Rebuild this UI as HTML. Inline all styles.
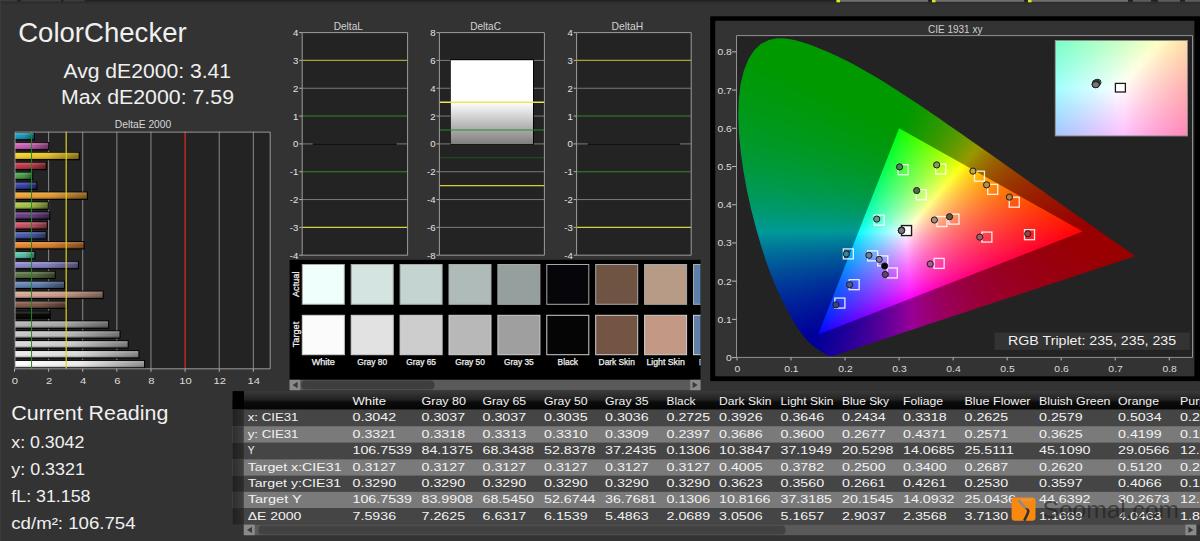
<!DOCTYPE html>
<html lang="en"><head><meta charset="utf-8"><title>ColorChecker</title>
<style>
html,body{margin:0;padding:0;background:#333}
body{width:1200px;height:541px;overflow:hidden;position:relative;font-family:"Liberation Sans",sans-serif}
svg{position:absolute;left:0;top:0;font-family:"Liberation Sans",sans-serif}
.cie{position:absolute;left:0;top:0;width:1200px;height:541px}
.cie i{position:absolute;display:block;height:2px}
.ins{position:absolute;overflow:hidden}
.ins i{position:absolute;display:block;left:0;width:100%;height:3px}
</style></head><body>
<svg width="1200" height="541" viewBox="0 0 1200 541">
<defs>
<linearGradient id="b0" x1="0" x2="1" y1="0" y2="0"><stop offset="0" stop-color="#1c9fc0"/><stop offset=".5" stop-color="#1a92b1"/><stop offset="1" stop-color="#10596c"/></linearGradient>
<linearGradient id="b1" x1="0" x2="1" y1="0" y2="0"><stop offset="0" stop-color="#cf62b8"/><stop offset=".5" stop-color="#be5aa9"/><stop offset="1" stop-color="#743767"/></linearGradient>
<linearGradient id="b2" x1="0" x2="1" y1="0" y2="0"><stop offset="0" stop-color="#f5cf2a"/><stop offset=".5" stop-color="#e1be27"/><stop offset="1" stop-color="#897418"/></linearGradient>
<linearGradient id="b3" x1="0" x2="1" y1="0" y2="0"><stop offset="0" stop-color="#c83c4c"/><stop offset=".5" stop-color="#b83746"/><stop offset="1" stop-color="#70222b"/></linearGradient>
<linearGradient id="b4" x1="0" x2="1" y1="0" y2="0"><stop offset="0" stop-color="#4fa552"/><stop offset=".5" stop-color="#49984b"/><stop offset="1" stop-color="#2c5c2e"/></linearGradient>
<linearGradient id="b5" x1="0" x2="1" y1="0" y2="0"><stop offset="0" stop-color="#3a46ad"/><stop offset=".5" stop-color="#35409f"/><stop offset="1" stop-color="#202761"/></linearGradient>
<linearGradient id="b6" x1="0" x2="1" y1="0" y2="0"><stop offset="0" stop-color="#efa636"/><stop offset=".5" stop-color="#dc9932"/><stop offset="1" stop-color="#865d1e"/></linearGradient>
<linearGradient id="b7" x1="0" x2="1" y1="0" y2="0"><stop offset="0" stop-color="#aac84c"/><stop offset=".5" stop-color="#9cb846"/><stop offset="1" stop-color="#5f702b"/></linearGradient>
<linearGradient id="b8" x1="0" x2="1" y1="0" y2="0"><stop offset="0" stop-color="#6d4187"/><stop offset=".5" stop-color="#643c7c"/><stop offset="1" stop-color="#3d244c"/></linearGradient>
<linearGradient id="b9" x1="0" x2="1" y1="0" y2="0"><stop offset="0" stop-color="#cf546c"/><stop offset=".5" stop-color="#be4d63"/><stop offset="1" stop-color="#742f3c"/></linearGradient>
<linearGradient id="b10" x1="0" x2="1" y1="0" y2="0"><stop offset="0" stop-color="#4b5db0"/><stop offset=".5" stop-color="#4556a2"/><stop offset="1" stop-color="#2a3463"/></linearGradient>
<linearGradient id="b11" x1="0" x2="1" y1="0" y2="0"><stop offset="0" stop-color="#e98a34"/><stop offset=".5" stop-color="#d67f30"/><stop offset="1" stop-color="#824d1d"/></linearGradient>
<linearGradient id="b12" x1="0" x2="1" y1="0" y2="0"><stop offset="0" stop-color="#5fc8ae"/><stop offset=".5" stop-color="#57b8a0"/><stop offset="1" stop-color="#357061"/></linearGradient>
<linearGradient id="b13" x1="0" x2="1" y1="0" y2="0"><stop offset="0" stop-color="#8f8bcf"/><stop offset=".5" stop-color="#8480be"/><stop offset="1" stop-color="#504e74"/></linearGradient>
<linearGradient id="b14" x1="0" x2="1" y1="0" y2="0"><stop offset="0" stop-color="#5f7648"/><stop offset=".5" stop-color="#576d42"/><stop offset="1" stop-color="#354228"/></linearGradient>
<linearGradient id="b15" x1="0" x2="1" y1="0" y2="0"><stop offset="0" stop-color="#6688b8"/><stop offset=".5" stop-color="#5e7da9"/><stop offset="1" stop-color="#394c67"/></linearGradient>
<linearGradient id="b16" x1="0" x2="1" y1="0" y2="0"><stop offset="0" stop-color="#d9a995"/><stop offset=".5" stop-color="#c89b89"/><stop offset="1" stop-color="#7a5f53"/></linearGradient>
<linearGradient id="b17" x1="0" x2="1" y1="0" y2="0"><stop offset="0" stop-color="#85604f"/><stop offset=".5" stop-color="#7a5849"/><stop offset="1" stop-color="#4a362c"/></linearGradient>
<linearGradient id="b18" x1="0" x2="1" y1="0" y2="0"><stop offset="0" stop-color="#0c0c0c"/><stop offset=".5" stop-color="#0b0b0b"/><stop offset="1" stop-color="#070707"/></linearGradient>
<linearGradient id="b19" x1="0" x2="1" y1="0" y2="0"><stop offset="0" stop-color="#b4b4b4"/><stop offset=".5" stop-color="#a6a6a6"/><stop offset="1" stop-color="#656565"/></linearGradient>
<linearGradient id="b20" x1="0" x2="1" y1="0" y2="0"><stop offset="0" stop-color="#c8c8c8"/><stop offset=".5" stop-color="#b8b8b8"/><stop offset="1" stop-color="#707070"/></linearGradient>
<linearGradient id="b21" x1="0" x2="1" y1="0" y2="0"><stop offset="0" stop-color="#dadada"/><stop offset=".5" stop-color="#c9c9c9"/><stop offset="1" stop-color="#7a7a7a"/></linearGradient>
<linearGradient id="b22" x1="0" x2="1" y1="0" y2="0"><stop offset="0" stop-color="#ececec"/><stop offset=".5" stop-color="#d9d9d9"/><stop offset="1" stop-color="#848484"/></linearGradient>
<linearGradient id="b23" x1="0" x2="1" y1="0" y2="0"><stop offset="0" stop-color="#ffffff"/><stop offset=".5" stop-color="#ebebeb"/><stop offset="1" stop-color="#8f8f8f"/></linearGradient>
<linearGradient id="dc" x1="0" x2="0" y1="0" y2="1"><stop offset="0" stop-color="#fff"/><stop offset=".5" stop-color="#fff"/><stop offset="1" stop-color="#7e7e7e"/></linearGradient>
<linearGradient id="th" x1="0" x2="0" y1="0" y2="1"><stop offset="0" stop-color="#3a3a3a"/><stop offset=".45" stop-color="#222"/><stop offset=".6" stop-color="#0c0c0c"/><stop offset="1" stop-color="#050505"/></linearGradient>
<linearGradient id="tc" x1="0" x2="1" y1="0" y2="0"><stop offset="0" stop-color="#000" stop-opacity=".3"/><stop offset="1" stop-color="#000" stop-opacity="0"/></linearGradient>
<linearGradient id="lg" gradientUnits="userSpaceOnUse" x1="0" x2="0" y1="497" y2="521"><stop offset=".45" stop-color="#8a8a92"/><stop offset=".5" stop-color="#2c3030"/></linearGradient>
</defs>
<rect x="0" y="0" width="1200" height="1.7" fill="#222"/>
<rect x="0" y="1.7" width="1200" height="2.3" fill="#2e2e2e"/>
<rect x="0" y="0" width="17" height="1.4" fill="#3d3d3d"/>
<rect x="21" y="0" width="40" height="1.4" fill="#3d3d3d"/>
<rect x="63.5" y="0" width="21" height="1.4" fill="#3d3d3d"/>
<rect x="836.5" y="0" width="91.5" height="1.8" fill="#707070"/>
<rect x="836.5" y="0" width="3.5" height="2.3" fill="#e0e818"/>
<rect x="932" y="0" width="92" height="1.8" fill="#707070"/>
<rect x="932" y="0" width="3.5" height="2.3" fill="#e0e818"/>
<rect x="1028" y="0" width="100" height="1.8" fill="#707070"/>
<rect x="1028" y="0" width="3.5" height="2.3" fill="#e0e818"/>
<rect x="1133" y="0" width="18" height="1.8" fill="#5c5c5c"/>
<rect x="1158" y="0" width="22" height="1.8" fill="#5c5c5c"/>
<rect x="1185" y="0" width="15" height="1.8" fill="#5c5c5c"/>
<rect x="0" y="1.7" width="1.2" height="540" fill="#3b3b3b"/>
<text x="18.2" y="41.5" font-size="28" fill="#f0f0f0" textLength="168.5" lengthAdjust="spacingAndGlyphs">ColorChecker</text>
<text x="63.5" y="77.7" font-size="19.5" fill="#f0f0f0" textLength="167.5" lengthAdjust="spacingAndGlyphs">Avg dE2000: 3.41</text>
<text x="61" y="104.3" font-size="19.5" fill="#f0f0f0" textLength="173" lengthAdjust="spacingAndGlyphs">Max dE2000: 7.59</text>
<rect x="15" y="131.6" width="255.2" height="237.2" fill="#232323"/>
<text x="114.8" y="128" font-size="10" fill="#d8d8d8" textLength="56.4" lengthAdjust="spacingAndGlyphs">DeltaE 2000</text>
<line x1="48.62" y1="131.6" x2="48.62" y2="368.8" stroke="#8a8a8a" stroke-width="1"/>
<line x1="82.74" y1="131.6" x2="82.74" y2="368.8" stroke="#8a8a8a" stroke-width="1"/>
<line x1="116.86" y1="131.6" x2="116.86" y2="368.8" stroke="#8a8a8a" stroke-width="1"/>
<line x1="150.98" y1="131.6" x2="150.98" y2="368.8" stroke="#8a8a8a" stroke-width="1"/>
<line x1="219.22" y1="131.6" x2="219.22" y2="368.8" stroke="#8a8a8a" stroke-width="1"/>
<line x1="253.34" y1="131.6" x2="253.34" y2="368.8" stroke="#8a8a8a" stroke-width="1"/>
<rect x="14.5" y="132.11" width="20.28" height="8.3" fill="#000"/>
<rect x="15" y="132.91" width="18.78" height="6.3" fill="url(#b0)"/>
<rect x="15" y="132.91" width="18.78" height="2.2" fill="#fff" opacity=".14"/>
<rect x="15" y="137.71" width="18.78" height="1.5" fill="#000" opacity=".16"/>
<rect x="14.5" y="142.02" width="34.78" height="8.3" fill="#000"/>
<rect x="15" y="142.82" width="33.28" height="6.3" fill="url(#b1)"/>
<rect x="15" y="142.82" width="33.28" height="2.2" fill="#fff" opacity=".14"/>
<rect x="15" y="147.62" width="33.28" height="1.5" fill="#000" opacity=".16"/>
<rect x="14.5" y="151.94" width="65.15" height="8.3" fill="#000"/>
<rect x="15" y="152.74" width="63.65" height="6.3" fill="url(#b2)"/>
<rect x="15" y="152.74" width="63.65" height="2.2" fill="#fff" opacity=".14"/>
<rect x="15" y="157.54" width="63.65" height="1.5" fill="#000" opacity=".16"/>
<rect x="14.5" y="161.85" width="32.22" height="8.3" fill="#000"/>
<rect x="15" y="162.65" width="30.72" height="6.3" fill="url(#b3)"/>
<rect x="15" y="162.65" width="30.72" height="2.2" fill="#fff" opacity=".14"/>
<rect x="15" y="167.45" width="30.72" height="1.5" fill="#000" opacity=".16"/>
<rect x="14.5" y="171.77" width="18.74" height="8.3" fill="#000"/>
<rect x="15" y="172.57" width="17.24" height="6.3" fill="url(#b4)"/>
<rect x="15" y="172.57" width="17.24" height="2.2" fill="#fff" opacity=".14"/>
<rect x="15" y="177.37" width="17.24" height="1.5" fill="#000" opacity=".16"/>
<rect x="14.5" y="181.68" width="22.84" height="8.3" fill="#000"/>
<rect x="15" y="182.48" width="21.34" height="6.3" fill="url(#b5)"/>
<rect x="15" y="182.48" width="21.34" height="2.2" fill="#fff" opacity=".14"/>
<rect x="15" y="187.28" width="21.34" height="1.5" fill="#000" opacity=".16"/>
<rect x="14.5" y="191.59" width="73.33" height="8.3" fill="#000"/>
<rect x="15" y="192.39" width="71.83" height="6.3" fill="url(#b6)"/>
<rect x="15" y="192.39" width="71.83" height="2.2" fill="#fff" opacity=".14"/>
<rect x="15" y="197.19" width="71.83" height="1.5" fill="#000" opacity=".16"/>
<rect x="14.5" y="201.51" width="34.27" height="8.3" fill="#000"/>
<rect x="15" y="202.31" width="32.77" height="6.3" fill="url(#b7)"/>
<rect x="15" y="202.31" width="32.77" height="2.2" fill="#fff" opacity=".14"/>
<rect x="15" y="207.11" width="32.77" height="1.5" fill="#000" opacity=".16"/>
<rect x="14.5" y="211.42" width="35.8" height="8.3" fill="#000"/>
<rect x="15" y="212.22" width="34.3" height="6.3" fill="url(#b8)"/>
<rect x="15" y="212.22" width="34.3" height="2.2" fill="#fff" opacity=".14"/>
<rect x="15" y="217.02" width="34.3" height="1.5" fill="#000" opacity=".16"/>
<rect x="14.5" y="221.34" width="33.24" height="8.3" fill="#000"/>
<rect x="15" y="222.14" width="31.74" height="6.3" fill="url(#b9)"/>
<rect x="15" y="222.14" width="31.74" height="2.2" fill="#fff" opacity=".14"/>
<rect x="15" y="226.94" width="31.74" height="1.5" fill="#000" opacity=".16"/>
<rect x="14.5" y="231.25" width="32.22" height="8.3" fill="#000"/>
<rect x="15" y="232.05" width="30.72" height="6.3" fill="url(#b10)"/>
<rect x="15" y="232.05" width="30.72" height="2.2" fill="#fff" opacity=".14"/>
<rect x="15" y="236.85" width="30.72" height="1.5" fill="#000" opacity=".16"/>
<rect x="14.5" y="241.17" width="70.03" height="8.3" fill="#000"/>
<rect x="15" y="241.97" width="68.53" height="6.3" fill="url(#b11)"/>
<rect x="15" y="241.97" width="68.53" height="2.2" fill="#fff" opacity=".14"/>
<rect x="15" y="246.77" width="68.53" height="1.5" fill="#000" opacity=".16"/>
<rect x="14.5" y="251.08" width="20.91" height="8.3" fill="#000"/>
<rect x="15" y="251.88" width="19.41" height="6.3" fill="url(#b12)"/>
<rect x="15" y="251.88" width="19.41" height="2.2" fill="#fff" opacity=".14"/>
<rect x="15" y="256.68" width="19.41" height="1.5" fill="#000" opacity=".16"/>
<rect x="14.5" y="261" width="64.34" height="8.3" fill="#000"/>
<rect x="15" y="261.8" width="62.84" height="6.3" fill="url(#b13)"/>
<rect x="15" y="261.8" width="62.84" height="2.2" fill="#fff" opacity=".14"/>
<rect x="15" y="266.6" width="62.84" height="1.5" fill="#000" opacity=".16"/>
<rect x="14.5" y="270.91" width="41.21" height="8.3" fill="#000"/>
<rect x="15" y="271.71" width="39.71" height="6.3" fill="url(#b14)"/>
<rect x="15" y="271.71" width="39.71" height="2.2" fill="#fff" opacity=".14"/>
<rect x="15" y="276.51" width="39.71" height="1.5" fill="#000" opacity=".16"/>
<rect x="14.5" y="280.83" width="50.54" height="8.3" fill="#000"/>
<rect x="15" y="281.63" width="49.04" height="6.3" fill="url(#b15)"/>
<rect x="15" y="281.63" width="49.04" height="2.2" fill="#fff" opacity=".14"/>
<rect x="15" y="286.43" width="49.04" height="1.5" fill="#000" opacity=".16"/>
<rect x="14.5" y="290.74" width="89.13" height="8.3" fill="#000"/>
<rect x="15" y="291.54" width="87.63" height="6.3" fill="url(#b16)"/>
<rect x="15" y="291.54" width="87.63" height="2.2" fill="#fff" opacity=".14"/>
<rect x="15" y="296.34" width="87.63" height="1.5" fill="#000" opacity=".16"/>
<rect x="14.5" y="300.66" width="53.04" height="8.3" fill="#000"/>
<rect x="15" y="301.46" width="51.54" height="6.3" fill="url(#b17)"/>
<rect x="15" y="301.46" width="51.54" height="2.2" fill="#fff" opacity=".14"/>
<rect x="15" y="306.26" width="51.54" height="1.5" fill="#000" opacity=".16"/>
<rect x="14.5" y="310.57" width="36.3" height="8.3" fill="#000"/>
<rect x="15" y="311.37" width="34.8" height="6.3" fill="url(#b18)"/>
<rect x="15" y="311.37" width="34.8" height="2.2" fill="#fff" opacity=".14"/>
<rect x="15" y="316.17" width="34.8" height="1.5" fill="#000" opacity=".16"/>
<rect x="14.5" y="320.48" width="94.6" height="8.3" fill="#000"/>
<rect x="15" y="321.28" width="93.1" height="6.3" fill="url(#b19)"/>
<rect x="15" y="321.28" width="93.1" height="2.2" fill="#fff" opacity=".14"/>
<rect x="15" y="326.08" width="93.1" height="1.5" fill="#000" opacity=".16"/>
<rect x="14.5" y="330.4" width="105.99" height="8.3" fill="#000"/>
<rect x="15" y="331.2" width="104.49" height="6.3" fill="url(#b20)"/>
<rect x="15" y="331.2" width="104.49" height="2.2" fill="#fff" opacity=".14"/>
<rect x="15" y="336" width="104.49" height="1.5" fill="#000" opacity=".16"/>
<rect x="14.5" y="340.31" width="114.14" height="8.3" fill="#000"/>
<rect x="15" y="341.11" width="112.64" height="6.3" fill="url(#b21)"/>
<rect x="15" y="341.11" width="112.64" height="2.2" fill="#fff" opacity=".14"/>
<rect x="15" y="345.91" width="112.64" height="1.5" fill="#000" opacity=".16"/>
<rect x="14.5" y="350.23" width="124.9" height="8.3" fill="#000"/>
<rect x="15" y="351.03" width="123.4" height="6.3" fill="url(#b22)"/>
<rect x="15" y="351.03" width="123.4" height="2.2" fill="#fff" opacity=".14"/>
<rect x="15" y="355.83" width="123.4" height="1.5" fill="#000" opacity=".16"/>
<rect x="14.5" y="360.14" width="130.55" height="8.3" fill="#000"/>
<rect x="15" y="360.94" width="129.05" height="6.3" fill="url(#b23)"/>
<rect x="15" y="360.94" width="129.05" height="2.2" fill="#fff" opacity=".14"/>
<rect x="15" y="365.74" width="129.05" height="1.5" fill="#000" opacity=".16"/>
<line x1="31.56" y1="131.6" x2="31.56" y2="368.8" stroke="#1f8a1f" stroke-width="1"/>
<line x1="66.18" y1="131.6" x2="66.18" y2="368.8" stroke="#dcd424" stroke-width="1.2"/>
<line x1="185.1" y1="131.6" x2="185.1" y2="368.8" stroke="#c82828" stroke-width="1.4"/>
<path d="M15 132.1V368.8H270.2V132.1" fill="none" stroke="#9a9a9a" stroke-width="1"/>
<line x1="15" y1="132.1" x2="270.2" y2="132.1" stroke="#9a9a9a" stroke-width="1"/>
<line x1="14.5" y1="368.8" x2="14.5" y2="371.8" stroke="#b0b0b0" stroke-width="1"/>
<text x="11.87" y="383.6" font-size="9.8" fill="#dcdcdc" textLength="6.27" lengthAdjust="spacingAndGlyphs">0</text>
<line x1="48.62" y1="368.8" x2="48.62" y2="371.8" stroke="#b0b0b0" stroke-width="1"/>
<text x="45.99" y="383.6" font-size="9.8" fill="#dcdcdc" textLength="6.27" lengthAdjust="spacingAndGlyphs">2</text>
<line x1="82.74" y1="368.8" x2="82.74" y2="371.8" stroke="#b0b0b0" stroke-width="1"/>
<text x="80.11" y="383.6" font-size="9.8" fill="#dcdcdc" textLength="6.27" lengthAdjust="spacingAndGlyphs">4</text>
<line x1="116.86" y1="368.8" x2="116.86" y2="371.8" stroke="#b0b0b0" stroke-width="1"/>
<text x="114.23" y="383.6" font-size="9.8" fill="#dcdcdc" textLength="6.27" lengthAdjust="spacingAndGlyphs">6</text>
<line x1="150.98" y1="368.8" x2="150.98" y2="371.8" stroke="#b0b0b0" stroke-width="1"/>
<text x="148.35" y="383.6" font-size="9.8" fill="#dcdcdc" textLength="6.27" lengthAdjust="spacingAndGlyphs">8</text>
<line x1="185.1" y1="368.8" x2="185.1" y2="371.8" stroke="#b0b0b0" stroke-width="1"/>
<text x="179.33" y="383.6" font-size="9.8" fill="#dcdcdc" textLength="12.54" lengthAdjust="spacingAndGlyphs">10</text>
<line x1="219.22" y1="368.8" x2="219.22" y2="371.8" stroke="#b0b0b0" stroke-width="1"/>
<text x="213.45" y="383.6" font-size="9.8" fill="#dcdcdc" textLength="12.54" lengthAdjust="spacingAndGlyphs">12</text>
<line x1="253.34" y1="368.8" x2="253.34" y2="371.8" stroke="#b0b0b0" stroke-width="1"/>
<text x="247.57" y="383.6" font-size="9.8" fill="#dcdcdc" textLength="12.54" lengthAdjust="spacingAndGlyphs">14</text>
<rect x="302.2" y="32.6" width="105.4" height="222.6" fill="#232323"/>
<text x="333.7" y="30" font-size="10.1" fill="#d0d0d0" textLength="29.2" lengthAdjust="spacingAndGlyphs">DeltaL</text>
<line x1="299.2" y1="255.2" x2="302.2" y2="255.2" stroke="#b0b0b0" stroke-width="1"/>
<text x="289.86" y="258.7" font-size="9.9" fill="#e4e4e4" textLength="8.54" lengthAdjust="spacingAndGlyphs">-4</text>
<line x1="299.2" y1="227.38" x2="302.2" y2="227.38" stroke="#b0b0b0" stroke-width="1"/>
<text x="289.86" y="230.88" font-size="9.9" fill="#e4e4e4" textLength="8.54" lengthAdjust="spacingAndGlyphs">-3</text>
<line x1="302.2" y1="227.38" x2="407.6" y2="227.38" stroke="#d8d040" stroke-width="1.2"/>
<line x1="299.2" y1="199.55" x2="302.2" y2="199.55" stroke="#b0b0b0" stroke-width="1"/>
<text x="289.86" y="203.05" font-size="9.9" fill="#e4e4e4" textLength="8.54" lengthAdjust="spacingAndGlyphs">-2</text>
<line x1="302.2" y1="199.55" x2="407.6" y2="199.55" stroke="#7a7a7a" stroke-width="1"/>
<line x1="299.2" y1="171.72" x2="302.2" y2="171.72" stroke="#b0b0b0" stroke-width="1"/>
<text x="289.86" y="175.22" font-size="9.9" fill="#e4e4e4" textLength="8.54" lengthAdjust="spacingAndGlyphs">-1</text>
<line x1="302.2" y1="171.72" x2="407.6" y2="171.72" stroke="#2f8a2f" stroke-width="1.1"/>
<line x1="299.2" y1="143.9" x2="302.2" y2="143.9" stroke="#b0b0b0" stroke-width="1"/>
<text x="293.06" y="147.4" font-size="9.9" fill="#e4e4e4" textLength="5.34" lengthAdjust="spacingAndGlyphs">0</text>
<line x1="302.2" y1="143.9" x2="407.6" y2="143.9" stroke="#7a7a7a" stroke-width="1"/>
<line x1="299.2" y1="116.07" x2="302.2" y2="116.07" stroke="#b0b0b0" stroke-width="1"/>
<text x="293.06" y="119.57" font-size="9.9" fill="#e4e4e4" textLength="5.34" lengthAdjust="spacingAndGlyphs">1</text>
<line x1="302.2" y1="116.07" x2="407.6" y2="116.07" stroke="#2f8a2f" stroke-width="1.1"/>
<line x1="299.2" y1="88.25" x2="302.2" y2="88.25" stroke="#b0b0b0" stroke-width="1"/>
<text x="293.06" y="91.75" font-size="9.9" fill="#e4e4e4" textLength="5.34" lengthAdjust="spacingAndGlyphs">2</text>
<line x1="302.2" y1="88.25" x2="407.6" y2="88.25" stroke="#7a7a7a" stroke-width="1"/>
<line x1="299.2" y1="60.42" x2="302.2" y2="60.42" stroke="#b0b0b0" stroke-width="1"/>
<text x="293.06" y="63.92" font-size="9.9" fill="#e4e4e4" textLength="5.34" lengthAdjust="spacingAndGlyphs">3</text>
<line x1="302.2" y1="60.42" x2="407.6" y2="60.42" stroke="#aaa238" stroke-width="1.1"/>
<line x1="299.2" y1="32.6" x2="302.2" y2="32.6" stroke="#b0b0b0" stroke-width="1"/>
<text x="293.06" y="36.1" font-size="9.9" fill="#e4e4e4" textLength="5.34" lengthAdjust="spacingAndGlyphs">4</text>
<rect x="439.4" y="32.6" width="105" height="222.6" fill="#232323"/>
<text x="470.2" y="30" font-size="10.1" fill="#d0d0d0" textLength="30.8" lengthAdjust="spacingAndGlyphs">DeltaC</text>
<line x1="436.4" y1="255.2" x2="439.4" y2="255.2" stroke="#b0b0b0" stroke-width="1"/>
<text x="427.06" y="258.7" font-size="9.9" fill="#e4e4e4" textLength="8.54" lengthAdjust="spacingAndGlyphs">-8</text>
<line x1="436.4" y1="227.38" x2="439.4" y2="227.38" stroke="#b0b0b0" stroke-width="1"/>
<text x="427.06" y="230.88" font-size="9.9" fill="#e4e4e4" textLength="8.54" lengthAdjust="spacingAndGlyphs">-6</text>
<line x1="439.4" y1="227.38" x2="544.4" y2="227.38" stroke="#7a7a7a" stroke-width="1"/>
<line x1="436.4" y1="199.55" x2="439.4" y2="199.55" stroke="#b0b0b0" stroke-width="1"/>
<text x="427.06" y="203.05" font-size="9.9" fill="#e4e4e4" textLength="8.54" lengthAdjust="spacingAndGlyphs">-4</text>
<line x1="439.4" y1="199.55" x2="544.4" y2="199.55" stroke="#7a7a7a" stroke-width="1"/>
<line x1="436.4" y1="171.72" x2="439.4" y2="171.72" stroke="#b0b0b0" stroke-width="1"/>
<text x="427.06" y="175.22" font-size="9.9" fill="#e4e4e4" textLength="8.54" lengthAdjust="spacingAndGlyphs">-2</text>
<line x1="439.4" y1="171.72" x2="544.4" y2="171.72" stroke="#7a7a7a" stroke-width="1"/>
<line x1="436.4" y1="143.9" x2="439.4" y2="143.9" stroke="#b0b0b0" stroke-width="1"/>
<text x="430.26" y="147.4" font-size="9.9" fill="#e4e4e4" textLength="5.34" lengthAdjust="spacingAndGlyphs">0</text>
<line x1="439.4" y1="143.9" x2="544.4" y2="143.9" stroke="#7a7a7a" stroke-width="1"/>
<line x1="436.4" y1="116.07" x2="439.4" y2="116.07" stroke="#b0b0b0" stroke-width="1"/>
<text x="430.26" y="119.57" font-size="9.9" fill="#e4e4e4" textLength="5.34" lengthAdjust="spacingAndGlyphs">2</text>
<line x1="439.4" y1="116.07" x2="544.4" y2="116.07" stroke="#7a7a7a" stroke-width="1"/>
<line x1="436.4" y1="88.25" x2="439.4" y2="88.25" stroke="#b0b0b0" stroke-width="1"/>
<text x="430.26" y="91.75" font-size="9.9" fill="#e4e4e4" textLength="5.34" lengthAdjust="spacingAndGlyphs">4</text>
<line x1="439.4" y1="88.25" x2="544.4" y2="88.25" stroke="#7a7a7a" stroke-width="1"/>
<line x1="436.4" y1="60.42" x2="439.4" y2="60.42" stroke="#b0b0b0" stroke-width="1"/>
<text x="430.26" y="63.92" font-size="9.9" fill="#e4e4e4" textLength="5.34" lengthAdjust="spacingAndGlyphs">6</text>
<line x1="439.4" y1="60.42" x2="544.4" y2="60.42" stroke="#7a7a7a" stroke-width="1"/>
<line x1="436.4" y1="32.6" x2="439.4" y2="32.6" stroke="#b0b0b0" stroke-width="1"/>
<text x="430.26" y="36.1" font-size="9.9" fill="#e4e4e4" textLength="5.34" lengthAdjust="spacingAndGlyphs">8</text>
<rect x="576.6" y="32.6" width="114.6" height="222.6" fill="#232323"/>
<text x="611.6" y="30" font-size="10.1" fill="#d0d0d0" textLength="31.6" lengthAdjust="spacingAndGlyphs">DeltaH</text>
<line x1="573.6" y1="255.2" x2="576.6" y2="255.2" stroke="#b0b0b0" stroke-width="1"/>
<text x="564.26" y="258.7" font-size="9.9" fill="#e4e4e4" textLength="8.54" lengthAdjust="spacingAndGlyphs">-4</text>
<line x1="573.6" y1="227.38" x2="576.6" y2="227.38" stroke="#b0b0b0" stroke-width="1"/>
<text x="564.26" y="230.88" font-size="9.9" fill="#e4e4e4" textLength="8.54" lengthAdjust="spacingAndGlyphs">-3</text>
<line x1="576.6" y1="227.38" x2="691.2" y2="227.38" stroke="#d8d040" stroke-width="1.2"/>
<line x1="573.6" y1="199.55" x2="576.6" y2="199.55" stroke="#b0b0b0" stroke-width="1"/>
<text x="564.26" y="203.05" font-size="9.9" fill="#e4e4e4" textLength="8.54" lengthAdjust="spacingAndGlyphs">-2</text>
<line x1="576.6" y1="199.55" x2="691.2" y2="199.55" stroke="#7a7a7a" stroke-width="1"/>
<line x1="573.6" y1="171.72" x2="576.6" y2="171.72" stroke="#b0b0b0" stroke-width="1"/>
<text x="564.26" y="175.22" font-size="9.9" fill="#e4e4e4" textLength="8.54" lengthAdjust="spacingAndGlyphs">-1</text>
<line x1="576.6" y1="171.72" x2="691.2" y2="171.72" stroke="#2f8a2f" stroke-width="1.1"/>
<line x1="573.6" y1="143.9" x2="576.6" y2="143.9" stroke="#b0b0b0" stroke-width="1"/>
<text x="567.46" y="147.4" font-size="9.9" fill="#e4e4e4" textLength="5.34" lengthAdjust="spacingAndGlyphs">0</text>
<line x1="576.6" y1="143.9" x2="691.2" y2="143.9" stroke="#7a7a7a" stroke-width="1"/>
<line x1="573.6" y1="116.07" x2="576.6" y2="116.07" stroke="#b0b0b0" stroke-width="1"/>
<text x="567.46" y="119.57" font-size="9.9" fill="#e4e4e4" textLength="5.34" lengthAdjust="spacingAndGlyphs">1</text>
<line x1="576.6" y1="116.07" x2="691.2" y2="116.07" stroke="#2f8a2f" stroke-width="1.1"/>
<line x1="573.6" y1="88.25" x2="576.6" y2="88.25" stroke="#b0b0b0" stroke-width="1"/>
<text x="567.46" y="91.75" font-size="9.9" fill="#e4e4e4" textLength="5.34" lengthAdjust="spacingAndGlyphs">2</text>
<line x1="576.6" y1="88.25" x2="691.2" y2="88.25" stroke="#7a7a7a" stroke-width="1"/>
<line x1="573.6" y1="60.42" x2="576.6" y2="60.42" stroke="#b0b0b0" stroke-width="1"/>
<text x="567.46" y="63.92" font-size="9.9" fill="#e4e4e4" textLength="5.34" lengthAdjust="spacingAndGlyphs">3</text>
<line x1="576.6" y1="60.42" x2="691.2" y2="60.42" stroke="#aaa238" stroke-width="1.1"/>
<line x1="573.6" y1="32.6" x2="576.6" y2="32.6" stroke="#b0b0b0" stroke-width="1"/>
<text x="567.46" y="36.1" font-size="9.9" fill="#e4e4e4" textLength="5.34" lengthAdjust="spacingAndGlyphs">4</text>
<rect x="312.7" y="143.3" width="84" height="1.6" fill="#0a0a0a"/>
<rect x="587.7" y="143.3" width="92.3" height="1.6" fill="#0a0a0a"/>
<rect x="450.3" y="59.2" width="83.6" height="85.6" fill="#000"/>
<rect x="450.8" y="60.2" width="82.2" height="83.9" fill="url(#dc)"/>
<line x1="439.4" y1="129.99" x2="544.4" y2="129.99" stroke="#2c8a2c" stroke-width="1.2" opacity="1"/>
<line x1="439.4" y1="157.81" x2="544.4" y2="157.81" stroke="#236c23" stroke-width="0.9" opacity="0.8"/>
<line x1="439.4" y1="102.16" x2="544.4" y2="102.16" stroke="#f0e850" stroke-width="1.5" opacity="1"/>
<line x1="439.4" y1="185.64" x2="544.4" y2="185.64" stroke="#d8d030" stroke-width="1.4" opacity="1"/>
<path d="M302.2 255.2V32.6H407.6V255.2Z" fill="none" stroke="#9c9c9c" stroke-width="1"/>
<path d="M439.4 255.2V32.6H544.4V255.2Z" fill="none" stroke="#9c9c9c" stroke-width="1"/>
<path d="M576.6 255.2V32.6H691.2V255.2Z" fill="none" stroke="#9c9c9c" stroke-width="1"/>
<rect x="289.6" y="259.8" width="410.9" height="120" fill="#000"/>
<clipPath id="swc"><rect x="289.6" y="259.8" width="410.9" height="120"/></clipPath>
<g clip-path="url(#swc)">
<rect x="302.3" y="264.5" width="42" height="39.8" fill="#eefffc" stroke="#a8a8a8" stroke-width="1"/>
<rect x="302.3" y="315.3" width="42" height="39.4" fill="#fbfbfb" stroke="#d0d0d0" stroke-width="1"/>
<text x="311.65" y="365.2" font-size="8.5" fill="#f4f4f4" textLength="23.3" lengthAdjust="spacingAndGlyphs" stroke="#f4f4f4" stroke-width=".25">White</text>
<rect x="351.2" y="264.5" width="42" height="39.8" fill="#d4e5e1" stroke="#a8a8a8" stroke-width="1"/>
<rect x="351.2" y="315.3" width="42" height="39.4" fill="#e2e2e2" stroke="#d0d0d0" stroke-width="1"/>
<text x="357.35" y="365.2" font-size="8.5" fill="#f4f4f4" textLength="29.7" lengthAdjust="spacingAndGlyphs" stroke="#f4f4f4" stroke-width=".25">Gray 80</text>
<rect x="400.1" y="264.5" width="42" height="39.8" fill="#c4d4d1" stroke="#a8a8a8" stroke-width="1"/>
<rect x="400.1" y="315.3" width="42" height="39.4" fill="#cdcdcd" stroke="#d0d0d0" stroke-width="1"/>
<text x="406.25" y="365.2" font-size="8.5" fill="#f4f4f4" textLength="29.7" lengthAdjust="spacingAndGlyphs" stroke="#f4f4f4" stroke-width=".25">Gray 65</text>
<rect x="449" y="264.5" width="42" height="39.8" fill="#aebbb9" stroke="#a8a8a8" stroke-width="1"/>
<rect x="449" y="315.3" width="42" height="39.4" fill="#b8b8b8" stroke="#d0d0d0" stroke-width="1"/>
<text x="455.15" y="365.2" font-size="8.5" fill="#f4f4f4" textLength="29.7" lengthAdjust="spacingAndGlyphs" stroke="#f4f4f4" stroke-width=".25">Gray 50</text>
<rect x="497.9" y="264.5" width="42" height="39.8" fill="#959f9e" stroke="#a8a8a8" stroke-width="1"/>
<rect x="497.9" y="315.3" width="42" height="39.4" fill="#9f9f9f" stroke="#d0d0d0" stroke-width="1"/>
<text x="504.05" y="365.2" font-size="8.5" fill="#f4f4f4" textLength="29.7" lengthAdjust="spacingAndGlyphs" stroke="#f4f4f4" stroke-width=".25">Gray 35</text>
<rect x="546.8" y="264.5" width="42" height="39.8" fill="#060509" stroke="#a8a8a8" stroke-width="1"/>
<rect x="546.8" y="315.3" width="42" height="39.4" fill="#050505" stroke="#d0d0d0" stroke-width="1"/>
<text x="557.6" y="365.2" font-size="8.5" fill="#f4f4f4" textLength="20.4" lengthAdjust="spacingAndGlyphs" stroke="#f4f4f4" stroke-width=".25">Black</text>
<rect x="595.7" y="264.5" width="42" height="39.8" fill="#6f5343" stroke="#a8a8a8" stroke-width="1"/>
<rect x="595.7" y="315.3" width="42" height="39.4" fill="#745444" stroke="#d0d0d0" stroke-width="1"/>
<text x="598.6" y="365.2" font-size="8.5" fill="#f4f4f4" textLength="36.2" lengthAdjust="spacingAndGlyphs" stroke="#f4f4f4" stroke-width=".25">Dark Skin</text>
<rect x="644.6" y="264.5" width="42" height="39.8" fill="#b89b86" stroke="#a8a8a8" stroke-width="1"/>
<rect x="644.6" y="315.3" width="42" height="39.4" fill="#c39885" stroke="#d0d0d0" stroke-width="1"/>
<text x="646.4" y="365.2" font-size="8.5" fill="#f4f4f4" textLength="38.4" lengthAdjust="spacingAndGlyphs" stroke="#f4f4f4" stroke-width=".25">Light Skin</text>
<rect x="693.5" y="264.5" width="42" height="39.8" fill="#5b80a9" stroke="#a8a8a8" stroke-width="1"/>
<rect x="693.5" y="315.3" width="42" height="39.4" fill="#6080a8" stroke="#d0d0d0" stroke-width="1"/>
<text x="699" y="365.2" font-size="8.5" fill="#f4f4f4" textLength="31" lengthAdjust="spacingAndGlyphs" stroke="#f4f4f4" stroke-width=".25">Blue Sky</text>
<text transform="translate(299.3 284.3) rotate(-90)" text-anchor="middle" font-size="9.2" fill="#f0f0f0" stroke="#f0f0f0" stroke-width=".25">Actual</text>
<text transform="translate(299.3 334.5) rotate(-90)" text-anchor="middle" font-size="9.2" fill="#f0f0f0" stroke="#f0f0f0" stroke-width=".25">Target</text>
</g>
<rect x="289.6" y="379.8" width="410.9" height="10.4" fill="#5a5a5a"/>
<rect x="289.6" y="379.8" width="10.6" height="10.4" fill="#8a8a8a"/>
<path d="M297.6 381.8v6.4l-5-3.2z" fill="#3a3a3a"/>
<rect x="301.3" y="380.6" width="133.2" height="8.8" fill="#3e3e3e" rx="4"/>
<rect x="690.2" y="379.8" width="10.3" height="10.4" fill="#8a8a8a"/>
<path d="M692.6 381.8v6.4l5-3.2z" fill="#3a3a3a"/>
<rect x="710.2" y="16.3" width="490" height="364.8" fill="#000"/>
<rect x="715.2" y="20.8" width="479.2" height="355.5" fill="#333333"/>
<rect x="736.5" y="35.6" width="456" height="321.8" fill="#232323"/>
<text x="928" y="32.5" font-size="10.4" fill="#cfcfcf" textLength="54.4" lengthAdjust="spacingAndGlyphs">CIE 1931 xy</text>
<path d="M736.5 357.4V35.6H1192.5V357.4Z" fill="none" stroke="#919191" stroke-width="1"/>
<line x1="737" y1="357.4" x2="737" y2="360.4" stroke="#b8b8b8" stroke-width="1"/>
<text x="734.51" y="371.6" font-size="9.8" fill="#dcdcdc" textLength="5.78" lengthAdjust="spacingAndGlyphs">0</text>
<line x1="732" y1="357.6" x2="736.5" y2="357.6" stroke="#b8b8b8" stroke-width="1"/>
<text x="726.12" y="361.1" font-size="9.8" fill="#dcdcdc" textLength="5.78" lengthAdjust="spacingAndGlyphs">0</text>
<line x1="791.03" y1="357.4" x2="791.03" y2="360.4" stroke="#b8b8b8" stroke-width="1"/>
<text x="784.21" y="371.6" font-size="9.8" fill="#dcdcdc" textLength="14.44" lengthAdjust="spacingAndGlyphs">0.1</text>
<line x1="732" y1="319.38" x2="736.5" y2="319.38" stroke="#b8b8b8" stroke-width="1"/>
<text x="717.46" y="322.88" font-size="9.8" fill="#dcdcdc" textLength="14.44" lengthAdjust="spacingAndGlyphs">0.1</text>
<line x1="845.06" y1="357.4" x2="845.06" y2="360.4" stroke="#b8b8b8" stroke-width="1"/>
<text x="838.24" y="371.6" font-size="9.8" fill="#dcdcdc" textLength="14.44" lengthAdjust="spacingAndGlyphs">0.2</text>
<line x1="732" y1="281.16" x2="736.5" y2="281.16" stroke="#b8b8b8" stroke-width="1"/>
<text x="717.46" y="284.66" font-size="9.8" fill="#dcdcdc" textLength="14.44" lengthAdjust="spacingAndGlyphs">0.2</text>
<line x1="899.09" y1="357.4" x2="899.09" y2="360.4" stroke="#b8b8b8" stroke-width="1"/>
<text x="892.27" y="371.6" font-size="9.8" fill="#dcdcdc" textLength="14.44" lengthAdjust="spacingAndGlyphs">0.3</text>
<line x1="732" y1="242.94" x2="736.5" y2="242.94" stroke="#b8b8b8" stroke-width="1"/>
<text x="717.46" y="246.44" font-size="9.8" fill="#dcdcdc" textLength="14.44" lengthAdjust="spacingAndGlyphs">0.3</text>
<line x1="953.12" y1="357.4" x2="953.12" y2="360.4" stroke="#b8b8b8" stroke-width="1"/>
<text x="946.3" y="371.6" font-size="9.8" fill="#dcdcdc" textLength="14.44" lengthAdjust="spacingAndGlyphs">0.4</text>
<line x1="732" y1="204.72" x2="736.5" y2="204.72" stroke="#b8b8b8" stroke-width="1"/>
<text x="717.46" y="208.22" font-size="9.8" fill="#dcdcdc" textLength="14.44" lengthAdjust="spacingAndGlyphs">0.4</text>
<line x1="1007.15" y1="357.4" x2="1007.15" y2="360.4" stroke="#b8b8b8" stroke-width="1"/>
<text x="1000.33" y="371.6" font-size="9.8" fill="#dcdcdc" textLength="14.44" lengthAdjust="spacingAndGlyphs">0.5</text>
<line x1="732" y1="166.5" x2="736.5" y2="166.5" stroke="#b8b8b8" stroke-width="1"/>
<text x="717.46" y="170" font-size="9.8" fill="#dcdcdc" textLength="14.44" lengthAdjust="spacingAndGlyphs">0.5</text>
<line x1="1061.18" y1="357.4" x2="1061.18" y2="360.4" stroke="#b8b8b8" stroke-width="1"/>
<text x="1054.36" y="371.6" font-size="9.8" fill="#dcdcdc" textLength="14.44" lengthAdjust="spacingAndGlyphs">0.6</text>
<line x1="732" y1="128.28" x2="736.5" y2="128.28" stroke="#b8b8b8" stroke-width="1"/>
<text x="717.46" y="131.78" font-size="9.8" fill="#dcdcdc" textLength="14.44" lengthAdjust="spacingAndGlyphs">0.6</text>
<line x1="1115.21" y1="357.4" x2="1115.21" y2="360.4" stroke="#b8b8b8" stroke-width="1"/>
<text x="1108.39" y="371.6" font-size="9.8" fill="#dcdcdc" textLength="14.44" lengthAdjust="spacingAndGlyphs">0.7</text>
<line x1="732" y1="90.06" x2="736.5" y2="90.06" stroke="#b8b8b8" stroke-width="1"/>
<text x="717.46" y="93.56" font-size="9.8" fill="#dcdcdc" textLength="14.44" lengthAdjust="spacingAndGlyphs">0.7</text>
<line x1="1169.24" y1="357.4" x2="1169.24" y2="360.4" stroke="#b8b8b8" stroke-width="1"/>
<text x="1162.42" y="371.6" font-size="9.8" fill="#dcdcdc" textLength="14.44" lengthAdjust="spacingAndGlyphs">0.8</text>
<line x1="732" y1="51.84" x2="736.5" y2="51.84" stroke="#b8b8b8" stroke-width="1"/>
<text x="717.46" y="55.34" font-size="9.8" fill="#dcdcdc" textLength="14.44" lengthAdjust="spacingAndGlyphs">0.8</text>
<rect x="232.6" y="391.1" width="967.4" height="18.5" fill="url(#th)"/>
<rect x="232.6" y="391.1" width="11.4" height="18.5" fill="#000"/>
<rect x="232.6" y="409.6" width="967.4" height="16.6" fill="#454545"/>
<rect x="232.6" y="426.2" width="967.4" height="16.6" fill="#7a7a7a"/>
<rect x="232.6" y="442.8" width="967.4" height="16.5" fill="#454545"/>
<rect x="232.6" y="459.3" width="967.4" height="16.5" fill="#7a7a7a"/>
<rect x="232.6" y="475.8" width="967.4" height="16" fill="#454545"/>
<rect x="232.6" y="491.8" width="967.4" height="16.4" fill="#7a7a7a"/>
<rect x="232.6" y="508.2" width="967.4" height="16.4" fill="#454545"/>
<rect x="232.6" y="409.6" width="11.2" height="16.6" fill="#2d2d2d"/>
<rect x="232.6" y="426.2" width="11.2" height="16.6" fill="#404040"/>
<rect x="232.6" y="442.8" width="11.2" height="16.5" fill="#2d2d2d"/>
<rect x="232.6" y="459.3" width="11.2" height="16.5" fill="#404040"/>
<rect x="232.6" y="475.8" width="11.2" height="16" fill="#2d2d2d"/>
<rect x="232.6" y="491.8" width="11.2" height="16.4" fill="#404040"/>
<rect x="232.6" y="508.2" width="11.2" height="16.4" fill="#2d2d2d"/>
<rect x="232.6" y="409.6" width="11.2" height="115" fill="url(#tc)"/>
<text x="352.5" y="404.6" font-size="11.5" fill="#f2f2f2" textLength="33.5" lengthAdjust="spacingAndGlyphs">White</text>
<text x="421.5" y="404.6" font-size="11.5" fill="#f2f2f2" textLength="44.5" lengthAdjust="spacingAndGlyphs">Gray 80</text>
<text x="482.5" y="404.6" font-size="11.5" fill="#f2f2f2" textLength="43.5" lengthAdjust="spacingAndGlyphs">Gray 65</text>
<text x="544" y="404.6" font-size="11.5" fill="#f2f2f2" textLength="43.5" lengthAdjust="spacingAndGlyphs">Gray 50</text>
<text x="605" y="404.6" font-size="11.5" fill="#f2f2f2" textLength="43.5" lengthAdjust="spacingAndGlyphs">Gray 35</text>
<text x="666.5" y="404.6" font-size="11.5" fill="#f2f2f2" textLength="29" lengthAdjust="spacingAndGlyphs">Black</text>
<text x="719" y="404.6" font-size="11.5" fill="#f2f2f2" textLength="52.5" lengthAdjust="spacingAndGlyphs">Dark Skin</text>
<text x="780.5" y="404.6" font-size="11.5" fill="#f2f2f2" textLength="53" lengthAdjust="spacingAndGlyphs">Light Skin</text>
<text x="842" y="404.6" font-size="11.5" fill="#f2f2f2" textLength="47" lengthAdjust="spacingAndGlyphs">Blue Sky</text>
<text x="903" y="404.6" font-size="11.5" fill="#f2f2f2" textLength="40" lengthAdjust="spacingAndGlyphs">Foliage</text>
<text x="964.5" y="404.6" font-size="11.5" fill="#f2f2f2" textLength="66" lengthAdjust="spacingAndGlyphs">Blue Flower</text>
<text x="1039" y="404.6" font-size="11.5" fill="#f2f2f2" textLength="71.5" lengthAdjust="spacingAndGlyphs">Bluish Green</text>
<text x="1118" y="404.6" font-size="11.5" fill="#f2f2f2" textLength="41" lengthAdjust="spacingAndGlyphs">Orange</text>
<text x="1180" y="404.6" font-size="11.5" fill="#f2f2f2" textLength="73" lengthAdjust="spacingAndGlyphs">Purplish Blue</text>
<text x="247.7" y="421.1" font-size="11.5" fill="#f2f2f2" textLength="50.8" lengthAdjust="spacingAndGlyphs">x: CIE31</text>
<text x="352.5" y="421.1" font-size="11.5" fill="#f2f2f2" textLength="43.62" lengthAdjust="spacingAndGlyphs">0.3042</text>
<text x="421.5" y="421.1" font-size="11.5" fill="#f2f2f2" textLength="43.62" lengthAdjust="spacingAndGlyphs">0.3037</text>
<text x="482.5" y="421.1" font-size="11.5" fill="#f2f2f2" textLength="43.62" lengthAdjust="spacingAndGlyphs">0.3037</text>
<text x="544" y="421.1" font-size="11.5" fill="#f2f2f2" textLength="43.62" lengthAdjust="spacingAndGlyphs">0.3035</text>
<text x="605" y="421.1" font-size="11.5" fill="#f2f2f2" textLength="43.62" lengthAdjust="spacingAndGlyphs">0.3036</text>
<text x="666.5" y="421.1" font-size="11.5" fill="#f2f2f2" textLength="43.62" lengthAdjust="spacingAndGlyphs">0.2725</text>
<text x="719" y="421.1" font-size="11.5" fill="#f2f2f2" textLength="43.62" lengthAdjust="spacingAndGlyphs">0.3926</text>
<text x="780.5" y="421.1" font-size="11.5" fill="#f2f2f2" textLength="43.62" lengthAdjust="spacingAndGlyphs">0.3646</text>
<text x="842" y="421.1" font-size="11.5" fill="#f2f2f2" textLength="43.62" lengthAdjust="spacingAndGlyphs">0.2434</text>
<text x="903" y="421.1" font-size="11.5" fill="#f2f2f2" textLength="43.62" lengthAdjust="spacingAndGlyphs">0.3318</text>
<text x="964.5" y="421.1" font-size="11.5" fill="#f2f2f2" textLength="43.62" lengthAdjust="spacingAndGlyphs">0.2625</text>
<text x="1039" y="421.1" font-size="11.5" fill="#f2f2f2" textLength="43.62" lengthAdjust="spacingAndGlyphs">0.2579</text>
<text x="1118" y="421.1" font-size="11.5" fill="#f2f2f2" textLength="43.62" lengthAdjust="spacingAndGlyphs">0.5034</text>
<text x="1180" y="421.1" font-size="11.5" fill="#f2f2f2" textLength="43.62" lengthAdjust="spacingAndGlyphs">0.2077</text>
<text x="247.7" y="437.7" font-size="11.5" fill="#f2f2f2" textLength="50.8" lengthAdjust="spacingAndGlyphs">y: CIE31</text>
<text x="352.5" y="437.7" font-size="11.5" fill="#f2f2f2" textLength="43.62" lengthAdjust="spacingAndGlyphs">0.3321</text>
<text x="421.5" y="437.7" font-size="11.5" fill="#f2f2f2" textLength="43.62" lengthAdjust="spacingAndGlyphs">0.3318</text>
<text x="482.5" y="437.7" font-size="11.5" fill="#f2f2f2" textLength="43.62" lengthAdjust="spacingAndGlyphs">0.3313</text>
<text x="544" y="437.7" font-size="11.5" fill="#f2f2f2" textLength="43.62" lengthAdjust="spacingAndGlyphs">0.3310</text>
<text x="605" y="437.7" font-size="11.5" fill="#f2f2f2" textLength="43.62" lengthAdjust="spacingAndGlyphs">0.3309</text>
<text x="666.5" y="437.7" font-size="11.5" fill="#f2f2f2" textLength="43.62" lengthAdjust="spacingAndGlyphs">0.2397</text>
<text x="719" y="437.7" font-size="11.5" fill="#f2f2f2" textLength="43.62" lengthAdjust="spacingAndGlyphs">0.3686</text>
<text x="780.5" y="437.7" font-size="11.5" fill="#f2f2f2" textLength="43.62" lengthAdjust="spacingAndGlyphs">0.3600</text>
<text x="842" y="437.7" font-size="11.5" fill="#f2f2f2" textLength="43.62" lengthAdjust="spacingAndGlyphs">0.2677</text>
<text x="903" y="437.7" font-size="11.5" fill="#f2f2f2" textLength="43.62" lengthAdjust="spacingAndGlyphs">0.4371</text>
<text x="964.5" y="437.7" font-size="11.5" fill="#f2f2f2" textLength="43.62" lengthAdjust="spacingAndGlyphs">0.2571</text>
<text x="1039" y="437.7" font-size="11.5" fill="#f2f2f2" textLength="43.62" lengthAdjust="spacingAndGlyphs">0.3625</text>
<text x="1118" y="437.7" font-size="11.5" fill="#f2f2f2" textLength="43.62" lengthAdjust="spacingAndGlyphs">0.4199</text>
<text x="1180" y="437.7" font-size="11.5" fill="#f2f2f2" textLength="43.62" lengthAdjust="spacingAndGlyphs">0.1908</text>
<text x="247.7" y="454.3" font-size="11.5" fill="#f2f2f2" textLength="6.8" lengthAdjust="spacingAndGlyphs">Y</text>
<text x="352.5" y="454.3" font-size="11.5" fill="#f2f2f2" textLength="59.48" lengthAdjust="spacingAndGlyphs">106.7539</text>
<text x="421.5" y="454.3" font-size="11.5" fill="#f2f2f2" textLength="51.55" lengthAdjust="spacingAndGlyphs">84.1375</text>
<text x="482.5" y="454.3" font-size="11.5" fill="#f2f2f2" textLength="51.55" lengthAdjust="spacingAndGlyphs">68.3438</text>
<text x="544" y="454.3" font-size="11.5" fill="#f2f2f2" textLength="51.55" lengthAdjust="spacingAndGlyphs">52.8378</text>
<text x="605" y="454.3" font-size="11.5" fill="#f2f2f2" textLength="51.55" lengthAdjust="spacingAndGlyphs">37.2435</text>
<text x="666.5" y="454.3" font-size="11.5" fill="#f2f2f2" textLength="43.62" lengthAdjust="spacingAndGlyphs">0.1306</text>
<text x="719" y="454.3" font-size="11.5" fill="#f2f2f2" textLength="51.55" lengthAdjust="spacingAndGlyphs">10.3847</text>
<text x="780.5" y="454.3" font-size="11.5" fill="#f2f2f2" textLength="51.55" lengthAdjust="spacingAndGlyphs">37.1949</text>
<text x="842" y="454.3" font-size="11.5" fill="#f2f2f2" textLength="51.55" lengthAdjust="spacingAndGlyphs">20.5298</text>
<text x="903" y="454.3" font-size="11.5" fill="#f2f2f2" textLength="51.55" lengthAdjust="spacingAndGlyphs">14.0685</text>
<text x="964.5" y="454.3" font-size="11.5" fill="#f2f2f2" textLength="49.43" lengthAdjust="spacingAndGlyphs">25.5111</text>
<text x="1039" y="454.3" font-size="11.5" fill="#f2f2f2" textLength="51.55" lengthAdjust="spacingAndGlyphs">45.1090</text>
<text x="1118" y="454.3" font-size="11.5" fill="#f2f2f2" textLength="51.55" lengthAdjust="spacingAndGlyphs">29.0566</text>
<text x="1180" y="454.3" font-size="11.5" fill="#f2f2f2" textLength="51.55" lengthAdjust="spacingAndGlyphs">12.4561</text>
<text x="247.7" y="470.8" font-size="11.5" fill="#f2f2f2" textLength="93.9" lengthAdjust="spacingAndGlyphs">Target x:CIE31</text>
<text x="352.5" y="470.8" font-size="11.5" fill="#f2f2f2" textLength="43.62" lengthAdjust="spacingAndGlyphs">0.3127</text>
<text x="421.5" y="470.8" font-size="11.5" fill="#f2f2f2" textLength="43.62" lengthAdjust="spacingAndGlyphs">0.3127</text>
<text x="482.5" y="470.8" font-size="11.5" fill="#f2f2f2" textLength="43.62" lengthAdjust="spacingAndGlyphs">0.3127</text>
<text x="544" y="470.8" font-size="11.5" fill="#f2f2f2" textLength="43.62" lengthAdjust="spacingAndGlyphs">0.3127</text>
<text x="605" y="470.8" font-size="11.5" fill="#f2f2f2" textLength="43.62" lengthAdjust="spacingAndGlyphs">0.3127</text>
<text x="666.5" y="470.8" font-size="11.5" fill="#f2f2f2" textLength="43.62" lengthAdjust="spacingAndGlyphs">0.3127</text>
<text x="719" y="470.8" font-size="11.5" fill="#f2f2f2" textLength="43.62" lengthAdjust="spacingAndGlyphs">0.4005</text>
<text x="780.5" y="470.8" font-size="11.5" fill="#f2f2f2" textLength="43.62" lengthAdjust="spacingAndGlyphs">0.3782</text>
<text x="842" y="470.8" font-size="11.5" fill="#f2f2f2" textLength="43.62" lengthAdjust="spacingAndGlyphs">0.2500</text>
<text x="903" y="470.8" font-size="11.5" fill="#f2f2f2" textLength="43.62" lengthAdjust="spacingAndGlyphs">0.3400</text>
<text x="964.5" y="470.8" font-size="11.5" fill="#f2f2f2" textLength="43.62" lengthAdjust="spacingAndGlyphs">0.2687</text>
<text x="1039" y="470.8" font-size="11.5" fill="#f2f2f2" textLength="43.62" lengthAdjust="spacingAndGlyphs">0.2620</text>
<text x="1118" y="470.8" font-size="11.5" fill="#f2f2f2" textLength="43.62" lengthAdjust="spacingAndGlyphs">0.5120</text>
<text x="1180" y="470.8" font-size="11.5" fill="#f2f2f2" textLength="43.62" lengthAdjust="spacingAndGlyphs">0.2157</text>
<text x="247.7" y="487.3" font-size="11.5" fill="#f2f2f2" textLength="93.5" lengthAdjust="spacingAndGlyphs">Target y:CIE31</text>
<text x="352.5" y="487.3" font-size="11.5" fill="#f2f2f2" textLength="43.62" lengthAdjust="spacingAndGlyphs">0.3290</text>
<text x="421.5" y="487.3" font-size="11.5" fill="#f2f2f2" textLength="43.62" lengthAdjust="spacingAndGlyphs">0.3290</text>
<text x="482.5" y="487.3" font-size="11.5" fill="#f2f2f2" textLength="43.62" lengthAdjust="spacingAndGlyphs">0.3290</text>
<text x="544" y="487.3" font-size="11.5" fill="#f2f2f2" textLength="43.62" lengthAdjust="spacingAndGlyphs">0.3290</text>
<text x="605" y="487.3" font-size="11.5" fill="#f2f2f2" textLength="43.62" lengthAdjust="spacingAndGlyphs">0.3290</text>
<text x="666.5" y="487.3" font-size="11.5" fill="#f2f2f2" textLength="43.62" lengthAdjust="spacingAndGlyphs">0.3290</text>
<text x="719" y="487.3" font-size="11.5" fill="#f2f2f2" textLength="43.62" lengthAdjust="spacingAndGlyphs">0.3623</text>
<text x="780.5" y="487.3" font-size="11.5" fill="#f2f2f2" textLength="43.62" lengthAdjust="spacingAndGlyphs">0.3560</text>
<text x="842" y="487.3" font-size="11.5" fill="#f2f2f2" textLength="43.62" lengthAdjust="spacingAndGlyphs">0.2661</text>
<text x="903" y="487.3" font-size="11.5" fill="#f2f2f2" textLength="43.62" lengthAdjust="spacingAndGlyphs">0.4261</text>
<text x="964.5" y="487.3" font-size="11.5" fill="#f2f2f2" textLength="43.62" lengthAdjust="spacingAndGlyphs">0.2530</text>
<text x="1039" y="487.3" font-size="11.5" fill="#f2f2f2" textLength="43.62" lengthAdjust="spacingAndGlyphs">0.3597</text>
<text x="1118" y="487.3" font-size="11.5" fill="#f2f2f2" textLength="43.62" lengthAdjust="spacingAndGlyphs">0.4066</text>
<text x="1180" y="487.3" font-size="11.5" fill="#f2f2f2" textLength="43.62" lengthAdjust="spacingAndGlyphs">0.1908</text>
<text x="247.7" y="503.3" font-size="11.5" fill="#f2f2f2" textLength="54.1" lengthAdjust="spacingAndGlyphs">Target Y</text>
<text x="352.5" y="503.3" font-size="11.5" fill="#f2f2f2" textLength="59.48" lengthAdjust="spacingAndGlyphs">106.7539</text>
<text x="421.5" y="503.3" font-size="11.5" fill="#f2f2f2" textLength="51.55" lengthAdjust="spacingAndGlyphs">83.9908</text>
<text x="482.5" y="503.3" font-size="11.5" fill="#f2f2f2" textLength="51.55" lengthAdjust="spacingAndGlyphs">68.5450</text>
<text x="544" y="503.3" font-size="11.5" fill="#f2f2f2" textLength="51.55" lengthAdjust="spacingAndGlyphs">52.6744</text>
<text x="605" y="503.3" font-size="11.5" fill="#f2f2f2" textLength="51.55" lengthAdjust="spacingAndGlyphs">36.7681</text>
<text x="666.5" y="503.3" font-size="11.5" fill="#f2f2f2" textLength="43.62" lengthAdjust="spacingAndGlyphs">0.1306</text>
<text x="719" y="503.3" font-size="11.5" fill="#f2f2f2" textLength="51.55" lengthAdjust="spacingAndGlyphs">10.8166</text>
<text x="780.5" y="503.3" font-size="11.5" fill="#f2f2f2" textLength="51.55" lengthAdjust="spacingAndGlyphs">37.3185</text>
<text x="842" y="503.3" font-size="11.5" fill="#f2f2f2" textLength="51.55" lengthAdjust="spacingAndGlyphs">20.1545</text>
<text x="903" y="503.3" font-size="11.5" fill="#f2f2f2" textLength="51.55" lengthAdjust="spacingAndGlyphs">14.0932</text>
<text x="964.5" y="503.3" font-size="11.5" fill="#f2f2f2" textLength="51.55" lengthAdjust="spacingAndGlyphs">25.0436</text>
<text x="1039" y="503.3" font-size="11.5" fill="#f2f2f2" textLength="51.55" lengthAdjust="spacingAndGlyphs">44.6392</text>
<text x="1118" y="503.3" font-size="11.5" fill="#f2f2f2" textLength="51.55" lengthAdjust="spacingAndGlyphs">30.2673</text>
<text x="1180" y="503.3" font-size="11.5" fill="#f2f2f2" textLength="50.49" lengthAdjust="spacingAndGlyphs">12.1120</text>
<text x="247.7" y="519.7" font-size="11.5" fill="#f2f2f2" textLength="53.7" lengthAdjust="spacingAndGlyphs">ΔE 2000</text>
<text x="352.5" y="519.7" font-size="11.5" fill="#f2f2f2" textLength="43.62" lengthAdjust="spacingAndGlyphs">7.5936</text>
<text x="421.5" y="519.7" font-size="11.5" fill="#f2f2f2" textLength="43.62" lengthAdjust="spacingAndGlyphs">7.2625</text>
<text x="482.5" y="519.7" font-size="11.5" fill="#f2f2f2" textLength="43.62" lengthAdjust="spacingAndGlyphs">6.6317</text>
<text x="544" y="519.7" font-size="11.5" fill="#f2f2f2" textLength="43.62" lengthAdjust="spacingAndGlyphs">6.1539</text>
<text x="605" y="519.7" font-size="11.5" fill="#f2f2f2" textLength="43.62" lengthAdjust="spacingAndGlyphs">5.4863</text>
<text x="666.5" y="519.7" font-size="11.5" fill="#f2f2f2" textLength="43.62" lengthAdjust="spacingAndGlyphs">2.0689</text>
<text x="719" y="519.7" font-size="11.5" fill="#f2f2f2" textLength="43.62" lengthAdjust="spacingAndGlyphs">3.0506</text>
<text x="780.5" y="519.7" font-size="11.5" fill="#f2f2f2" textLength="43.62" lengthAdjust="spacingAndGlyphs">5.1657</text>
<text x="842" y="519.7" font-size="11.5" fill="#f2f2f2" textLength="43.62" lengthAdjust="spacingAndGlyphs">2.9037</text>
<text x="903" y="519.7" font-size="11.5" fill="#f2f2f2" textLength="43.62" lengthAdjust="spacingAndGlyphs">2.3568</text>
<text x="964.5" y="519.7" font-size="11.5" fill="#f2f2f2" textLength="43.62" lengthAdjust="spacingAndGlyphs">3.7130</text>
<text x="1039" y="519.7" font-size="11.5" fill="#f2f2f2" textLength="43.62" lengthAdjust="spacingAndGlyphs">1.1669</text>
<text x="1118" y="519.7" font-size="11.5" fill="#f2f2f2" textLength="43.62" lengthAdjust="spacingAndGlyphs">4.0463</text>
<text x="1180" y="519.7" font-size="11.5" fill="#f2f2f2" textLength="43.62" lengthAdjust="spacingAndGlyphs">1.8312</text>
<rect x="243.8" y="524.6" width="956.2" height="10.6" fill="#5a5a5a"/>
<rect x="243.8" y="524.6" width="11" height="10.6" fill="#8a8a8a"/>
<path d="M252 526.7v6.4l-5-3.2z" fill="#3a3a3a"/>
<rect x="258.5" y="525.4" width="527" height="9" fill="#424242" rx="4"/>
<rect x="1185.4" y="524.6" width="11" height="10.6" fill="#8a8a8a"/>
<path d="M1188.4 526.7v6.4l5-3.2z" fill="#3a3a3a"/>
<rect x="1196.6" y="524.6" width="3.4" height="10.6" fill="#333333"/>
<text x="11.3" y="419.6" font-size="19.4" fill="#f0f0f0" textLength="157" lengthAdjust="spacingAndGlyphs">Current Reading</text>
<text x="11.3" y="447.9" font-size="16" fill="#f0f0f0" textLength="73" lengthAdjust="spacingAndGlyphs">x: 0.3042</text>
<text x="11.3" y="475.3" font-size="16" fill="#f0f0f0" textLength="73.6" lengthAdjust="spacingAndGlyphs">y: 0.3321</text>
<text x="11.3" y="502.4" font-size="16" fill="#f0f0f0" textLength="79.2" lengthAdjust="spacingAndGlyphs">fL: 31.158</text>
<text x="11.3" y="528.9" font-size="16" fill="#f0f0f0" textLength="124.2" lengthAdjust="spacingAndGlyphs">cd/m²: 106.754</text>
</svg>
<div class="cie" style="clip-path:polygon(831.13px 356.4px,830.91px 356.38px,831.02px 356.39px,831.19px 356.38px,831.09px 356.4px,830.88px 356.42px,830.79px 356.41px,830.91px 356.4px,831.01px 356.38px,830.96px 356.4px,830.81px 356.45px,830.65px 356.47px,830.52px 356.48px,830.4px 356.47px,830.31px 356.47px,830.25px 356.47px,830.13px 356.47px,829.97px 356.46px,829.79px 356.43px,829.59px 356.38px,829.37px 356.31px,829.12px 356.21px,828.84px 356.08px,828.55px 355.94px,828.24px 355.77px,827.9px 355.57px,827.5px 355.34px,827.04px 355.07px,826.55px 354.76px,826.03px 354.41px,825.45px 354.04px,824.81px 353.63px,824.08px 353.17px,823.25px 352.66px,822.31px 352.07px,821.26px 351.43px,820.12px 350.72px,818.87px 349.93px,817.49px 349.03px,815.98px 347.99px,814.36px 346.81px,812.63px 345.45px,810.74px 343.82px,808.63px 341.77px,806.22px 339.16px,803.51px 335.95px,800.57px 332.09px,797.35px 327.45px,793.81px 321.85px,789.95px 315.13px,785.7px 307.2px,781.04px 297.95px,776.04px 287.16px,770.92px 274.74px,765.87px 260.71px,760.86px 245.06px,755.88px 227.87px,751.17px 209.5px,746.96px 190.43px,743.43px 171.12px,740.72px 151.9px,738.94px 133.25px,738.26px 115.66px,738.81px 99.22px,740.63px 84.07px,743.83px 70.67px,748.4px 59.3px,754.2px 50.27px,761.09px 43.85px,768.82px 39.93px,777.08px 38.22px,785.67px 38.42px,794.44px 40.01px,803.31px 42.47px,812.18px 45.54px,820.86px 48.95px,829.26px 52.53px,837.47px 56.28px,845.54px 60.24px,853.51px 64.37px,861.4px 68.68px,869.26px 73.17px,877.07px 77.8px,884.85px 82.56px,892.6px 87.44px,900.34px 92.41px,908.07px 97.48px,915.8px 102.62px,923.53px 107.81px,931.26px 113.07px,938.98px 118.36px,946.7px 123.68px,954.4px 129.01px,962.08px 134.35px,969.72px 139.69px,977.33px 145.02px,984.88px 150.32px,992.37px 155.59px,999.78px 160.81px,1007.09px 165.97px,1014.3px 171.05px,1021.39px 176.05px,1028.33px 180.94px,1035.12px 185.72px,1041.74px 190.37px,1048.16px 194.89px,1054.37px 199.27px,1060.32px 203.47px,1065.92px 207.43px,1071.19px 211.14px,1076.19px 214.66px,1080.98px 218.03px,1085.5px 221.22px,1089.69px 224.16px,1093.55px 226.87px,1097.11px 229.37px,1100.41px 231.69px,1103.43px 233.82px,1106.2px 235.78px,1108.73px 237.56px,1111.02px 239.18px,1113.12px 240.66px,1115.04px 242px,1116.8px 243.24px,1118.4px 244.37px,1119.89px 245.42px,1121.29px 246.4px,1122.58px 247.31px,1123.78px 248.16px,1124.88px 248.94px,1125.9px 249.65px,1126.83px 250.31px,1127.67px 250.91px,1128.42px 251.43px,1129.07px 251.89px,1129.66px 252.3px,1130.19px 252.68px,1130.67px 253.02px,1131.1px 253.32px,1131.48px 253.59px,1131.81px 253.82px,1132.08px 254.02px,1132.31px 254.18px,1132.51px 254.32px,1132.71px 254.47px,1132.9px 254.6px,1133.07px 254.71px,1133.22px 254.82px,1133.37px 254.93px,1133.52px 255.04px,1133.67px 255.14px,1133.81px 255.24px,1133.95px 255.34px,1134.06px 255.42px,1134.14px 255.47px,1134.2px 255.51px,1134.24px 255.55px,1134.29px 255.58px,1134.32px 255.6px,1134.35px 255.62px,1134.65px 256.3px)">
<i style="top:38px;left:769px;width:24px;background:linear-gradient(90deg,#090,#090,#090,#090,#090)"></i>
<i style="top:40px;left:764px;width:37px;background:linear-gradient(90deg,#090,#090,#090,#090,#090,#090,#090,#090)"></i>
<i style="top:42px;left:760px;width:48px;background:linear-gradient(90deg,#090,#090,#090,#090,#090,#090,#090,#090,#090)"></i>
<i style="top:44px;left:757px;width:57px;background:linear-gradient(90deg,#090,#090,#090,#090,#090,#090,#090,#090,#090,#090,#090)"></i>
<i style="top:46px;left:755px;width:64px;background:linear-gradient(90deg,#090,#090,#090,#090,#090,#090,#090,#090,#090,#090,#090,#090)"></i>
<i style="top:48px;left:753px;width:71px;background:linear-gradient(90deg,#009901,#090,#090,#090,#090,#090,#090,#090,#090,#090,#090,#090,#090)"></i>
<i style="top:50px;left:751px;width:78px;background:linear-gradient(90deg,#009901,#090,#090,#090,#090,#090,#090,#090,#090,#090,#090,#090,#090,#090)"></i>
<i style="top:52px;left:750px;width:83px;background:linear-gradient(90deg,#009902,#009901,#090,#090,#090,#090,#090,#090,#090,#090,#090,#090,#090,#090,#090)"></i>
<i style="top:54px;left:749px;width:89px;background:linear-gradient(90deg,#009903,#009902,#009901,#090,#090,#090,#090,#090,#090,#090,#090,#090,#090,#090,#090,#090)"></i>
<i style="top:56px;left:748px;width:94px;background:linear-gradient(90deg,#009903,#009902,#009902,#009901,#090,#090,#090,#090,#090,#090,#090,#090,#090,#090,#090,#090,#090)"></i>
<i style="top:58px;left:746px;width:100px;background:linear-gradient(90deg,#009904,#009903,#009902,#009902,#009901,#090,#090,#090,#090,#090,#090,#090,#090,#090,#090,#090,#090,#090)"></i>
<i style="top:60px;left:746px;width:104px;background:linear-gradient(90deg,#009905,#009904,#009903,#009902,#009901,#009901,#090,#090,#090,#090,#090,#090,#090,#090,#090,#090,#090,#090,#090)"></i>
<i style="top:62px;left:745px;width:109px;background:linear-gradient(90deg,#009905,#009904,#009904,#009903,#009902,#009901,#090,#090,#090,#090,#090,#090,#090,#090,#090,#090,#090,#090,#090,#090)"></i>
<i style="top:64px;left:744px;width:114px;background:linear-gradient(90deg,#009906,#009905,#009904,#009903,#009902,#009902,#009901,#090,#090,#090,#090,#090,#090,#090,#090,#090,#090,#090,#090,#090)"></i>
<i style="top:66px;left:743px;width:118px;background:linear-gradient(90deg,#009907,#009906,#009905,#009904,#009903,#009902,#009902,#009901,#090,#090,#090,#090,#090,#090,#090,#090,#090,#090,#090,#090,#090)"></i>
<i style="top:68px;left:742px;width:123px;background:linear-gradient(90deg,#009908,#009907,#009906,#009905,#009904,#009903,#009902,#009901,#009901,#090,#090,#090,#090,#090,#090,#090,#090,#090,#090,#090,#090,#090)"></i>
<i style="top:70px;left:742px;width:126px;background:linear-gradient(90deg,#009908,#009907,#009906,#009905,#009905,#009904,#009903,#009902,#009901,#090,#090,#090,#090,#090,#090,#090,#090,#090,#090,#090,#090,#090)"></i>
<i style="top:72px;left:741px;width:131px;background:linear-gradient(90deg,#009909,#009908,#009907,#009906,#009905,#009904,#009903,#009903,#009902,#009901,#090,#090,#090,#090,#090,#090,#090,#090,#090,#090,#090,#090,#090)"></i>
<i style="top:74px;left:741px;width:134px;background:linear-gradient(90deg,#00990a,#009909,#009908,#009907,#009906,#009905,#009904,#009903,#009902,#009901,#009901,#090,#090,#090,#090,#090,#090,#090,#090,#090,#090,#090,#090,#090)"></i>
<i style="top:76px;left:740px;width:139px;background:linear-gradient(90deg,#00990b,#00990a,#009909,#009908,#009907,#009906,#009905,#009904,#009903,#009902,#009901,#009901,#090,#090,#090,#090,#090,#090,#090,#090,#090,#090,#090,#090,#090)"></i>
<i style="top:78px;left:740px;width:142px;background:linear-gradient(90deg,#00990b,#00990a,#009909,#009908,#009908,#009907,#009906,#009905,#009904,#009903,#009902,#009901,#090,#090,#090,#090,#090,#090,#090,#090,#090,#090,#090,#090,#090)"></i>
<i style="top:80px;left:739px;width:146px;background:linear-gradient(90deg,#00990c,#00990b,#00990a,#009909,#009908,#009907,#009907,#009906,#009905,#009904,#009903,#009902,#009901,#090,#090,#090,#090,#090,#090,#090,#090,#090,#090,#090,#090,#090)"></i>
<i style="top:82px;left:739px;width:149px;background:linear-gradient(90deg,#00990d,#00990c,#00990b,#00990a,#009909,#009908,#009907,#009906,#009905,#009904,#009903,#009902,#009901,#090,#090,#090,#090,#090,#090,#090,#090,#090,#090,#090,#090,#090)"></i>
<i style="top:84px;left:739px;width:152px;background:linear-gradient(90deg,#00990e,#00990d,#00990c,#00990b,#00990a,#009909,#009908,#009907,#009906,#009905,#009904,#009903,#009902,#009901,#090,#090,#090,#090,#090,#090,#090,#090,#090,#090,#090,#090,#090)"></i>
<i style="top:86px;left:738px;width:157px;background:linear-gradient(90deg,#00990f,#00990e,#00990d,#00990c,#00990b,#00990a,#009909,#009908,#009907,#009906,#009905,#009904,#009903,#009902,#009901,#090,#090,#090,#090,#090,#090,#090,#090,#090,#090,#090,#090,#090)"></i>
<i style="top:88px;left:738px;width:160px;background:linear-gradient(90deg,#00990f,#00990e,#00990e,#00990d,#00990b,#00990a,#009909,#009908,#009907,#009906,#009905,#009904,#009903,#009902,#009901,#090,#090,#090,#090,#090,#090,#090,#090,#090,#090,#090,#090,#090)"></i>
<i style="top:90px;left:738px;width:163px;background:linear-gradient(90deg,#009910,#00990f,#00990e,#00990d,#00990c,#00990b,#00990a,#009909,#009908,#009907,#009906,#009905,#009904,#009903,#009902,#009901,#090,#090,#090,#090,#090,#090,#090,#090,#090,#090,#090,#090,#090)"></i>
<i style="top:92px;left:738px;width:166px;background:linear-gradient(90deg,#091,#009910,#00990f,#00990e,#00990d,#00990c,#00990b,#00990a,#009909,#009908,#009907,#009906,#009905,#009904,#009902,#009901,#090,#090,#090,#090,#090,#090,#090,#090,#090,#090,#090,#090,#090)"></i>
<i style="top:94px;left:737px;width:170px;background:linear-gradient(90deg,#009912,#091,#009910,#00990f,#00990e,#00990d,#00990c,#00990b,#00990a,#009909,#009908,#009907,#009906,#009905,#009904,#009902,#009901,#090,#090,#090,#090,#090,#090,#090,#090,#090,#090,#090,#090,#090)"></i>
<i style="top:96px;left:737px;width:173px;background:linear-gradient(90deg,#009913,#009912,#091,#009910,#00990f,#00990e,#00990d,#00990c,#00990b,#00990a,#009908,#009907,#009906,#009905,#009904,#009903,#009902,#009901,#090,#090,#090,#090,#090,#090,#090,#090,#090,#090,#090,#090)"></i>
<i style="top:98px;left:737px;width:176px;background:linear-gradient(90deg,#009914,#009913,#009912,#091,#009910,#00990f,#00990e,#00990d,#00990c,#00990a,#009909,#009908,#009907,#009906,#009905,#009904,#009903,#009902,#009901,#090,#090,#090,#090,#090,#090,#090,#090,#090,#090,#090,#029900)"></i>
<i style="top:100px;left:737px;width:179px;background:linear-gradient(90deg,#009915,#009914,#009913,#009912,#091,#009910,#00990e,#00990d,#00990c,#00990b,#00990a,#009909,#009908,#009907,#009905,#009904,#009903,#009902,#009901,#090,#090,#090,#090,#090,#090,#090,#090,#090,#090,#090,#059900)"></i>
<i style="top:102px;left:737px;width:182px;background:linear-gradient(90deg,#009916,#009915,#009914,#009913,#009912,#009910,#00990f,#00990e,#00990d,#00990c,#00990b,#00990a,#009909,#009908,#009907,#009905,#009904,#009903,#009902,#009901,#090,#090,#090,#090,#090,#090,#090,#090,#090,#090,#039900,#099900)"></i>
<i style="top:104px;left:737px;width:185px;background:linear-gradient(90deg,#009917,#009916,#009914,#009913,#009912,#091,#009910,#00990f,#00990e,#00990d,#00990c,#00990b,#009909,#009908,#009907,#009906,#009905,#009904,#009902,#009901,#090,#090,#090,#090,#090,#090,#090,#090,#090,#019900,#079900,#0c9900)"></i>
<i style="top:106px;left:737px;width:188px;background:linear-gradient(90deg,#009917,#009916,#009915,#009914,#009913,#009912,#091,#009910,#00990f,#00990e,#00990d,#00990c,#00990a,#009909,#009908,#009907,#009906,#009905,#009903,#009902,#009901,#090,#090,#090,#090,#090,#090,#090,#090,#090,#059900,#0a9900,#190)"></i>
<i style="top:108px;left:737px;width:191px;background:linear-gradient(90deg,#009918,#009917,#009916,#009915,#009914,#009913,#009912,#091,#009910,#00990f,#00990d,#00990c,#00990b,#00990a,#009909,#009908,#009906,#009905,#009904,#009903,#009901,#090,#090,#090,#090,#090,#090,#090,#090,#039900,#089900,#0e9900,#159900)"></i>
<i style="top:110px;left:737px;width:194px;background:linear-gradient(90deg,#009919,#009918,#009917,#009916,#009915,#009914,#009913,#009912,#091,#009910,#00990f,#00990d,#00990c,#00990b,#00990a,#009909,#009907,#009906,#009905,#009904,#009903,#009901,#090,#090,#090,#090,#090,#090,#090,#019900,#069900,#0c9900,#139900,#1a9900)"></i>
<i style="top:112px;left:737px;width:197px;background:linear-gradient(90deg,#00991a,#009919,#009918,#009917,#009916,#009915,#009914,#009913,#009912,#091,#00990f,#00990e,#00990d,#00990c,#00990b,#009909,#009908,#009907,#009905,#009904,#009903,#009902,#009901,#090,#090,#090,#090,#090,#090,#049900,#0a9900,#190,#179900,#1f9900)"></i>
<i style="top:114px;left:736px;width:201px;background:linear-gradient(90deg,#00991c,#00991b,#00991a,#009918,#009917,#009916,#009915,#009914,#009913,#009912,#091,#00990f,#00990e,#00990d,#00990c,#00990b,#009909,#009908,#009907,#009906,#009904,#009903,#009902,#009901,#090,#090,#090,#090,#090,#029900,#089900,#0e9900,#159900,#1c9900,#249900)"></i>
<i style="top:116px;left:736px;width:204px;background:linear-gradient(90deg,#00991d,#00991c,#00991b,#009919,#009918,#009917,#009916,#009915,#009914,#009913,#091,#009910,#00990f,#00990e,#00990d,#00990b,#00990a,#009909,#009907,#009906,#009905,#009903,#009902,#009901,#090,#090,#090,#090,#090,#069900,#0c9900,#139900,#1a9900,#219900,#2a9900)"></i>
<i style="top:118px;left:737px;width:206px;background:linear-gradient(90deg,#00991e,#00991c,#00991b,#00991a,#009919,#009918,#009917,#009916,#009915,#009914,#009912,#091,#009910,#00990f,#00990e,#00990c,#00990b,#00990a,#009909,#009907,#009906,#009905,#009903,#009902,#009901,#090,#090,#090,#090,#049900,#0a9900,#190,#189900,#1f9900,#279900,#2f9900)"></i>
<i style="top:120px;left:737px;width:209px;background:linear-gradient(90deg,#00991f,#00991e,#00991c,#00991b,#00991a,#009919,#009918,#009917,#009916,#009915,#009913,#009912,#091,#009910,#00990e,#00990d,#00990c,#00990a,#009909,#009908,#009906,#009905,#009904,#009902,#009901,#090,#090,#090,#029900,#089900,#0e9900,#159900,#1d9900,#249900,#2d9900,#359900)"></i>
<i style="top:122px;left:737px;width:211px;background:linear-gradient(90deg,#009920,#00991f,#00991e,#00991d,#00991b,#00991a,#009919,#009918,#009917,#009916,#009915,#009913,#009912,#091,#009910,#00990e,#00990d,#00990c,#00990b,#009909,#009908,#009907,#009905,#009904,#009902,#009901,#090,#090,#090,#059900,#0b9900,#129900,#199900,#219900,#299900,#319900,#3a9900)"></i>
<i style="top:124px;left:737px;width:214px;background:linear-gradient(90deg,#009921,#009920,#00991f,#00991e,#00991d,#00991b,#00991a,#009919,#009918,#009917,#009916,#009914,#009913,#009912,#091,#00990f,#00990e,#00990d,#00990b,#00990a,#009908,#009907,#009906,#009904,#009903,#009902,#090,#090,#039900,#099900,#0f9900,#169900,#1e9900,#269900,#2f9900,#389900,#419900)"></i>
<i style="top:126px;left:737px;width:217px;background:linear-gradient(90deg,#092,#009921,#009920,#00991f,#00991e,#00991d,#00991c,#00991a,#009919,#009918,#009917,#009916,#009914,#009913,#009912,#091,#00990f,#00990e,#00990d,#00990b,#00990a,#009908,#009907,#009906,#009904,#009903,#009902,#090,#019900,#079900,#0e9900,#159900,#1c9900,#249900,#2c9900,#359900,#3e9900,#489900)"></i>
<i style="top:128px;left:737px;width:220px;background:linear-gradient(90deg,#009923,#092,#009921,#009920,#00991f,#00991e,#00991d,#00991b,#00991a,#009919,#009918,#009917,#009915,#009914,#009913,#091,#009910,#00990f,#00990d,#00990c,#00990b,#009909,#009908,#009906,#009905,#009903,#009902,#009901,#049900,#0b9900,#129900,#199900,#219900,#299900,#329900,#3c9900,#459900,#4f9900)"></i>
<i style="top:130px;left:737px;width:223px;background:linear-gradient(90deg,#009924,#009923,#092,#009921,#009920,#00991f,#00991e,#00991d,#00991c,#00991a,#009919,#009918,#009917,#009915,#009914,#009913,#091,#009910,#00990f,#00990d,#00990c,#00990b,#009909,#009908,#009906,#009905,#009903,#009902,#039901,#099900,#109900,#179900,#1f9900,#279900,#309900,#399900,#439900,#4d9900,#579900)"></i>
<i style="top:132px;left:737px;width:226px;background:linear-gradient(90deg,#009926,#009924,#009923,#092,#009921,#009920,#00991f,#00991e,#00991d,#00991b,#00991a,#009919,#009918,#009916,#009915,#009914,#009912,#091,#009910,#00990e,#00990d,#00990b,#00990a,#009908,#009907,#009905,#009904,#009902,#069901,#0d9900,#149900,#1c9900,#249900,#2d9900,#369900,#409900,#4a9900,#549900,#5f9900)"></i>
<i style="top:134px;left:737px;width:229px;background:linear-gradient(90deg,#009927,#009926,#009925,#009924,#009923,#009921,#009920,#00991f,#00991e,#00991d,#00991c,#00991a,#009919,#009918,#009916,#009915,#009914,#009912,#091,#009910,#00990e,#00990d,#00990b,#00990a,#009908,#009907,#009905,#009904,#059902,#0b9901,#129900,#1a9900,#290,#2b9900,#349900,#3d9900,#479900,#529900,#5d9900,#689900)"></i>
<i style="top:136px;left:737px;width:232px;background:linear-gradient(90deg,#009928,#009927,#009926,#009925,#009924,#009923,#009921,#009920,#00991f,#00991e,#00991d,#00991b,#00991a,#009919,#009917,#009916,#009915,#009913,#009912,#009910,#00990f,#00990e,#00990c,#00990a,#009909,#009907,#009906,#029904,#089903,#0f9901,#179900,#1f9900,#279900,#309900,#3a9900,#490,#4f9900,#5a9900,#659900,#719900)"></i>
<i style="top:138px;left:738px;width:233px;background:linear-gradient(90deg,#009929,#009928,#009927,#009926,#009925,#009924,#009923,#009921,#009920,#00991f,#00991e,#00991c,#00991b,#00991a,#009918,#009917,#009916,#009914,#009913,#091,#009910,#00990e,#00990d,#00990b,#00990a,#009908,#009906,#049905,#0b9903,#129902,#1a9900,#239900,#2c9900,#359900,#3f9900,#4a9900,#590,#609900,#6c9900,#799900)"></i>
<i style="top:140px;left:738px;width:236px;background:linear-gradient(90deg,#00992a,#009929,#009928,#009927,#009926,#009925,#009924,#009923,#092,#009920,#00991f,#00991e,#00991d,#00991b,#00991a,#009919,#009917,#009916,#009914,#009913,#091,#009910,#00990e,#00990d,#00990b,#00990a,#009908,#039906,#099905,#119903,#199902,#219900,#2a9900,#390,#3d9900,#479900,#529900,#5d9900,#699900,#769900,#839900)"></i>
<i style="top:142px;left:738px;width:239px;background:linear-gradient(90deg,#00992c,#00992b,#00992a,#009929,#009927,#009926,#009925,#009924,#009923,#092,#009920,#00991f,#00991e,#00991c,#00991b,#00991a,#009918,#009917,#009915,#009914,#009912,#091,#00990f,#00990e,#00990c,#00990a,#009909,#069907,#0d9905,#159904,#1d9902,#269900,#2f9900,#399900,#490,#4f9900,#5a9900,#690,#729900,#7f9900,#8d9900)"></i>
<i style="top:144px;left:738px;width:242px;background:linear-gradient(90deg,#00992d,#00992c,#00992b,#00992a,#009929,#009928,#009927,#009925,#009924,#009923,#092,#009921,#00991f,#00991e,#00991d,#00991b,#00991a,#009919,#009917,#009916,#009914,#009913,#091,#00990f,#00990e,#00990c,#00990a,#059909,#0c9907,#139905,#1c9904,#249902,#2e9900,#379900,#429900,#4c9900,#589900,#639900,#709900,#7d9900,#8a9900,#989900)"></i>
<i style="top:146px;left:738px;width:245px;background:linear-gradient(90deg,#00992f,#00992e,#00992c,#00992b,#00992a,#009929,#009928,#009927,#009926,#009924,#009923,#092,#009921,#00991f,#00991e,#00991c,#00991b,#00991a,#009918,#009917,#009915,#009914,#009912,#009910,#00990f,#00990d,#01990b,#089909,#109908,#189906,#209904,#2a9902,#339901,#3e9900,#489900,#549900,#609900,#6c9900,#799900,#879900,#959900,#998e00)"></i>
<i style="top:148px;left:739px;width:247px;background:linear-gradient(90deg,#009930,#00992f,#00992e,#00992d,#00992c,#00992a,#009929,#009928,#009927,#009926,#009925,#009923,#092,#009921,#00991f,#00991e,#00991d,#00991b,#00991a,#009918,#009917,#009915,#009914,#009912,#009910,#00990f,#01990d,#07990b,#0f9909,#179908,#1f9906,#289904,#329902,#3c9901,#479900,#529900,#5e9900,#6a9900,#790,#849900,#939900,#999100,#998400)"></i>
<i style="top:150px;left:739px;width:250px;background:linear-gradient(90deg,#009931,#009930,#00992f,#00992e,#00992d,#00992c,#00992b,#00992a,#009928,#009927,#009926,#009925,#009923,#092,#009921,#00991f,#00991e,#00991c,#00991b,#009919,#009918,#009916,#009915,#009913,#091,#009910,#04990e,#0b990c,#13990a,#1b9908,#249907,#2e9905,#389903,#439901,#4e9900,#5a9900,#690,#739900,#819900,#8f9900,#999400,#998700,#997b00)"></i>
<i style="top:152px;left:739px;width:252px;background:linear-gradient(90deg,#093,#009932,#009931,#009930,#00992f,#00992d,#00992c,#00992b,#00992a,#009929,#009927,#009926,#009925,#009923,#092,#009921,#00991f,#00991e,#00991c,#00991b,#009919,#009917,#009916,#009914,#009912,#091,#06990f,#0d990d,#16990b,#1f9909,#289907,#329905,#3d9904,#489902,#549900,#609900,#6d9900,#7b9900,#899900,#989900,#998c00,#997f00,#997400)"></i>
<i style="top:154px;left:739px;width:255px;background:linear-gradient(90deg,#009934,#093,#009932,#009931,#009930,#00992f,#00992e,#00992d,#00992b,#00992a,#009929,#009928,#009926,#009925,#009924,#092,#009921,#00991f,#00991e,#00991c,#00991b,#009919,#009918,#009916,#009914,#009913,#059911,#0c990f,#14990d,#1d990b,#279909,#319907,#3b9906,#469904,#529902,#5e9900,#6b9900,#789900,#879900,#959900,#998e00,#998100,#997600,#996c00)"></i>
<i style="top:156px;left:740px;width:257px;background:linear-gradient(90deg,#009936,#009935,#009934,#093,#009931,#009930,#00992f,#00992e,#00992d,#00992c,#00992a,#009929,#009928,#009926,#009925,#009924,#092,#009921,#00991f,#00991e,#00991c,#00991a,#009919,#009917,#009915,#019914,#089912,#109910,#19990e,#23990c,#2c990a,#379908,#429906,#4e9904,#5a9902,#679900,#749900,#839900,#929900,#999100,#998400,#997800,#996e00,#996500)"></i>
<i style="top:158px;left:740px;width:260px;background:linear-gradient(90deg,#009937,#009936,#009935,#009934,#093,#009932,#009931,#009930,#00992f,#00992d,#00992c,#00992b,#00992a,#009928,#009927,#009925,#009924,#009923,#009921,#009920,#00991e,#00991c,#00991b,#009919,#009917,#019916,#079914,#0f9912,#189910,#21990e,#2b990c,#35990a,#409908,#4c9906,#589904,#659902,#729900,#809900,#8f9900,#999300,#998600,#997a00,#996f00,#960,#995e00)"></i>
<i style="top:160px;left:740px;width:263px;background:linear-gradient(90deg,#009939,#009938,#009937,#009936,#009935,#009934,#009932,#009931,#009930,#00992f,#00992e,#00992c,#00992b,#00992a,#009928,#009927,#009925,#009924,#092,#009921,#00991f,#00991e,#00991c,#00991a,#009919,#039917,#0b9915,#139913,#1c9911,#26990f,#30990d,#3b990b,#479909,#539907,#609905,#6e9903,#7c9901,#8b9900,#999700,#998900,#997c00,#997100,#996700,#995f00,#995700)"></i>
<i style="top:162px;left:740px;width:266px;background:linear-gradient(90deg,#00993b,#00993a,#009939,#009938,#009937,#009935,#009934,#093,#009932,#009931,#009930,#00992e,#00992d,#00992c,#00992a,#009929,#009927,#009926,#009925,#009923,#009921,#009920,#00991e,#00991c,#00991b,#029919,#0a9917,#129915,#1b9913,#259911,#2f990f,#3a990d,#45990b,#529909,#5e9907,#6c9905,#7a9903,#899901,#989900,#998b00,#997e00,#997200,#996900,#996000,#995800,#995100)"></i>
<i style="top:164px;left:741px;width:267px;background:linear-gradient(90deg,#00993c,#00993b,#00993a,#009939,#009938,#009937,#009936,#009935,#093,#009932,#009931,#009930,#00992e,#00992d,#00992c,#00992a,#009929,#009927,#009926,#009924,#009923,#009921,#009920,#00991e,#00991c,#05991a,#0d9918,#169916,#1f9915,#299913,#349910,#40990e,#4c990c,#58990a,#669908,#749906,#829903,#929901,#999000,#998200,#997600,#996c00,#996300,#995b00,#995300,#994d00)"></i>
<i style="top:166px;left:741px;width:270px;background:linear-gradient(90deg,#00993e,#00993d,#00993c,#00993b,#00993a,#009939,#009938,#009936,#009935,#009934,#093,#009931,#009930,#00992f,#00992d,#00992c,#00992a,#009929,#009927,#009926,#009924,#009923,#009921,#00991f,#01991d,#08991c,#11991a,#1a9918,#249916,#2f9914,#3a9912,#46990f,#53990d,#60990b,#6e9909,#7d9906,#8d9904,#999502,#998600,#997900,#996e00,#996400,#995c00,#995400,#994e00,#994800)"></i>
<i style="top:168px;left:741px;width:273px;background:linear-gradient(90deg,#009940,#00993f,#00993e,#00993d,#00993c,#00993b,#009939,#009938,#009937,#009936,#009935,#093,#009932,#009931,#00992f,#00992e,#00992d,#00992b,#00992a,#009928,#009927,#009925,#009923,#092,#009920,#07991e,#10991c,#19991a,#239918,#2e9916,#399914,#459912,#519910,#5f990d,#6d990b,#7b9909,#8b9906,#999704,#998702,#997b00,#996f00,#996500,#995d00,#950,#994e00,#994800,#994300)"></i>
<i style="top:170px;left:741px;width:276px;background:linear-gradient(90deg,#009942,#009941,#009940,#00993f,#00993d,#00993c,#00993b,#00993a,#009939,#009938,#009936,#009935,#009934,#093,#009931,#009930,#00992e,#00992d,#00992b,#00992a,#009928,#009926,#009925,#009923,#039921,#0b991f,#14991d,#1e991c,#289919,#339917,#3f9915,#4c9913,#599911,#67990e,#76990c,#86990a,#969907,#998c04,#997e02,#997200,#996800,#995e00,#995600,#994f00,#994900,#994300,#993e00)"></i>
<i style="top:172px;left:742px;width:278px;background:linear-gradient(90deg,#009943,#009942,#009941,#009940,#00993f,#00993e,#00993d,#00993c,#00993b,#00993a,#009938,#009937,#009936,#009935,#093,#009932,#009930,#00992f,#00992e,#00992c,#00992a,#009929,#009927,#009925,#039924,#0b9922,#139920,#1d991e,#28991c,#33991a,#3f9918,#4b9916,#589913,#691,#75990f,#85990c,#95990a,#998d07,#997f04,#997302,#996800,#995f00,#995700,#995000,#994900,#940,#993e00,#993a00)"></i>
<i style="top:174px;left:742px;width:281px;background:linear-gradient(90deg,#009945,#094,#009943,#009942,#009941,#009940,#00993f,#00993e,#00993d,#00993c,#00993a,#009939,#009938,#009936,#009935,#009934,#009932,#009931,#00992f,#00992e,#00992c,#00992a,#009929,#009927,#069925,#0e9923,#189921,#22991f,#2d991d,#39991b,#459919,#539917,#619915,#6f9912,#7f9910,#8f990d,#99920a,#998307,#997604,#996b02,#996100,#995900,#995100,#994a00,#940,#993f00,#993a00,#993600)"></i>
<i style="top:176px;left:743px;width:282px;background:linear-gradient(90deg,#009947,#009946,#009945,#094,#009943,#009942,#009941,#009940,#00993f,#00993d,#00993c,#00993b,#00993a,#009938,#009937,#009936,#009934,#093,#009931,#009930,#00992e,#00992c,#00992b,#019929,#099927,#129925,#1c9923,#279921,#32991f,#3f991d,#4c991b,#5a9918,#689916,#789914,#891,#99990f,#99880b,#997b07,#996f05,#996402,#995b01,#995300,#994c00,#994600,#994000,#993b00,#993700,#993200)"></i>
<i style="top:178px;left:743px;width:285px;background:linear-gradient(90deg,#009949,#009948,#009947,#009946,#009945,#094,#009943,#009942,#009941,#009940,#00993e,#00993d,#00993c,#00993b,#009939,#009938,#009937,#009935,#009934,#009932,#009930,#00992f,#00992d,#00992b,#08992a,#119928,#1b9926,#269924,#319922,#3e9920,#4b991e,#58991b,#679919,#769917,#879914,#989912,#998a0e,#997b0a,#996f07,#996504,#995c02,#995401,#994d00,#994600,#994100,#993c00,#993700,#930,#992f00)"></i>
<i style="top:180px;left:743px;width:288px;background:linear-gradient(90deg,#00994b,#00994a,#009949,#009948,#009947,#009946,#009945,#094,#009943,#009942,#009941,#00993f,#00993e,#00993d,#00993b,#00993a,#009939,#009937,#009936,#009934,#009932,#009931,#00992f,#03992d,#0c992c,#15992a,#209928,#2b9926,#379924,#449921,#52991f,#61991d,#70991b,#809918,#929916,#998f12,#99800e,#99730a,#996807,#995e05,#995603,#994e01,#994700,#994100,#993c00,#993700,#930,#992f00,#992b00)"></i>
<i style="top:182px;left:744px;width:290px;background:linear-gradient(90deg,#00994d,#00994c,#00994b,#00994a,#009949,#009948,#009947,#009946,#009945,#094,#009943,#009942,#009940,#00993f,#00993e,#00993c,#00993b,#00993a,#009938,#009937,#009935,#093,#009932,#039930,#0b992e,#15992c,#20992b,#2b9929,#379927,#449924,#529922,#609920,#70991e,#80991b,#919919,#998f15,#998010,#99730d,#996809,#995e07,#995604,#994e02,#994801,#994200,#993c00,#993700,#930,#992f00,#992b00,#992800)"></i>
<i style="top:184px;left:744px;width:293px;background:linear-gradient(90deg,#00994f,#00994e,#00994e,#00994d,#00994c,#00994b,#009949,#009948,#009947,#009946,#009945,#094,#009943,#009941,#009940,#00993f,#00993d,#00993c,#00993a,#009939,#009937,#009936,#009934,#069932,#0f9930,#1a992e,#25992d,#31992b,#3e9928,#4b9926,#5a9924,#699922,#79991f,#8b991d,#99951a,#998515,#997710,#996b0d,#996109,#995807,#995005,#994903,#994301,#993d00,#993800,#930,#992f00,#992c00,#992800,#992500)"></i>
<i style="top:186px;left:744px;width:296px;background:linear-gradient(90deg,#009952,#009951,#009950,#00994f,#00994e,#00994d,#00994c,#00994b,#00994a,#009949,#009948,#009946,#009945,#094,#009943,#009941,#009940,#00993f,#00993d,#00993c,#00993a,#009939,#009937,#059935,#0e9933,#199932,#249930,#30992e,#3d992c,#4a992a,#599927,#689925,#789923,#8a9920,#99961d,#998518,#997713,#996b0f,#99610c,#995809,#995007,#994904,#994303,#993d01,#993800,#930,#992f00,#992c00,#992800,#992500,#920)"></i>
<i style="top:188px;left:745px;width:297px;background:linear-gradient(90deg,#009954,#009953,#009952,#009951,#009950,#00994f,#00994e,#00994d,#00994c,#00994b,#00994a,#009949,#009947,#009946,#009945,#094,#009942,#009941,#00993f,#00993e,#00993c,#00993b,#009939,#099937,#139936,#1d9934,#299932,#369930,#43992e,#51992c,#61992a,#719927,#829925,#949922,#998c1d,#997d18,#997013,#99650f,#995b0c,#995209,#994b07,#994405,#993f03,#993901,#993500,#993000,#992c00,#992900,#992600,#992300,#992000)"></i>
<i style="top:190px;left:745px;width:300px;background:linear-gradient(90deg,#009956,#095,#009954,#009953,#009952,#009952,#009951,#00994f,#00994e,#00994d,#00994c,#00994b,#00994a,#009949,#009947,#009946,#009945,#009943,#009942,#009940,#00993f,#00993d,#03993c,#0c993a,#179938,#229936,#2f9934,#3c9932,#4a9930,#59992e,#69992c,#7a992a,#8d9927,#999223,#99821d,#997418,#996813,#995d0f,#99550c,#994d09,#994607,#994005,#993a03,#993502,#993100,#992d00,#992900,#992600,#992300,#992000,#991d00)"></i>
<i style="top:192px;left:746px;width:302px;background:linear-gradient(90deg,#009958,#009958,#009957,#009956,#095,#009954,#009953,#009952,#009951,#009950,#00994f,#00994e,#00994d,#00994b,#00994a,#009949,#009948,#009946,#009945,#009943,#009942,#009940,#03993f,#0d993d,#17993b,#23993a,#2f9938,#3c9936,#4a9934,#5a9932,#6a992f,#7b992d,#8d992b,#999226,#998120,#99731a,#996716,#995d12,#99540e,#994c0b,#994609,#993f07,#993a05,#993503,#993102,#992d00,#992900,#992500,#920,#992000,#991d00,#991b00)"></i>
<i style="top:194px;left:746px;width:305px;background:linear-gradient(90deg,#00995b,#00995a,#009959,#009958,#009957,#009957,#009956,#095,#009954,#009953,#009951,#009950,#00994f,#00994e,#00994d,#00994c,#00994a,#009949,#009947,#009946,#009945,#009943,#069941,#109940,#1c993e,#28993c,#35993a,#439938,#529936,#629934,#739932,#859930,#99992d,#998726,#99781f,#996b1a,#996016,#995712,#994e0e,#99470b,#994109,#993b07,#993605,#993103,#992d02,#992900,#992600,#992300,#992000,#991d00,#991a00,#991800)"></i>
<i style="top:196px;left:746px;width:308px;background:linear-gradient(90deg,#00995d,#00995d,#00995c,#00995b,#00995a,#009959,#009958,#009957,#009956,#095,#009954,#009953,#009952,#009951,#009950,#00994f,#00994d,#00994c,#00994b,#009949,#009948,#009946,#069945,#109943,#1b9942,#279940,#34993e,#42993c,#51993a,#619938,#739936,#859934,#989931,#998729,#997823,#996b1d,#996018,#995714,#994e11,#99470e,#99400b,#993b09,#993606,#993105,#992d03,#992902,#992600,#920,#991f00,#991d00,#991a00,#991800,#991600)"></i>
<i style="top:198px;left:747px;width:310px;background:linear-gradient(90deg,#009960,#00995f,#00995e,#00995e,#00995d,#00995c,#00995b,#00995a,#009959,#009958,#009957,#009956,#095,#009954,#009953,#009951,#009950,#00994f,#00994e,#00994c,#00994b,#019949,#0a9948,#159946,#219944,#2e9943,#3c9941,#4b993f,#5b993d,#6c993b,#7e9939,#919936,#998d30,#997c28,#996f22,#99631c,#995918,#995014,#994811,#99420e,#993c0b,#993609,#993107,#992d05,#992903,#992602,#992201,#991f00,#991d00,#991a00,#991800,#991600,#991400)"></i>
<i style="top:200px;left:747px;width:313px;background:linear-gradient(90deg,#009963,#009962,#009961,#009960,#009960,#00995f,#00995e,#00995d,#00995c,#00995b,#00995a,#009959,#009958,#009957,#009956,#095,#009954,#009952,#009951,#009950,#00994e,#01994d,#0a994b,#14994a,#209948,#2d9947,#3b9945,#4a9943,#5a9941,#6b993f,#7e993d,#91993b,#998d34,#997c2c,#996e25,#99631f,#99591b,#995016,#994813,#994110,#993b0d,#99360a,#993108,#992d06,#992905,#992503,#992202,#991f01,#991d00,#991a00,#991800,#991600,#991400,#991200)"></i>
<i style="top:202px;left:748px;width:314px;background:linear-gradient(90deg,#009965,#009965,#009964,#009963,#009962,#009962,#009961,#009960,#00995f,#00995e,#00995d,#00995c,#00995b,#00995a,#009959,#009958,#009957,#095,#009954,#009953,#009951,#049950,#0e994f,#19994d,#26994b,#34994a,#429948,#529946,#639944,#759942,#889940,#99953d,#998333,#99742b,#996725,#995c1f,#99531b,#994b17,#994313,#993d10,#99370d,#99320b,#992e09,#992a07,#992605,#992303,#992002,#991d01,#991a00,#991800,#991600,#991400,#991200,#991000)"></i>
<i style="top:204px;left:748px;width:317px;background:linear-gradient(90deg,#009968,#009968,#009967,#096,#009965,#009965,#009964,#009963,#009962,#009961,#009960,#00995f,#00995e,#00995d,#00995c,#00995b,#00995a,#009959,#009957,#009956,#095,#079953,#129952,#1e9950,#2b994f,#3a994d,#49994c,#5a994a,#6c9948,#7f9946,#949944,#998a3b,#997932,#996b2b,#995f24,#99551f,#994d1a,#994516,#993e13,#993810,#99330d,#992f0b,#992a09,#992607,#992305,#992004,#991d02,#991a01,#991800,#991600,#991400,#991200,#991000,#990e00)"></i>
<i style="top:206px;left:749px;width:319px;background:linear-gradient(90deg,#00996b,#00996a,#00996a,#009969,#009968,#009968,#009967,#096,#009965,#009964,#009963,#009963,#009962,#009961,#009960,#00995f,#00995e,#00995c,#00995b,#00995a,#009959,#079957,#139956,#1f9955,#2c9953,#3b9952,#4b9950,#5b994e,#6d994c,#81994a,#959948,#99883f,#997835,#996a2e,#995e27,#995422,#994c1d,#994419,#993e15,#993812,#99330f,#992e0c,#992a0a,#992608,#992306,#991f05,#991d03,#991a02,#991801,#991500,#991300,#910,#991000,#990e00,#990d00)"></i>
<i style="top:208px;left:749px;width:322px;background:linear-gradient(90deg,#00996e,#00996d,#00996d,#00996c,#00996b,#00996b,#00996a,#009969,#009968,#009968,#009967,#096,#009965,#009964,#009963,#009962,#009961,#009960,#00995f,#00995e,#01995c,#0b995b,#17995a,#249958,#329957,#429955,#529954,#649952,#779950,#8c994e,#999148,#997e3d,#996f34,#99622d,#995827,#994e21,#99461c,#993f18,#993915,#993412,#992f0f,#992a0c,#99260a,#992308,#992007,#991d05,#991a04,#991802,#991501,#991300,#910,#990f00,#990e00,#990c00,#990b00)"></i>
<i style="top:210px;left:750px;width:324px;background:linear-gradient(90deg,#009971,#009971,#009970,#00996f,#00996f,#00996e,#00996d,#00996d,#00996c,#00996b,#00996a,#009969,#009968,#009968,#009967,#096,#009965,#009964,#009963,#009961,#059960,#10995f,#1d995e,#2b995c,#3a995b,#4b9959,#5c9958,#6f9956,#849954,#999852,#998446,#99743b,#963,#995a2c,#995026,#994820,#99411c,#993a18,#993415,#992f12,#992b0f,#99270c,#99230a,#992008,#991d07,#991a05,#991804,#991502,#991301,#910,#990f00,#990e00,#990c00,#990b00,#990900)"></i>
<i style="top:212px;left:750px;width:327px;background:linear-gradient(90deg,#009974,#009974,#009973,#009973,#009972,#009971,#009971,#009970,#00996f,#00996f,#00996e,#00996d,#00996c,#00996c,#00996b,#00996a,#009969,#009968,#009967,#096,#059965,#109964,#1d9962,#2b9961,#3a9960,#4b995e,#5c995d,#70995b,#84995a,#999857,#99834a,#99733f,#996536,#995a2f,#995029,#994723,#99401e,#993a1a,#993417,#992f14,#992a11,#99260e,#99230c,#991f0a,#991c08,#991a06,#991705,#991504,#991302,#991101,#990f00,#990d00,#990c00,#990a00,#990900,#990800)"></i>
<i style="top:214px;left:751px;width:328px;background:linear-gradient(90deg,#009978,#097,#097,#009976,#009975,#009975,#009974,#009974,#009973,#009972,#009972,#009971,#009970,#00996f,#00996f,#00996e,#00996d,#00996c,#00996b,#00996a,#099969,#159968,#229967,#319966,#419964,#539963,#669962,#7a9960,#90995f,#998c55,#997a48,#996b3e,#995e36,#99532e,#994a28,#994223,#993c1e,#99361a,#993017,#992c14,#992711,#99230e,#99200c,#991d0a,#991a08,#991707,#991505,#991304,#991103,#990f01,#990d01,#990c00,#990a00,#990900,#990800,#990600)"></i>
<i style="top:216px;left:751px;width:331px;background:linear-gradient(90deg,#00997b,#00997b,#00997a,#00997a,#009979,#009979,#009978,#097,#097,#009976,#009976,#009975,#009974,#009974,#009973,#009972,#009971,#009971,#009970,#00996f,#08996e,#15996d,#22996c,#31996b,#41996a,#539968,#669967,#7b9966,#919964,#998b5a,#99794d,#996a42,#995d39,#995332,#994a2b,#994226,#993b21,#99351d,#993019,#992b16,#992713,#992310,#99200e,#991c0c,#991a0a,#991708,#991506,#991305,#991104,#990f03,#990d01,#990b01,#990a00,#990900,#990700,#990600,#990500)"></i>
<i style="top:218px;left:752px;width:333px;background:linear-gradient(90deg,#00997f,#00997e,#00997e,#00997d,#00997d,#00997c,#00997c,#00997b,#00997b,#00997a,#00997a,#009979,#009978,#009978,#097,#009976,#009976,#009975,#009974,#029973,#0e9973,#1b9972,#299971,#399970,#4b996f,#5e996d,#72996c,#88996b,#999366,#997f56,#996e4a,#996140,#995538,#994c30,#99432a,#993c25,#993620,#99301c,#992c19,#992715,#992313,#992010,#991d0e,#991a0c,#99170a,#991508,#991206,#991005,#990f04,#990d03,#990b02,#990a01,#990800,#990700,#990600,#990500,#990400)"></i>
<i style="top:220px;left:752px;width:336px;background:linear-gradient(90deg,#009982,#009982,#009981,#009981,#009981,#009980,#009980,#00997f,#00997f,#00997e,#00997e,#00997d,#00997d,#00997c,#00997c,#00997b,#00997a,#00997a,#009979,#069978,#129978,#209977,#309976,#419975,#539974,#679973,#7d9972,#949971,#998763,#997554,#996649,#99593f,#994f37,#994630,#993e2a,#993825,#993220,#992d1c,#992818,#992415,#992013,#991d10,#991a0e,#99170c,#99150a,#991208,#991007,#990e05,#990d04,#990b03,#990a02,#990801,#990700,#990600,#990500,#990400,#990300)"></i>
<i style="top:222px;left:753px;width:338px;background:linear-gradient(90deg,#009986,#009986,#009985,#009985,#009985,#009984,#009984,#009984,#009983,#009983,#009982,#009982,#009982,#009981,#009981,#009980,#009980,#00997f,#00997e,#07997e,#13997d,#21997c,#31997c,#43997b,#55997a,#6a9979,#7f9978,#979977,#998466,#997258,#99644c,#995842,#994d39,#994532,#993d2c,#993627,#993122,#992c1e,#99271a,#992317,#991f14,#991c12,#99190f,#99170d,#99140b,#991209,#991008,#990e06,#990c05,#990b04,#990903,#990802,#990701,#990500,#990400,#990300,#990200,#990200)"></i>
<i style="top:224px;left:753px;width:341px;background:linear-gradient(90deg,#00998a,#00998a,#009989,#009989,#009989,#009989,#098,#098,#098,#009987,#009987,#009987,#009986,#009986,#009986,#009985,#009985,#009984,#009984,#0a9983,#189983,#279982,#389982,#4a9981,#5e9980,#749980,#8b997f,#998e75,#997a64,#996956,#995c4a,#995141,#994738,#993f32,#99382c,#993226,#992d22,#99281e,#99241a,#992017,#991d14,#991912,#99170f,#99140d,#99120b,#991009,#990e08,#990c06,#990a05,#990904,#990803,#990602,#990501,#990400,#990300,#990200,#990100,#990100)"></i>
<i style="top:226px;left:754px;width:342px;background:linear-gradient(90deg,#00998e,#00998e,#00998e,#00998d,#00998d,#00998d,#00998d,#00998d,#00998c,#00998c,#00998c,#00998c,#00998b,#00998b,#00998b,#00998a,#00998a,#00998a,#039989,#0f9989,#1e9989,#2e9988,#409988,#539987,#699987,#809986,#999986,#998271,#997061,#996154,#995549,#994b40,#994238,#993a31,#99342b,#992e26,#992922,#99251e,#99211a,#991d17,#991a14,#991712,#99140f,#99120d,#99100b,#990e0a,#990c08,#990a07,#990905,#990804,#990603,#990502,#990401,#990300,#990200,#990100,#900,#900)"></i>
<i style="top:228px;left:754px;width:345px;background:linear-gradient(90deg,#009992,#009992,#009992,#009992,#009992,#009992,#009991,#009991,#009991,#009991,#009991,#009991,#009991,#009990,#009990,#009990,#009990,#009990,#039990,#0f998f,#1e998f,#2e998f,#40998f,#54998e,#69998e,#81998e,#99988c,#998177,#996f66,#996058,#99544d,#994943,#99413b,#993934,#99332e,#992d29,#992824,#992420,#99201c,#991d19,#991916,#991713,#991411,#99120f,#990f0d,#990e0b,#990c09,#990a08,#990906,#990705,#990604,#990503,#990402,#990301,#990200,#990100,#900,#900,#900)"></i>
<i style="top:230px;left:755px;width:347px;background:linear-gradient(90deg,#009996,#009996,#009996,#009996,#009996,#009996,#009996,#009996,#009996,#009996,#009996,#009996,#009996,#009996,#009996,#009996,#009996,#009996,#079996,#159996,#259996,#379996,#4a9996,#5f9996,#779996,#909996,#998986,#997572,#996462,#995755,#994c4a,#994341,#993b39,#993433,#992e2d,#992928,#992423,#99201f,#991d1c,#991a19,#991716,#991413,#991211,#990f0f,#990d0d,#990c0b,#990a09,#990808,#990706,#990605,#990404,#990303,#990202,#990101,#990100,#900,#900,#900,#900)"></i>
<i style="top:232px;left:755px;width:350px;background:linear-gradient(90deg,#009799,#009799,#009799,#009799,#009799,#009799,#009799,#009799,#009799,#009699,#009699,#009699,#009699,#009699,#009699,#009699,#009699,#009699,#079599,#159599,#259599,#369599,#499599,#5e9599,#749599,#8d9499,#99878c,#997377,#996367,#995659,#994b4e,#994245,#993a3c,#993336,#992d30,#99282a,#992426,#992022,#991c1e,#99191b,#991618,#991315,#991112,#990f10,#990d0e,#990b0c,#99090b,#990809,#990608,#990506,#990405,#990304,#990203,#990102,#990001,#900,#900,#900,#900,#900)"></i>
<i style="top:234px;left:756px;width:352px;background:linear-gradient(90deg,#009399,#009399,#009299,#009299,#009299,#009299,#009299,#009299,#009199,#009199,#009199,#009199,#009199,#009099,#009099,#009099,#009099,#008f99,#0c8f99,#1b8f99,#2b8e99,#3c8e99,#508e99,#658d99,#7c8d99,#958c99,#997a85,#996872,#995a63,#994e56,#99444c,#993c43,#99353b,#992e34,#99292f,#99242a,#992025,#991c21,#99191d,#99161a,#991317,#991115,#990f12,#990d10,#990b0e,#99090c,#99080b,#990609,#990508,#990406,#990305,#990204,#990103,#990002,#990001,#990001,#900,#900,#900,#900)"></i>
<i style="top:236px;left:756px;width:355px;background:linear-gradient(90deg,#008e99,#008e99,#008e99,#008e99,#008d99,#008d99,#008d99,#008d99,#008c99,#008c99,#008c99,#008b99,#008b99,#008b99,#008a99,#008a99,#008a99,#008999,#0c8999,#1a8899,#298899,#3a8799,#4d8799,#618699,#778699,#8f8599,#99788b,#967,#995867,#994c5a,#99434f,#993a46,#99333e,#992d37,#992831,#99232c,#991f27,#991c23,#99181f,#99151c,#991319,#991016,#990e14,#990c12,#990a10,#99090e,#99070c,#99060a,#990509,#990307,#990206,#990105,#990104,#990003,#990002,#990001,#990001,#900,#900,#900,#900)"></i>
<i style="top:238px;left:757px;width:356px;background:linear-gradient(90deg,#008a99,#008a99,#008a99,#008999,#008999,#008999,#089,#089,#008799,#008799,#008799,#008699,#008699,#008599,#008599,#008499,#008499,#048399,#108399,#1e8299,#2e8199,#3f8199,#528099,#667f99,#7c7e99,#947d99,#996d86,#995e74,#995165,#994658,#993d4e,#993545,#992f3d,#992937,#992431,#99202c,#991c27,#991923,#99161f,#99131c,#991119,#990e16,#990c14,#990a12,#990910,#99070e,#99060c,#99040a,#990309,#990208,#990106,#990005,#990004,#990003,#990002,#990001,#990001,#900,#900,#900,#900)"></i>
<i style="top:240px;left:758px;width:358px;background:linear-gradient(90deg,#008699,#008699,#008599,#008599,#008499,#008499,#008499,#008399,#008399,#008299,#008299,#008199,#008099,#008099,#007f99,#007f99,#007e99,#087d99,#157d99,#247c99,#347b99,#457a99,#587999,#6d7899,#837799,#997497,#996381,#995470,#994961,#993f56,#99374c,#993043,#992a3c,#992535,#992130,#991d2b,#991926,#991622,#99131f,#99101c,#990e19,#990c16,#990a14,#990812,#990710,#99060e,#99040c,#99030a,#990209,#990108,#990006,#990005,#990004,#990003,#990002,#990002,#990001,#900,#900,#900,#900)"></i>
<i style="top:242px;left:758px;width:361px;background:linear-gradient(90deg,#008299,#008199,#008199,#008199,#008099,#008099,#007f99,#007f99,#007e99,#007d99,#007d99,#007c99,#007c99,#007b99,#007a99,#007999,#007999,#087899,#157799,#237699,#327599,#437499,#567399,#697299,#7f7199,#967099,#996186,#995374,#994765,#993e59,#99364f,#992f46,#99293f,#992438,#992032,#991c2d,#991829,#991524,#991221,#99101e,#990d1b,#990b18,#990a15,#990813,#990611,#99050f,#99040d,#99030c,#99020a,#990109,#990007,#990006,#990005,#990004,#990003,#990002,#990002,#990001,#900,#900,#900,#900)"></i>
<i style="top:244px;left:759px;width:363px;background:linear-gradient(90deg,#007e99,#007d99,#007d99,#007c99,#007c99,#007b99,#007b99,#007a99,#007999,#007999,#007899,#079,#079,#007699,#007599,#007499,#017399,#0c7299,#1a7199,#287099,#386f99,#496e99,#5c6d99,#706c99,#856a99,#996695,#995781,#994a70,#994062,#993857,#99304d,#992a44,#99253d,#992037,#991c31,#99182c,#991528,#991224,#991020,#990d1d,#990b1a,#990918,#990815,#990613,#990511,#99030f,#99020d,#99010c,#99000a,#990009,#990008,#990006,#990005,#990004,#990003,#990002,#990002,#990001,#900,#900,#900,#900)"></i>
<i style="top:246px;left:759px;width:366px;background:linear-gradient(90deg,#007a99,#007999,#007999,#007899,#007899,#079,#007699,#007699,#007599,#007499,#007399,#007399,#007299,#007199,#007099,#006f99,#046e99,#106d99,#1d6c99,#2c6b99,#3c6999,#4d6899,#606799,#746599,#8a6499,#995d91,#994f7e,#99446e,#993a60,#935,#992c4c,#992644,#99213c,#991d36,#991931,#99162c,#991328,#991024,#990d20,#990b1d,#99091a,#990817,#990615,#990513,#990311,#99020f,#99010d,#99000c,#99000a,#990009,#990008,#990006,#990005,#990004,#990003,#990002,#990002,#990001,#900,#900,#900,#900)"></i>
<i style="top:248px;left:760px;width:368px;background:linear-gradient(90deg,#007699,#007599,#007599,#007499,#007499,#007399,#007299,#007199,#007199,#007099,#006f99,#006e99,#006d99,#006c99,#006b99,#006a99,#056999,#116899,#1e6799,#2c6599,#3c6499,#4d6399,#5f6199,#726099,#875e99,#995994,#994c80,#994170,#993863,#993058,#992a4e,#992446,#99203f,#991b38,#991833,#99142e,#991229,#990f25,#990d22,#990a1f,#99091c,#990719,#990516,#990414,#990312,#990210,#99010e,#99000d,#99000b,#99000a,#990009,#990007,#990006,#990005,#990004,#990003,#990002,#990002,#990001,#900,#900,#900,#900)"></i>
<i style="top:250px;left:761px;width:369px;background:linear-gradient(90deg,#007299,#007299,#007199,#007099,#006f99,#006f99,#006e99,#006d99,#006c99,#006b99,#006a99,#006999,#006899,#006799,#069,#006599,#096499,#156399,#226199,#306099,#405f99,#515d99,#645c99,#775a99,#8c5899,#995190,#99457d,#993b6e,#993361,#992c56,#99264d,#992145,#991c3e,#991838,#991532,#99122d,#990f29,#990d25,#990b22,#99091f,#99071c,#990519,#990417,#990314,#990112,#990110,#99000f,#99000d,#99000b,#99000a,#990009,#990008,#990006,#990005,#990004,#990003,#990003,#990002,#990001,#900,#900,#900,#900)"></i>
<i style="top:252px;left:761px;width:372px;background:linear-gradient(90deg,#006f99,#006e99,#006d99,#006c99,#006c99,#006b99,#006a99,#006999,#006899,#006799,#069,#006599,#006499,#006399,#006299,#016099,#0b5f99,#185e99,#255c99,#345b99,#445999,#555899,#675699,#7b5499,#905299,#994a8c,#993f7a,#99356c,#992e5f,#992755,#99224c,#991d44,#99193d,#991537,#991232,#990f2d,#990d29,#990b25,#990921,#99071e,#99051b,#990419,#990216,#990114,#990012,#990010,#99000f,#99000d,#99000b,#99000a,#990009,#990008,#990006,#990005,#990004,#990004,#990003,#990002,#990001,#990001,#900,#900,#900)"></i>
<i style="top:254px;left:762px;width:374px;background:linear-gradient(90deg,#006b99,#006a99,#006999,#006999,#006899,#006799,#069,#006599,#006499,#006399,#006299,#006199,#006099,#005e99,#005d99,#025c99,#0d5b99,#195999,#265899,#345699,#459,#545399,#665199,#794f99,#8e4d99,#99468f,#993c7d,#99336e,#992c62,#992557,#99204e,#991c46,#99183f,#991439,#991134,#990e2f,#990c2a,#990a27,#990823,#990620,#99041d,#99031a,#990218,#990116,#990013,#990012,#990010,#99000e,#99000d,#99000b,#99000a,#990009,#990007,#990006,#990005,#990004,#990003,#990003,#990002,#990001,#990001,#900,#900,#900)"></i>
<i style="top:256px;left:763px;width:373px;background:linear-gradient(90deg,#006799,#006799,#069,#006599,#006499,#006399,#006299,#006199,#006099,#005f99,#005e99,#005d99,#005b99,#005a99,#005999,#055799,#0f5699,#1b5599,#295399,#375199,#465099,#574e99,#694c99,#7c4a99,#904899,#99418d,#99377c,#992f6e,#992861,#992257,#991d4e,#991946,#99153f,#991239,#990f34,#990c2f,#990a2b,#990827,#990624,#990520,#99031e,#99021b,#990118,#990016,#990014,#990012,#990010,#99000f,#99000d,#99000c,#99000a,#990009,#990008,#990007,#990006,#990005,#990004,#990003,#990002,#990002,#990001,#900,#900,#900)"></i>
<i style="top:258px;left:763px;width:368px;background:linear-gradient(90deg,#006499,#006399,#006299,#006199,#006099,#005f99,#005e99,#005d99,#005c99,#005b99,#005a99,#005999,#005799,#005699,#059,#065399,#115299,#1d5099,#2a4e99,#394d99,#484b99,#584999,#6a4799,#7d4599,#914399,#993c8d,#99327c,#992b6d,#992561,#991f57,#991a4e,#991647,#991340,#99103a,#990d35,#990b30,#99092b,#990728,#990524,#990321,#99021e,#99011b,#990019,#990017,#990014,#990013,#901,#99000f,#99000d,#99000c,#99000b,#990009,#990008,#990007,#990006,#990005,#990004,#990003,#990003,#990002,#990001,#990001,#900)"></i>
<i style="top:260px;left:764px;width:361px;background:linear-gradient(90deg,#006199,#006099,#005f99,#005e99,#005d99,#005c99,#005b99,#005999,#005899,#005799,#005699,#059,#005399,#005299,#005099,#094f99,#144d99,#204c99,#2d4a99,#3b4899,#4a4699,#5b4499,#6c4299,#7f4099,#923e99,#99378c,#992e7b,#99276d,#992161,#991c57,#99184f,#991447,#991140,#990e3a,#990b35,#990930,#99072c,#990528,#990425,#990221,#99011f,#99001c,#990019,#990017,#990015,#990013,#901,#990010,#99000e,#99000d,#99000b,#99000a,#990009,#990008,#990007,#990006,#990005,#990004,#990003,#990002,#990002,#990001)"></i>
<i style="top:262px;left:765px;width:354px;background:linear-gradient(90deg,#005d99,#005c99,#005b99,#005a99,#005999,#005899,#005799,#005699,#005499,#005399,#005299,#005099,#004f99,#004d99,#044c99,#0e4a99,#194999,#264799,#344599,#424399,#524199,#633f99,#753d99,#883b99,#993796,#992e83,#992774,#992167,#991c5c,#991753,#99134b,#991044,#990d3d,#990b38,#990833,#99062e,#99052a,#990327,#990223,#990020,#99001d,#99001b,#990018,#990016,#990014,#990012,#990010,#99000f,#99000d,#99000c,#99000b,#990009,#990008,#990007,#990006,#990005,#990004,#990003,#990003,#990002)"></i>
<i style="top:264px;left:765px;width:348px;background:linear-gradient(90deg,#005a99,#005999,#005899,#005799,#005699,#005499,#005399,#005299,#005199,#004f99,#004e99,#004d99,#004b99,#004a99,#054899,#0f4699,#1b4599,#274399,#354199,#433f99,#533d99,#633b99,#753999,#883799,#993396,#992b84,#992475,#991e68,#99195d,#991554,#99114c,#990e45,#990b3e,#990939,#990734,#99052f,#99032b,#990227,#990124,#990021,#99001e,#99001b,#990019,#990017,#990015,#990013,#901,#99000f,#99000e,#99000c,#99000b,#99000a,#990009,#990008,#990007,#990006,#990005,#990004,#990003)"></i>
<i style="top:266px;left:766px;width:341px;background:linear-gradient(90deg,#005799,#005699,#005499,#005399,#005299,#005199,#005099,#004e99,#004d99,#004c99,#004a99,#004999,#004799,#004699,#074499,#124399,#1d4199,#2a3f99,#373d99,#453b99,#553999,#653799,#773599,#893299,#992e95,#992783,#992074,#991b68,#99165d,#991254,#990f4c,#990c45,#99093f,#990739,#990534,#990430,#99022c,#990128,#990024,#990021,#99001f,#99001c,#99001a,#990017,#990015,#990013,#990012,#990010,#99000e,#99000d,#99000c,#99000a,#990009,#990008,#990007,#990006,#990005,#990004)"></i>
<i style="top:268px;left:767px;width:334px;background:linear-gradient(90deg,#005399,#005299,#005199,#005099,#004f99,#004e99,#004c99,#004b99,#004a99,#004899,#004799,#004599,#049,#014299,#0a4099,#143f99,#203d99,#2c3b99,#393999,#483799,#573599,#673399,#793099,#8b2e99,#992a93,#992382,#991d74,#991868,#99145d,#991054,#990d4c,#990a45,#99083f,#99063a,#990435,#990230,#99012c,#990028,#990025,#902,#99001f,#99001d,#99001a,#990018,#990016,#990014,#990012,#990010,#99000f,#99000d,#99000c,#99000b,#99000a,#990009,#990007,#990006,#990006)"></i>
<i style="top:270px;left:767px;width:327px;background:linear-gradient(90deg,#005099,#004f99,#004e99,#004d99,#004c99,#004a99,#004999,#004899,#004699,#004599,#004399,#004299,#004099,#013f99,#0a3d99,#153b99,#203999,#2c3799,#393599,#483399,#573199,#662f99,#772d99,#8a2a99,#992795,#992084,#991a76,#991669,#99125f,#990e56,#990b4e,#990947,#990640,#99043b,#990336,#990131,#99002d,#99002a,#990026,#990023,#990020,#99001e,#99001b,#990019,#990017,#990015,#990013,#901,#990010,#99000e,#99000d,#99000c,#99000a,#990009,#990008,#990007)"></i>
<i style="top:272px;left:768px;width:320px;background:linear-gradient(90deg,#004d99,#004c99,#004b99,#004a99,#004899,#004799,#004699,#049,#004399,#004299,#004099,#003e99,#003d99,#033b99,#0d3999,#173899,#223699,#2f3499,#3c3299,#4a3099,#592d99,#682b99,#792999,#8b2699,#992394,#991c83,#991775,#991369,#990f5f,#990c56,#99094e,#990747,#990541,#99033b,#990136,#990032,#99002e,#99002a,#990027,#990024,#990021,#99001e,#99001c,#990019,#990017,#990015,#990014,#990012,#990010,#99000f,#99000d,#99000c,#99000b,#99000a,#990009)"></i>
<i style="top:274px;left:769px;width:313px;background:linear-gradient(90deg,#004a99,#004999,#004899,#004799,#004599,#049,#004399,#004199,#004099,#003e99,#003d99,#003b99,#003999,#063899,#0f3699,#193499,#253299,#313099,#3e2e99,#4c2c99,#5b2a99,#6a2799,#7b2599,#8c2399,#991f93,#991983,#991475,#991069,#990d5f,#990a56,#99074e,#990548,#990341,#99023c,#990037,#990032,#99002e,#99002b,#990027,#990024,#990021,#99001f,#99001c,#99001a,#990018,#990016,#990014,#990012,#901,#99000f,#99000e,#99000d,#99000b,#99000a)"></i>
<i style="top:276px;left:770px;width:306px;background:linear-gradient(90deg,#004799,#004699,#004599,#004399,#004299,#004199,#003f99,#003e99,#003c99,#003b99,#003999,#003799,#013699,#0a3499,#143299,#1f3099,#2b2e99,#372c99,#452a99,#532899,#622599,#732399,#842099,#961e99,#99188a,#99147b,#990f6f,#990c64,#99095a,#990652,#99044b,#990244,#99013e,#990039,#990034,#990030,#99002c,#990029,#990026,#990023,#990020,#99001d,#99001b,#990019,#990017,#990015,#990013,#901,#990010,#99000e,#99000d,#99000c)"></i>
<i style="top:278px;left:771px;width:299px;background:linear-gradient(90deg,#049,#004399,#004299,#004099,#003f99,#003e99,#003c99,#003b99,#003999,#003799,#003699,#003499,#033299,#0c3099,#162f99,#212d99,#2d2b99,#3a2899,#472699,#552499,#642299,#741f99,#851d99,#971a99,#991589,#99117b,#990d6e,#990a64,#99075a,#990552,#99034b,#990145,#99003f,#99003a,#990035,#990031,#99002d,#990029,#990026,#990023,#990020,#99001e,#99001c,#990019,#990017,#990015,#990014,#990012,#990010,#99000f,#99000e)"></i>
<i style="top:280px;left:771px;width:293px;background:linear-gradient(90deg,#004299,#004099,#003f99,#003e99,#003c99,#003b99,#003999,#003899,#003699,#003499,#039,#003199,#042f99,#0d2d99,#172b99,#222a99,#2e2799,#3a2599,#482399,#562199,#651f99,#741c99,#851a99,#971799,#99128a,#990e7b,#990b6f,#990864,#99055b,#990353,#99014c,#990045,#990040,#99003a,#990036,#990031,#99002e,#99002a,#990027,#990024,#990021,#99001e,#99001c,#99001a,#990018,#990016,#990014,#990013,#901,#990010)"></i>
<i style="top:282px;left:772px;width:286px;background:linear-gradient(90deg,#003f99,#003d99,#003c99,#003b99,#003999,#003899,#003699,#003599,#039,#003199,#003099,#002e99,#062c99,#102a99,#1a2899,#242699,#302499,#3c2299,#4a2099,#581e99,#661b99,#761999,#871699,#981499,#990f89,#990b7b,#99086f,#990664,#99035b,#990153,#99004c,#990046,#990040,#99003b,#990036,#990032,#99002e,#99002b,#990027,#990024,#902,#99001f,#99001d,#99001b,#990018,#990017,#990015,#990013,#990012)"></i>
<i style="top:284px;left:773px;width:279px;background:linear-gradient(90deg,#003c99,#003b99,#003999,#003899,#003699,#003599,#039,#003299,#003099,#002e99,#002d99,#012b99,#092999,#122799,#1c2599,#272399,#322199,#3e1f99,#4b1d99,#591a99,#681899,#771699,#881399,#919,#990c89,#99097b,#99066f,#990464,#99025b,#990054,#99004c,#990046,#990040,#99003b,#990037,#903,#99002f,#99002b,#990028,#990025,#902,#990020,#99001d,#99001b,#990019,#990017,#990015,#990014)"></i>
<i style="top:286px;left:774px;width:272px;background:linear-gradient(90deg,#003999,#003899,#003699,#003599,#039,#003299,#003099,#002f99,#002d99,#002b99,#002a99,#032899,#0b2699,#142499,#1e2299,#292099,#341e99,#401c99,#4d1a99,#5b1799,#6a1599,#791399,#891099,#990d98,#990a88,#99077a,#99046f,#990265,#99005c,#990054,#99004d,#990047,#990041,#99003c,#990037,#903,#99002f,#99002c,#990029,#990026,#990023,#990020,#99001e,#99001c,#99001a,#990018,#990016)"></i>
<i style="top:288px;left:775px;width:265px;background:linear-gradient(90deg,#003699,#003599,#003499,#003299,#003199,#002f99,#002e99,#002c99,#002a99,#002999,#002799,#042599,#0d2399,#162199,#201f99,#2b1d99,#361b99,#421999,#4f1799,#5d1499,#6b1299,#7a1099,#8a0d99,#990b97,#990787,#99047a,#99026f,#990065,#99005c,#990054,#99004d,#990047,#990042,#99003c,#990038,#990034,#990030,#99002c,#990029,#990026,#990023,#990021,#99001e,#99001c,#99001a,#990018)"></i>
<i style="top:290px;left:776px;width:258px;background:linear-gradient(90deg,#003499,#003299,#003199,#002f99,#002e99,#002c99,#002b99,#002999,#002799,#002599,#012499,#082299,#112099,#1b1e99,#251c99,#311a99,#3c1799,#491599,#561399,#641199,#730e99,#830c99,#940999,#99068e,#990380,#990173,#990069,#99005f,#990057,#990050,#990049,#904,#99003e,#990039,#990035,#990031,#99002e,#99002a,#990027,#990024,#902,#99001f,#99001d,#99001b)"></i>
<i style="top:292px;left:777px;width:250px;background:linear-gradient(90deg,#003199,#003099,#002e99,#002d99,#002b99,#002a99,#002899,#002699,#002599,#002399,#022199,#0a1f99,#131d99,#1d1b99,#271999,#321799,#3e1599,#4a1399,#571099,#650e99,#740c99,#830999,#930799,#99048f,#990280,#990074,#99006a,#990060,#990058,#990051,#99004b,#990045,#99003f,#99003b,#990036,#990032,#99002f,#99002b,#990028,#990025,#990023,#990020,#99001e)"></i>
<i style="top:294px;left:777px;width:244px;background:linear-gradient(90deg,#002f99,#002d99,#002c99,#002a99,#002999,#002799,#002699,#002499,#029,#002099,#031e99,#0b1d99,#141b99,#1d1999,#281799,#331599,#3e1299,#4b1099,#570e99,#650c99,#740999,#830799,#930499,#99028f,#990081,#990075,#99006a,#990061,#990059,#990052,#99004b,#990045,#990040,#99003b,#990037,#903,#99002f,#99002c,#990029,#990026,#990023,#990021)"></i>
<i style="top:296px;left:778px;width:237px;background:linear-gradient(90deg,#002c99,#002b99,#002999,#002899,#002699,#002599,#002399,#002199,#001f99,#001e99,#051c99,#0d1a99,#161899,#1f1699,#2a1499,#351299,#401099,#4c0e99,#590b99,#670999,#750799,#840499,#940299,#99008e,#990081,#990075,#99006b,#990061,#990059,#990052,#99004c,#990046,#990041,#99003c,#990038,#990034,#990030,#99002d,#990029,#990027,#990024)"></i>
<i style="top:298px;left:779px;width:230px;background:linear-gradient(90deg,#002a99,#002899,#002799,#002599,#002499,#029,#002099,#001f99,#001d99,#001b99,#071999,#0f1799,#181599,#211399,#2c1199,#360f99,#420d99,#4e0b99,#5b0999,#680799,#760499,#850299,#940099,#99008e,#990081,#990075,#99006b,#990062,#99005a,#990053,#99004c,#990046,#990041,#99003d,#990038,#990034,#990031,#99002d,#99002a,#990027)"></i>
<i style="top:300px;left:780px;width:223px;background:linear-gradient(90deg,#002799,#002699,#002499,#002399,#002199,#002099,#001e99,#001c99,#001a99,#011999,#091799,#111599,#1a1399,#231199,#2d0f99,#380d99,#430b99,#4f0999,#5c0799,#690499,#770299,#860099,#950099,#99008e,#990080,#990075,#99006b,#990062,#99005a,#990053,#99004d,#990047,#990042,#99003d,#990039,#990035,#990031,#99002e,#99002b)"></i>
<i style="top:302px;left:781px;width:216px;background:linear-gradient(90deg,#002599,#002399,#029,#002099,#001f99,#001d99,#001b99,#001999,#001899,#051699,#0d1499,#151299,#1f1099,#290e99,#330c99,#3e0a99,#4a0899,#570699,#640399,#720199,#800099,#8f0099,#990093,#990085,#990079,#99006e,#990065,#99005d,#905,#99004f,#990049,#990043,#99003e,#99003a,#990036,#990032,#99002f)"></i>
<i style="top:304px;left:782px;width:209px;background:linear-gradient(90deg,#002399,#002199,#001f99,#001e99,#001c99,#001b99,#001999,#001799,#001599,#071399,#0f1299,#171099,#210e99,#2a0c99,#350a99,#400899,#4c0599,#580399,#650199,#730099,#810099,#900099,#990092,#990085,#990079,#99006e,#990065,#99005d,#990056,#99004f,#990049,#904,#99003f,#99003a,#990036,#903)"></i>
<i style="top:306px;left:783px;width:202px;background:linear-gradient(90deg,#002099,#001f99,#001d99,#001c99,#001a99,#001899,#001799,#001599,#021399,#081199,#100f99,#190d99,#220b99,#2c0999,#370799,#420599,#4d0399,#590199,#609,#740099,#820099,#910099,#990092,#990084,#990079,#99006e,#990065,#99005d,#990056,#990050,#99004a,#904,#990040,#99003b,#990037)"></i>
<i style="top:308px;left:784px;width:195px;background:linear-gradient(90deg,#001e99,#001c99,#001b99,#001999,#001899,#001699,#001499,#001399,#031199,#0a0f99,#120d99,#1b0b99,#240999,#2e0799,#380599,#430399,#4f0299,#5b0099,#670099,#750099,#830099,#910099,#990092,#990084,#990079,#99006f,#906,#99005e,#990057,#990050,#99004a,#990045,#990040,#99003c)"></i>
<i style="top:310px;left:786px;width:187px;background:linear-gradient(90deg,#001c99,#001a99,#001899,#001799,#001599,#001499,#001299,#001099,#060e99,#0d0d99,#150b99,#1e0999,#270799,#310599,#3b0399,#460199,#510099,#5d0099,#690099,#709,#840099,#930099,#990091,#990084,#990079,#99006f,#906,#99005e,#990057,#990051,#99004b,#990046,#990041)"></i>
<i style="top:312px;left:787px;width:180px;background:linear-gradient(90deg,#001999,#001899,#001699,#001499,#001399,#019,#000f99,#020e99,#090c99,#110a99,#1a0899,#230699,#2c0499,#370299,#410199,#4d0099,#580099,#650099,#720099,#800099,#8e0099,#990095,#990087,#99007b,#990071,#990068,#990060,#990058,#990052,#99004c,#990046)"></i>
<i style="top:314px;left:788px;width:172px;background:linear-gradient(90deg,#001799,#001699,#001499,#001299,#019,#000f99,#000d99,#040c99,#0b0a99,#130899,#1b0699,#240499,#2d0399,#370199,#420099,#4d0099,#590099,#650099,#720099,#7f0099,#8d0099,#990096,#990089,#99007d,#990073,#990069,#990061,#99005a,#990053,#99004d)"></i>
<i style="top:316px;left:789px;width:165px;background:linear-gradient(90deg,#001599,#001499,#001299,#001099,#000f99,#000d99,#000b99,#050a99,#0c0899,#140699,#1d0499,#260399,#2f0199,#390099,#430099,#4e0099,#5a0099,#609,#720099,#800099,#8d0099,#990096,#990089,#99007d,#990073,#99006a,#990062,#99005b,#990054)"></i>
<i style="top:318px;left:790px;width:158px;background:linear-gradient(90deg,#001399,#001299,#001099,#000e99,#000d99,#000b99,#010999,#070899,#0e0699,#160499,#1e0399,#270199,#300099,#3a0099,#450099,#4f0099,#5b0099,#670099,#730099,#800099,#8e0099,#990096,#990089,#99007e,#990074,#99006b,#990063,#99005b)"></i>
<i style="top:320px;left:791px;width:151px;background:linear-gradient(90deg,#019,#001099,#000e99,#000c99,#000b99,#000999,#020799,#090699,#100499,#180399,#200199,#290099,#320099,#3c0099,#460099,#500099,#5c0099,#670099,#740099,#800099,#8e0099,#990096,#99008a,#99007e,#990074,#99006b,#990063)"></i>
<i style="top:322px;left:792px;width:144px;background:linear-gradient(90deg,#000f99,#000e99,#000c99,#000a99,#000999,#000799,#050599,#0c0499,#140299,#1c0099,#250099,#2e0099,#380099,#420099,#4d0099,#580099,#640099,#700099,#7d0099,#8b0099,#909,#99008c,#990080,#990075,#99006c)"></i>
<i style="top:324px;left:794px;width:136px;background:linear-gradient(90deg,#000d99,#000b99,#000a99,#000899,#000799,#010599,#080399,#0f0299,#160099,#1f0099,#270099,#310099,#3a0099,#409,#4f0099,#5a0099,#650099,#720099,#7e0099,#8b0099,#909,#99008c,#990080,#990076)"></i>
<i style="top:326px;left:795px;width:129px;background:linear-gradient(90deg,#000b99,#000a99,#000899,#000699,#000599,#030399,#090299,#100099,#180099,#200099,#290099,#320099,#3b0099,#450099,#500099,#5b0099,#609,#720099,#7e0099,#8b0099,#909,#99008c,#990081)"></i>
<i style="top:328px;left:796px;width:122px;background:linear-gradient(90deg,#000999,#000899,#000699,#000599,#000399,#040299,#0b0099,#120099,#1a0099,#209,#2a0099,#309,#3d0099,#460099,#510099,#5b0099,#670099,#720099,#7e0099,#8b0099,#980099,#99008d)"></i>
<i style="top:330px;left:797px;width:115px;background:linear-gradient(90deg,#000899,#000699,#000599,#000399,#000299,#060099,#0c0099,#140099,#1b0099,#230099,#2b0099,#340099,#3e0099,#470099,#510099,#5c0099,#670099,#720099,#7e0099,#8b0099,#980099)"></i>
<i style="top:332px;left:799px;width:107px;background:linear-gradient(90deg,#000699,#000499,#000399,#000199,#040099,#0a0099,#109,#190099,#210099,#290099,#320099,#3b0099,#450099,#500099,#5a0099,#650099,#710099,#7d0099,#8a0099)"></i>
<i style="top:334px;left:800px;width:100px;background:linear-gradient(90deg,#000499,#000399,#000199,#009,#050099,#0c0099,#130099,#1a0099,#209,#2a0099,#309,#3d0099,#460099,#500099,#5b0099,#609,#710099,#7d0099)"></i>
<i style="top:336px;left:802px;width:92px;background:linear-gradient(90deg,#000299,#000199,#009,#020099,#070099,#0e0099,#150099,#1c0099,#240099,#2c0099,#350099,#3e0099,#470099,#510099,#5b0099,#609,#710099)"></i>
<i style="top:338px;left:804px;width:83px;background:linear-gradient(90deg,#000199,#009,#009,#050099,#0b0099,#120099,#1a0099,#210099,#2a0099,#320099,#3b0099,#450099,#4f0099,#590099,#640099)"></i>
<i style="top:340px;left:805px;width:76px;background:linear-gradient(90deg,#009,#009,#010099,#060099,#0d0099,#140099,#1b0099,#230099,#2b0099,#309,#3c0099,#450099,#4f0099,#590099)"></i>
<i style="top:342px;left:807px;width:68px;background:linear-gradient(90deg,#009,#009,#030099,#090099,#0f0099,#160099,#1d0099,#240099,#2c0099,#340099,#3d0099,#460099,#4f0099)"></i>
<i style="top:344px;left:810px;width:59px;background:linear-gradient(90deg,#009,#010099,#070099,#0d0099,#140099,#1c0099,#230099,#2b0099,#340099,#3d0099,#460099)"></i>
<i style="top:346px;left:812px;width:51px;background:linear-gradient(90deg,#009,#040099,#090099,#100099,#160099,#1d0099,#250099,#2c0099,#350099,#3d0099)"></i>
<i style="top:348px;left:815px;width:42px;background:linear-gradient(90deg,#020099,#080099,#0e0099,#150099,#1c0099,#240099,#2c0099,#350099)"></i>
<i style="top:350px;left:818px;width:33px;background:linear-gradient(90deg,#050099,#0b0099,#109,#170099,#1e0099,#250099,#2d0099)"></i>
<i style="top:352px;left:821px;width:24px;background:linear-gradient(90deg,#090099,#100099,#160099,#1e0099,#250099)"></i>
<i style="top:354px;left:824px;width:15px;background:linear-gradient(90deg,#0d0099,#120099,#180099,#1e0099)"></i>
</div>
<div class="cie" style="clip-path:polygon(1082.79px 231.47px,899.09px 128.28px,818.04px 334.67px)">
<i style="top:128px;left:896px;width:9px;background:linear-gradient(90deg,#00ff06,#01ff02,#0eff00,#18ff00)"></i>
<i style="top:130px;left:895px;width:13px;background:linear-gradient(90deg,#00ff0b,#02ff08,#0fff04,#1aff00,#24ff00)"></i>
<i style="top:132px;left:894px;width:18px;background:linear-gradient(90deg,#00ff10,#02ff0c,#11ff09,#1dff04,#27ff00,#32ff00)"></i>
<i style="top:134px;left:894px;width:21px;background:linear-gradient(90deg,#00ff13,#06ff10,#13ff0d,#1eff09,#29ff05,#3f0,#3cff00)"></i>
<i style="top:136px;left:893px;width:26px;background:linear-gradient(90deg,#00ff17,#06ff14,#14ff11,#20ff0d,#2bff09,#36ff05,#40ff00,#4aff00)"></i>
<i style="top:138px;left:892px;width:30px;background:linear-gradient(90deg,#00ff1b,#05ff18,#14ff15,#20ff12,#2bff0e,#36ff0a,#40ff06,#4bff00,#5f0)"></i>
<i style="top:140px;left:891px;width:35px;background:linear-gradient(90deg,#00ff1f,#05ff1c,#14ff19,#21ff16,#2dff12,#38ff0e,#43ff0a,#4dff06,#58ff00,#62ff00)"></i>
<i style="top:142px;left:890px;width:40px;background:linear-gradient(90deg,#00ff23,#04ff20,#14ff1d,#21ff1a,#2eff16,#39ff13,#44ff0f,#50ff0a,#5aff06,#65ff00,#70ff00)"></i>
<i style="top:144px;left:890px;width:43px;background:linear-gradient(90deg,#00ff26,#08ff23,#17ff20,#23ff1d,#2fff1a,#3bff17,#46ff13,#51ff0f,#5bff0b,#66ff06,#71ff00,#7bff00)"></i>
<i style="top:146px;left:889px;width:48px;background:linear-gradient(90deg,#00ff2a,#07ff27,#17ff24,#24ff21,#30ff1e,#3cff1b,#47ff17,#53ff13,#5eff0f,#69ff0b,#74ff06,#7fff00,#89ff00)"></i>
<i style="top:148px;left:888px;width:52px;background:linear-gradient(90deg,#00ff2e,#06ff2b,#16ff28,#23ff25,#30ff22,#3cff1f,#47ff1c,#53ff18,#5eff14,#69ff10,#74ff0c,#7fff07,#8aff00,#95ff00)"></i>
<i style="top:150px;left:887px;width:57px;background:linear-gradient(90deg,#00ff32,#04ff2f,#14ff2d,#21ff2a,#2dff27,#39ff24,#44ff21,#4fff1e,#5aff1a,#64ff17,#6fff13,#7aff0f,#84ff0b,#8fff06,#9f0,#a4ff00)"></i>
<i style="top:152px;left:886px;width:61px;background:linear-gradient(90deg,#00ff36,#03ff33,#13ff30,#21ff2e,#2dff2b,#39ff28,#44ff25,#4fff22,#5aff1f,#65ff1c,#70ff18,#7bff14,#85ff10,#90ff0c,#9bff07,#a6ff00,#b1ff00)"></i>
<i style="top:154px;left:886px;width:65px;background:linear-gradient(90deg,#00ff39,#07ff36,#17ff34,#24ff31,#30ff2e,#3cff2c,#47ff29,#53ff26,#5eff23,#69ff1f,#74ff1c,#7eff18,#89ff14,#94ff10,#9fff0c,#aaff06,#b5ff00,#c1ff00)"></i>
<i style="top:156px;left:885px;width:69px;background:linear-gradient(90deg,#00ff3d,#06ff3a,#16ff38,#24ff35,#30ff33,#3cff30,#48ff2d,#53ff2a,#5eff27,#69ff24,#74ff20,#7fff1d,#8aff19,#96ff15,#a1ff11,#acff0d,#b7ff07,#c2ff00,#ceff00)"></i>
<i style="top:158px;left:884px;width:74px;background:linear-gradient(90deg,#00ff41,#06ff3e,#16ff3c,#24ff39,#31ff37,#3dff34,#49ff31,#54ff2e,#60ff2b,#6bff28,#77ff25,#82ff21,#8dff1e,#99ff1a,#a4ff16,#b0ff11,#bbff0c,#c7ff07,#d3ff00,#dfff00)"></i>
<i style="top:160px;left:883px;width:79px;background:linear-gradient(90deg,#00ff45,#05ff42,#16ff40,#24ff3d,#31ff3b,#3eff38,#4aff35,#56ff32,#61ff2f,#6dff2c,#79ff29,#84ff25,#90ff22,#9cff1e,#a8ff1a,#b3ff16,#bfff11,#cbff0c,#d8ff07,#e4ff00,#f0ff00)"></i>
<i style="top:162px;left:883px;width:82px;background:linear-gradient(90deg,#00ff48,#09ff46,#19ff43,#27ff41,#33ff3e,#40ff3c,#4cff39,#58ff36,#64ff33,#6fff30,#7bff2d,#87ff2a,#92ff26,#9eff23,#aaff1f,#b6ff1b,#c2ff17,#ceff12,#daff0d,#e6ff08,#f3ff00,#fffe00)"></i>
<i style="top:164px;left:882px;width:87px;background:linear-gradient(90deg,#00ff4c,#08ff4a,#18ff47,#27ff45,#34ff42,#41ff40,#4dff3d,#59ff3a,#65ff37,#71ff34,#7dff31,#89ff2e,#95ff2b,#a1ff27,#adff23,#b9ff20,#c6ff1b,#d2ff17,#dfff12,#ebff0d,#f8ff07,#fff900,#ffed00)"></i>
<i style="top:166px;left:881px;width:91px;background:linear-gradient(90deg,#00ff50,#07ff4e,#18ff4b,#26ff49,#34ff47,#41ff44,#4dff41,#5aff3f,#66ff3c,#72ff39,#7eff36,#8aff33,#96ff30,#a2ff2c,#afff29,#bbff25,#c7ff21,#d4ff1d,#e1ff18,#eeff13,#fbff0e,#fff608,#ffea00,#ffdf00)"></i>
<i style="top:168px;left:880px;width:96px;background:linear-gradient(90deg,#00ff54,#06ff52,#18ff50,#26ff4d,#34ff4b,#41ff48,#4eff46,#5bff43,#67ff40,#74ff3d,#80ff3a,#8cff37,#99ff34,#a5ff31,#b2ff2d,#beff29,#cbff26,#d8ff22,#e5ff1d,#f3ff19,#fffe14,#fff10d,#ffe507,#ffda00,#ffd000)"></i>
<i style="top:170px;left:879px;width:100px;background:linear-gradient(90deg,#00ff58,#05ff56,#17ff54,#26ff51,#34ff4f,#41ff4d,#4eff4a,#5bff47,#68ff45,#74ff42,#81ff3f,#8dff3c,#9aff39,#a6ff36,#b3ff32,#c0ff2f,#cdff2b,#daff27,#e7ff23,#f5ff1f,#fffc1a,#ffef14,#ffe30e,#ffd808,#ffce00,#ffc500)"></i>
<i style="top:172px;left:879px;width:104px;background:linear-gradient(90deg,#00ff5c,#09ff5a,#1aff58,#29ff55,#37ff53,#45ff50,#52ff4e,#5fff4b,#6bff49,#78ff46,#85ff43,#91ff40,#9eff3d,#abff3a,#b8ff37,#c5ff33,#d2ff2f,#dfff2c,#edff28,#fbff23,#fff61e,#ffe918,#ffde12,#ffd30c,#ffca07,#ffc100,#ffb800)"></i>
<i style="top:174px;left:878px;width:109px;background:linear-gradient(90deg,#00ff60,#08ff5e,#19ff5c,#28ff5a,#36ff58,#43ff55,#50ff53,#5cff51,#69ff4e,#75ff4b,#82ff49,#8eff46,#9bff43,#a8ff40,#b4ff3d,#c1ff3a,#ceff36,#dbff33,#e8ff2f,#f6ff2b,#fffb27,#ffee21,#ffe21b,#ffd816,#ffce10,#ffc40b,#ffbc06,#ffb400,#ffac00)"></i>
<i style="top:176px;left:877px;width:113px;background:linear-gradient(90deg,#00ff64,#06ff62,#18ff60,#27ff5e,#35ff5c,#43ff5a,#50ff58,#5dff55,#6aff53,#76ff50,#83ff4e,#90ff4b,#9cff48,#a9ff45,#b6ff42,#c3ff3f,#d0ff3c,#ddff38,#ebff35,#f9ff31,#fff82c,#ffeb26,#ffe020,#ffd51b,#ffcb15,#ffc210,#ffb90b,#ffb106,#fa0,#ffa300)"></i>
<i style="top:178px;left:876px;width:118px;background:linear-gradient(90deg,#00ff69,#06ff67,#18ff65,#27ff63,#36ff61,#43ff5e,#51ff5c,#5eff5a,#6bff57,#78ff55,#85ff52,#92ff50,#9fff4d,#acff4a,#b9ff47,#c7ff44,#d4ff41,#e2ff3d,#efff3a,#fdff36,#fff330,#ffe62a,#ffdb24,#ffd01e,#ffc719,#ffbe14,#ffb50f,#ffad0b,#ffa605,#ff9f00,#f90)"></i>
<i style="top:180px;left:875px;width:122px;background:linear-gradient(90deg,#00ff6d,#04ff6b,#17ff69,#27ff67,#36ff65,#43ff63,#51ff61,#5eff5f,#6cff5c,#79ff5a,#86ff57,#93ff55,#a0ff52,#adff4f,#bbff4c,#c8ff49,#d6ff46,#e4ff43,#f2ff3f,#fffe3b,#fff035,#ffe42f,#ffd829,#ffce23,#ffc41e,#ffbb19,#ffb314,#ffab10,#ffa40b,#ff9d06,#ff9600,#ff9000)"></i>
<i style="top:182px;left:875px;width:126px;background:linear-gradient(90deg,#00ff71,#09ff6f,#1bff6d,#2aff6b,#39ff69,#47ff67,#55ff65,#62ff63,#6fff60,#7dff5e,#8aff5c,#97ff59,#a5ff56,#b2ff54,#c0ff51,#ceff4e,#dcff4b,#eaff47,#f8ff44,#fff83f,#ffea38,#ffde32,#ffd32c,#ffc927,#ffc021,#ffb71c,#ffaf18,#ffa713,#ffa00f,#ff990a,#ff9305,#ff8d00,#ff8700)"></i>
<i style="top:184px;left:874px;width:130px;background:linear-gradient(90deg,#00ff76,#08ff74,#1aff72,#2aff70,#39ff6e,#47ff6c,#55ff6a,#63ff68,#70ff65,#7eff63,#8bff61,#99ff5e,#a6ff5c,#b4ff59,#c2ff56,#d0ff53,#deff50,#ecff4d,#fbff4a,#fff544,#ffe83d,#ffdc36,#ffd131,#ffc62b,#ffbd26,#ffb421,#ffac1c,#ffa518,#ff9e13,#ff970f,#ff910a,#ff8b06,#ff8500,#ff8000)"></i>
<i style="top:186px;left:873px;width:135px;background:linear-gradient(90deg,#00ff7a,#07ff79,#1aff77,#2aff75,#39ff73,#48ff71,#56ff6f,#64ff6d,#72ff6a,#7fff68,#8dff66,#9bff63,#a9ff61,#b7ff5e,#c5ff5b,#d3ff58,#e2ff56,#f1ff52,#fffe4f,#fff048,#ffe341,#ffd73a,#ffcc34,#ffc22f,#ffb929,#ffb024,#ffa81f,#ffa11b,#ff9a17,#ff9312,#ff8d0e,#ff870a,#ff8205,#ff7c00,#f70)"></i>
<i style="top:188px;left:872px;width:139px;background:linear-gradient(90deg,#00ff7f,#06ff7d,#19ff7c,#2aff7a,#39ff78,#48ff76,#56ff74,#64ff72,#72ff70,#80ff6d,#8eff6b,#9cff69,#af6,#b9ff64,#c7ff61,#d5ff5e,#e4ff5b,#f3ff58,#fffc54,#ffed4c,#ffe145,#ffd53f,#ffca39,#ffc033,#ffb72e,#ffae28,#ffa624,#ff9f1f,#ff981b,#ff9116,#ff8b12,#ff850e,#ff800a,#ff7a06,#ff7500,#ff7100)"></i>
<i style="top:190px;left:872px;width:143px;background:linear-gradient(90deg,#00ff83,#0aff82,#1dff80,#2dff7e,#3dff7c,#4bff7a,#5aff78,#68ff76,#76ff74,#85ff72,#93ff70,#a1ff6d,#afff6b,#beff69,#cdff66,#dbff63,#eaff60,#faff5e,#fff557,#ffe74f,#ffdb48,#ffcf42,#ffc53b,#ffbb36,#ffb230,#ffaa2b,#ffa227,#ff9b22,#ff941e,#ff8d19,#ff8715,#ff8211,#ff7c0d,#ff7709,#ff7205,#ff6e00,#ff6900)"></i>
<i style="top:192px;left:871px;width:148px;background:linear-gradient(90deg,#0f8,#09ff87,#1dff85,#2dff83,#3dff81,#4cff80,#5bff7e,#69ff7c,#78ff7a,#86ff77,#95ff75,#a3ff73,#b2ff71,#c1ff6e,#d0ff6c,#dfff69,#efff66,#feff63,#fff15b,#ffe353,#ffd74c,#ffcb45,#ffc13f,#ffb739,#ffae34,#ffa62f,#ff9e2a,#ff9725,#ff9021,#ff8a1c,#ff8418,#ff7e14,#ff7911,#ff740d,#ff6f09,#ff6a05,#f60,#ff6200)"></i>
<i style="top:194px;left:870px;width:152px;background:linear-gradient(90deg,#00ff8d,#08ff8c,#1cff8a,#2dff88,#3dff87,#4cff85,#5bff83,#6aff81,#79ff7f,#87ff7d,#96ff7b,#a5ff79,#b4ff76,#c3ff74,#d2ff72,#e1ff6f,#f1ff6c,#fffd69,#ffee60,#ffe058,#ffd450,#ffc949,#ffbe43,#ffb53d,#ffac38,#ffa432,#ff9c2e,#ff9529,#ff8e25,#ff8820,#ff821c,#ff7c18,#ff7714,#ff7211,#ff6d0d,#ff6909,#ff6405,#ff6000,#ff5c00)"></i>
<i style="top:196px;left:869px;width:157px;background:linear-gradient(90deg,#00ff92,#06ff91,#1bff8f,#2cff8e,#3cff8c,#4bff8a,#5aff89,#69ff87,#77ff85,#86ff83,#94ff81,#a3ff7f,#b2ff7d,#c1ff7b,#d0ff78,#dfff76,#efff73,#ffff71,#fff068,#ffe25f,#ffd658,#ffca50,#ffc04a,#ffb644,#ffad3e,#ffa539,#ff9d34,#ff962f,#ff8f2b,#ff8926,#ff8322,#ff7d1e,#ff781a,#ff7317,#ff6e13,#ff6a0f,#ff650c,#ff6108,#ff5d04,#ff5900,#f50)"></i>
<i style="top:198px;left:868px;width:161px;background:linear-gradient(90deg,#00ff98,#05ff96,#1aff95,#2bff93,#3cff91,#4bff90,#5aff8e,#69ff8c,#78ff8b,#87ff89,#96ff87,#a5ff85,#b4ff83,#c3ff81,#d2ff7e,#e2ff7c,#f2ff7a,#fffc76,#ffed6c,#ffdf64,#ffd35c,#ffc855,#ffbd4e,#ffb448,#ffab42,#ffa33d,#ff9b38,#ff9433,#ff8d2e,#ff872a,#ff8126,#ff7b22,#ff761e,#ff711a,#ff6c17,#ff6713,#ff6310,#ff5f0c,#ff5b09,#ff5705,#ff5400,#ff5000)"></i>
<i style="top:200px;left:868px;width:165px;background:linear-gradient(90deg,#00ff9c,#0aff9b,#1eff9a,#2fff98,#3fff97,#4fff95,#5eff93,#6eff92,#7dff90,#8cff8e,#9bff8c,#aaff8a,#b9ff88,#c9ff86,#d9ff84,#e9ff82,#f9ff80,#fff578,#ffe66f,#ffd966,#ffcd5e,#ffc257,#ffb851,#ffaf4a,#ffa645,#ff9e3f,#ff973a,#ff9035,#ff8931,#ff832c,#ff7d28,#ff7824,#ff7220,#ff6d1d,#ff6919,#ff6416,#ff6012,#ff5c0f,#ff580b,#ff5408,#ff5104,#ff4d00,#ff4a00)"></i>
<i style="top:202px;left:867px;width:169px;background:linear-gradient(90deg,#00ffa2,#09ffa0,#1dff9f,#2fff9e,#3fff9c,#4fff9b,#5fff99,#6eff98,#7eff96,#8dff94,#9cff92,#acff91,#bbff8f,#cbff8d,#dbff8b,#ebff88,#fcff86,#fff27d,#ffe474,#ffd66b,#ffca63,#ffbf5b,#ffb555,#ffac4e,#ffa448,#ff9c43,#ff943e,#ff8d39,#ff8734,#ff8130,#ff7b2c,#ff7528,#ff7024,#ff6b20,#ff671c,#ff6219,#ff5e16,#ff5a12,#ff560f,#ff520c,#ff4f08,#ff4b05,#ff4800,#ff4500)"></i>
<i style="top:204px;left:866px;width:174px;background:linear-gradient(90deg,#00ffa7,#08ffa6,#1dffa5,#2fffa3,#40ffa2,#50ffa0,#60ff9f,#70ff9d,#7fff9c,#8fff9a,#9fff98,#aeff97,#beff95,#ceff93,#dfff91,#f0ff8f,#fffd8c,#ffed81,#ffdf77,#ffd26e,#ffc666,#ffbb5f,#ffb258,#ffa851,#ffa04b,#ff9846,#ff9140,#ff8a3c,#ff8337,#ff7d32,#ff782e,#ff722a,#ff6d26,#ff6823,#ff641f,#ff5f1c,#ff5b18,#ff5715,#ff5312,#ff500e,#ff4c0b,#ff4908,#ff4504,#ff4200,#ff3f00)"></i>
<i style="top:206px;left:865px;width:178px;background:linear-gradient(90deg,#00ffad,#07ffac,#1cffaa,#2fffa9,#40ffa8,#50ffa6,#60ffa5,#70ffa4,#80ffa2,#90ffa1,#a0ff9f,#b0ff9d,#c0ff9b,#d1ff9a,#e1ff98,#f2ff96,#fffa91,#ffea86,#ffdc7c,#ffcf73,#ffc36a,#ffb963,#ffaf5c,#ffa655,#ff9d4f,#ff9649,#ff8e44,#ff873f,#ff813a,#ff7b36,#ff7532,#ff702d,#ff6b2a,#ff6626,#ff6222,#ff5d1f,#ff591b,#ff5518,#ff5115,#ff4e12,#ff4a0e,#ff470b,#ff4408,#ff4005,#ff3d00,#ff3a00)"></i>
<i style="top:208px;left:865px;width:182px;background:linear-gradient(90deg,#00ffb2,#0cffb1,#21ffb0,#33ffaf,#44ffae,#55ffac,#65ffab,#75ffaa,#85ffa8,#95ffa7,#a6ffa5,#b6ffa3,#c7ffa2,#d7ffa0,#e8ff9e,#faff9c,#fff393,#ffe488,#ffd67e,#ffc975,#ffbe6d,#ffb365,#ffaa5e,#ffa157,#ff9951,#ff914c,#ff8a46,#ff8341,#ff7d3d,#ff7738,#ff7234,#ff6c30,#ff672c,#ff6328,#ff5e24,#ff5a21,#ff561e,#ff521a,#ff4e17,#ff4b14,#ff4711,#ff440e,#ff410b,#ff3e08,#ff3b04,#ff3800,#ff3500)"></i>
<i style="top:210px;left:864px;width:187px;background:linear-gradient(90deg,#00ffb8,#0bffb7,#20ffb6,#33ffb5,#44ffb4,#55ffb2,#66ffb1,#76ffb0,#87ffaf,#97ffad,#a8ffac,#b9ffaa,#caffa9,#dbffa7,#edffa5,#feffa4,#ffee97,#ffdf8c,#ffd282,#ffc578,#ffba70,#ffb068,#ffa661,#ff9d5a,#ff9554,#ff8e4e,#ff8749,#ff8044,#ff7a3f,#ff743b,#ff6f36,#ff6932,#ff642e,#ff602a,#ff5b27,#ff5723,#ff5320,#ff4f1d,#ff4c19,#ff4816,#ff4513,#ff4110,#ff3e0d,#ff3b0a,#ff3807,#ff3504,#f30,#ff3000)"></i>
<i style="top:212px;left:863px;width:191px;background:linear-gradient(90deg,#00ffbe,#09ffbd,#20ffbc,#32ffbb,#44ffba,#56ffb9,#67ffb8,#77ffb7,#88ffb5,#99ffb4,#aaffb3,#bbffb1,#ccffb0,#deffae,#f0ffad,#fffca9,#ffeb9c,#ffdc91,#ffcf86,#ffc27d,#ffb774,#ffad6c,#ffa365,#ff9b5e,#ff9358,#ff8b52,#ff844d,#ff7e47,#ff7842,#ff723e,#ff6c39,#ff6735,#ff6231,#ff5e2d,#ff592a,#ff5526,#ff5123,#ff4d20,#ff4a1c,#ff4619,#ff4316,#ff3f13,#ff3c10,#ff390d,#ff360a,#ff3307,#ff3104,#ff2e00,#ff2b00)"></i>
<i style="top:214px;left:862px;width:196px;background:linear-gradient(90deg,#00ffc4,#08ffc3,#1fffc2,#32ffc2,#45ffc1,#56ffbf,#68ffbe,#79ffbd,#8affbc,#9bffbb,#acffba,#beffb8,#d0ffb7,#e2ffb6,#f4ffb4,#fff8ae,#ffe7a0,#ffd895,#ffca8a,#ffbe80,#ffb378,#ffa96f,#ffa068,#ff9761,#ff8f5b,#f85,#ff814f,#ff7a4a,#ff7445,#ff6f40,#ff693c,#ff6438,#ff5f34,#ff5b30,#ff562c,#ff5229,#ff4e25,#ff4a22,#ff471f,#ff431c,#ff4019,#ff3d16,#ff3a13,#ff3710,#ff340d,#ff310a,#ff2e07,#ff2c04,#ff2900,#ff2600)"></i>
<i style="top:216px;left:861px;width:200px;background:linear-gradient(90deg,#00ffcb,#07ffca,#1effc9,#32ffc8,#45ffc7,#57ffc6,#68ffc5,#7affc4,#8bffc3,#9dffc2,#aeffc1,#c0ffc0,#d2ffbf,#e4ffbd,#f7ffbc,#fff4b3,#ffe4a5,#ffd599,#ffc78f,#ffbb85,#ffb07c,#ffa674,#ff9d6c,#ff9465,#ff8d5e,#ff8558,#ff7e53,#ff784d,#ff7248,#ff6c44,#ff673f,#ff623b,#ff5d37,#ff5933,#ff542f,#ff502c,#ff4c28,#ff4825,#ff4522,#ff411e,#ff3e1b,#ff3b18,#ff3816,#ff3513,#ff3210,#ff2f0d,#ff2c0a,#ff2a07,#ff2704,#ff2500,#f20)"></i>
<i style="top:218px;left:861px;width:204px;background:linear-gradient(90deg,#00ffd1,#0cffd0,#23ffcf,#37ffcf,#49ffce,#5bffcd,#6dffcc,#7fffcb,#91ffca,#a3ffc9,#b5ffc8,#c7ffc7,#d9ffc6,#ecffc5,#ffffc4,#ffedb5,#ffdda7,#ffce9b,#ffc190,#ffb587,#ffab7e,#ffa176,#ff986e,#ff9067,#ff8860,#ff815a,#ff7a55,#ff744f,#ff6e4a,#ff6946,#ff6341,#ff5e3d,#ff5a39,#ff5535,#ff5131,#ff4d2e,#ff492a,#ff4527,#ff4224,#ff3e20,#ff3b1d,#ff381b,#ff3518,#ff3215,#ff2f12,#ff2c0f,#ff2a0c,#ff270a,#ff2507,#ff2204,#ff2000,#ff1d00)"></i>
<i style="top:220px;left:860px;width:208px;background:linear-gradient(90deg,#00ffd7,#0bffd7,#22ffd6,#36ffd6,#49ffd5,#5cffd4,#6effd3,#80ffd3,#92ffd2,#a4ffd1,#b7ffd0,#c9ffcf,#dcffce,#efffcd,#fffbc9,#ffe9ba,#ffd9ac,#ffcba0,#ffbe95,#ffb38b,#ffa882,#ff9e79,#ff9572,#ff8d6b,#ff8564,#ff7e5e,#ff7858,#ff7253,#ff6c4e,#ff6649,#ff6144,#ff5c40,#ff573c,#ff5338,#ff4f34,#ff4b30,#ff472d,#ff432a,#ff4026,#ff3c23,#ff3920,#ff361d,#ff331a,#ff3018,#ff2d15,#ff2a12,#ff280f,#ff250d,#ff230a,#ff2007,#ff1e04,#ff1b00,#ff1900)"></i>
<i style="top:222px;left:859px;width:213px;background:linear-gradient(90deg,#00ffde,#09ffde,#21ffdd,#35ffdd,#48ffdc,#5bffdc,#6dffdb,#7fffda,#91ffda,#a4ffd9,#b6ffd8,#c9ffd8,#dcffd7,#efffd6,#fffcd2,#ffe9c2,#ffd9b4,#ffcba8,#ffbe9c,#ffb292,#ffa888,#ff9e80,#ff9578,#ff8d71,#ff856a,#ff7e63,#ff785d,#ff7158,#ff6b53,#ff664e,#ff6149,#ff5c45,#ff5740,#ff533c,#ff4f39,#ff4b35,#ff4731,#ff432e,#ff3f2b,#ff3c28,#ff3925,#ff3622,#ff331f,#ff301c,#ff2d19,#ff2a16,#ff2714,#ff2511,#ff220f,#ff200c,#ff1d09,#ff1b07,#ff1904,#ff1600,#ff1400)"></i>
<i style="top:224px;left:858px;width:218px;background:linear-gradient(90deg,#00ffe5,#08ffe5,#21ffe4,#35ffe4,#49ffe4,#5cffe3,#6effe3,#81ffe2,#94ffe2,#a6ffe1,#b9ffe0,#ccffe0,#e0ffdf,#f3ffdf,#fff7d7,#ffe5c7,#ffd5b8,#ffc7ab,#ffbaa0,#ffae95,#ffa48c,#ff9a83,#ff917b,#ff8973,#ff826d,#ff7b66,#ff7460,#ff6e5a,#ff6855,#ff6350,#ff5e4b,#ff5947,#ff5443,#ff503f,#ff4c3b,#ff4837,#ff4434,#ff4030,#ff3d2d,#ff392a,#ff3627,#ff3324,#ff3021,#ff2d1e,#ff2a1b,#ff2818,#ff2516,#ff2213,#ff2011,#ff1d0e,#ff1b0b,#ff1809,#ff1606,#ff1403,#f10,#ff0f00)"></i>
<i style="top:226px;left:857px;width:222px;background:linear-gradient(90deg,#00ffec,#06ffec,#20ffec,#35ffec,#49ffeb,#5cffeb,#6fffeb,#82ffea,#95ffea,#a8ffe9,#bbffe9,#cfffe9,#e3ffe8,#f7ffe8,#fff3dc,#ffe1cc,#ffd1bd,#ffc3b0,#ffb7a4,#ffab99,#ffa190,#ff9787,#ff8f7f,#ff8777,#ff7f70,#ff786a,#ff7263,#ff6b5e,#ff6658,#ff6053,#ff5b4e,#ff564a,#ff5246,#ff4e41,#ff493e,#ff453a,#ff4236,#ff3e33,#ff3b2f,#ff372c,#ff3429,#ff3126,#ff2e23,#ff2b20,#ff281e,#ff251b,#ff2318,#ff2016,#ff1e13,#ff1b11,#ff190e,#ff160c,#ff1409,#ff1206,#ff0f04,#ff0d00,#ff0b00)"></i>
<i style="top:228px;left:857px;width:226px;background:linear-gradient(90deg,#00fff4,#0dfff4,#25fff3,#3afff3,#4efff3,#62fff3,#75fff3,#88fff2,#9bfff2,#affff2,#c3fff2,#d7fff2,#ebfff1,#fffef0,#ffebde,#ffdacd,#ffcabf,#ffbdb2,#ffb1a6,#ffa59b,#ff9b91,#ff9289,#ff8a80,#ff8279,#ff7a72,#ff746b,#ff6d65,#ff6760,#ff625a,#ff5d55,#ff5850,#ff534c,#ff4e47,#ff4a43,#ff463f,#ff423c,#ff3e38,#ff3b35,#ff3831,#ff342e,#ff312b,#ff2e28,#ff2b25,#ff2822,#ff251f,#ff231d,#ff201a,#ff1d18,#ff1b15,#ff1813,#ff1610,#ff140e,#ff110b,#ff0f09,#ff0c06,#ff0a03,#ff0800,#ff0500)"></i>
<i style="top:230px;left:856px;width:228px;background:linear-gradient(90deg,#00fffb,#0bfffb,#25fffb,#3afffb,#4ffffb,#63fffb,#77fffb,#8bfffb,#9ffffb,#b3fffb,#c7fffb,#dcfffb,#f1fffb,#fff8f4,#ffe5e1,#ffd4d0,#ffc5c2,#ffb8b4,#ffaca8,#ffa19e,#ff9794,#ff8e8b,#ff8583,#ff7d7b,#ff7674,#ff706d,#ff6967,#ff6361,#ff5e5c,#ff5957,#ff5452,#ff4f4d,#ff4b49,#ff4745,#ff4341,#ff3f3d,#ff3b3a,#ff3836,#ff3433,#ff312f,#ff2e2c,#ff2b29,#ff2826,#ff2524,#ff2221,#ff1f1e,#ff1d1c,#ff1a19,#ff1816,#ff1514,#ff1312,#ff100f,#ff0e0d,#ff0b0a,#ff0908,#ff0605,#ff0402,#f00)"></i>
<i style="top:232px;left:855px;width:229px;background:linear-gradient(90deg,#00fbff,#09fbff,#23fbff,#38fbff,#4dfbff,#61faff,#74faff,#88faff,#9bfaff,#affaff,#c3faff,#d7faff,#ebf9ff,#fff8fd,#ffe4ea,#ffd3d9,#ffc4c9,#ffb7bc,#ffabb0,#ffa0a4,#ff969a,#ff8d91,#ff8589,#ff7d81,#ff767a,#ff6f73,#ff696c,#ff6367,#ff5d61,#ff585c,#ff5357,#ff4f52,#ff4a4e,#ff4649,#ff4245,#ff3e42,#ff3b3e,#ff373a,#ff3437,#ff3034,#ff2d30,#ff2a2d,#ff272a,#ff2428,#ff2225,#ff1f22,#ff1c20,#ff1a1d,#ff171a,#ff1518,#ff1216,#ff1013,#ff0d11,#ff0b0e,#ff080c,#ff060a,#ff0307,#ff0005,#ff0002)"></i>
<i style="top:234px;left:854px;width:225px;background:linear-gradient(90deg,#00f3ff,#08f3ff,#21f3ff,#36f3ff,#4af2ff,#5ef2ff,#71f2ff,#84f2ff,#97f1ff,#abf1ff,#bef1ff,#d2f0ff,#e6f0ff,#faf0ff,#ffe1f0,#ffd0de,#ffc1ce,#ffb4c1,#ffa8b4,#ff9da9,#ff939f,#ff8a95,#ff828c,#ff7a85,#ff737d,#ff6c76,#ff6670,#ff606a,#ff5b64,#ff565f,#ff515a,#ff4c55,#ff4850,#ff444c,#ff4048,#ff3c44,#ff3840,#ff353d,#ff3139,#ff2e36,#ff2b33,#ff2830,#ff252d,#ff222a,#ff1f27,#ff1d25,#ff1a22,#ff171f,#ff151d,#ff121a,#ff1018,#ff0d16,#ff0b13,#ff0811,#ff060f,#ff030c,#ff000a,#ff0007)"></i>
<i style="top:236px;left:854px;width:220px;background:linear-gradient(90deg,#00ecff,#0eecff,#25ebff,#3aebff,#4eeaff,#61eaff,#75eaff,#88e9ff,#9be9ff,#aee8ff,#c1e8ff,#d5e7ff,#e9e7ff,#fde6ff,#ffd5ed,#ffc5dc,#ffb7cd,#ffaabf,#ff9fb3,#ff95a8,#ff8b9e,#ff8294,#ff7a8c,#ff7384,#ff6c7d,#ff6676,#ff606f,#ff5a69,#ff5564,#ff505f,#ff4b5a,#ff4755,#ff4350,#ff3e4c,#ff3b48,#ff3744,#ff3340,#ff303d,#ff2d39,#ff2936,#ff2633,#ff2330,#ff202d,#ff1e2a,#ff1b27,#ff1825,#ff1622,#ff131f,#ff101d,#ff0e1a,#ff0b18,#ff0816,#ff0613,#ff0311,#ff000f,#ff000c)"></i>
<i style="top:238px;left:853px;width:216px;background:linear-gradient(90deg,#00e5ff,#0ce4ff,#24e4ff,#38e3ff,#4ce3ff,#5fe2ff,#72e2ff,#84e1ff,#97e1ff,#aae0ff,#bddfff,#d0dfff,#e4deff,#f8ddff,#ffd2f3,#ffc2e1,#ffb4d1,#ffa7c4,#ff9cb7,#ff91ac,#ff88a1,#ff7f98,#ff788f,#ff7087,#ff6980,#ff6379,#ff5d73,#ff586c,#ff5267,#ff4d61,#ff495c,#ff4458,#ff4053,#ff3c4f,#ff384b,#ff3547,#ff3143,#ff2e3f,#ff2a3c,#ff2739,#ff2435,#ff2132,#ff1e2f,#ff1b2c,#ff192a,#ff1627,#ff1324,#f12,#ff0e1f,#ff0b1d,#ff091a,#ff0618,#ff0316,#ff0013,#f01)"></i>
<i style="top:240px;left:852px;width:211px;background:linear-gradient(90deg,#00deff,#0addff,#2df,#36dcff,#49dbff,#5cdbff,#6edaff,#81d9ff,#93d9ff,#a5d8ff,#b8d7ff,#cbd6ff,#ded5ff,#f1d4ff,#ffcff9,#ffbfe7,#ffb1d7,#ffa4c9,#ff99bc,#ff8fb1,#ff86a6,#ff7d9d,#ff7594,#ff6e8c,#ff6784,#ff617d,#ff5b77,#ff5670,#ff506b,#ff4b65,#ff4760,#ff425b,#ff3e56,#ff3a52,#ff364e,#ff334a,#ff2f46,#ff2c42,#ff293f,#ff253c,#ff2238,#ff1f35,#ff1c32,#ff1a2f,#ff172d,#ff142a,#ff1127,#ff0f25,#ff0c22,#ff0920,#ff061d,#ff031b,#ff0018,#ff0016)"></i>
<i style="top:242px;left:851px;width:207px;background:linear-gradient(90deg,#00d7ff,#08d7ff,#20d6ff,#34d5ff,#47d4ff,#5ad4ff,#6cd3ff,#7ed2ff,#90d1ff,#a2d0ff,#b4cfff,#c6ceff,#d9cdff,#ecccff,#ffcbff,#ffbbed,#ffaddc,#ffa1ce,#ff96c1,#ff8cb5,#ff83aa,#ff7aa1,#ff7298,#ff6b8f,#ff6488,#ff5e80,#ff587a,#ff5373,#ff4e6e,#ff4968,#ff4463,#ff405e,#ff3c59,#ff3855,#ff3451,#ff304d,#ff2d49,#ff2945,#ff2641,#ff233e,#ff203b,#ff1d38,#ff1a35,#ff1732,#ff142f,#ff122c,#ff0f29,#ff0c27,#ff0924,#ff0622,#ff031f,#ff001d,#ff001b)"></i>
<i style="top:244px;left:850px;width:203px;background:linear-gradient(90deg,#00d1ff,#07d0ff,#1fcfff,#33ceff,#45cdff,#57ccff,#69ccff,#7bcbff,#8ccaff,#9ec9ff,#b0c8ff,#c2c6ff,#d4c5ff,#e7c4ff,#fac3ff,#ffb7f2,#ffaae1,#ff9dd3,#ff92c5,#ff88b9,#ff7fae,#ff77a4,#ff6f9b,#ff6893,#ff618b,#ff5b84,#ff567d,#ff5077,#ff4b71,#ff466b,#ff4266,#ff3d61,#ff395c,#ff3557,#ff3153,#ff2e4f,#ff2a4b,#ff2747,#ff2444,#ff2140,#ff1d3d,#ff1a3a,#ff1837,#ff1534,#ff1231,#ff0f2e,#ff0c2c,#ff0929,#ff0626,#ff0324,#f02,#ff001f)"></i>
<i style="top:246px;left:850px;width:198px;background:linear-gradient(90deg,#00caff,#0cc9ff,#22c8ff,#35c7ff,#48c6ff,#59c5ff,#6bc4ff,#7cc3ff,#8dc2ff,#9ec1ff,#b0c0ff,#c1bfff,#d3bdff,#e5bcff,#f8bbff,#ffb1f4,#ffa4e3,#ff98d5,#ff8dc8,#ff84bc,#ff7bb1,#ff73a7,#ff6b9e,#ff6495,#ff5e8d,#ff5886,#ff527f,#ff4d79,#ff4873,#ff436d,#ff3e68,#ff3a63,#ff365e,#ff325a,#ff2f55,#ff2b51,#ff284d,#ff244a,#ff2146,#ff1e43,#ff1b3f,#ff183c,#ff1539,#ff1236,#ff0f33,#ff0c30,#ff092e,#ff062b,#ff0329,#ff0026,#ff0024)"></i>
<i style="top:248px;left:849px;width:194px;background:linear-gradient(90deg,#00c4ff,#0ac3ff,#20c2ff,#34c1ff,#46c0ff,#57bfff,#68beff,#79bcff,#8abbff,#9bbaff,#acb9ff,#bdb7ff,#cfb6ff,#e1b4ff,#f3b3ff,#ffadf9,#ffa0e8,#ff94d9,#ff8acc,#ff80c0,#ff77b5,#ff6fab,#ff68a1,#ff6199,#ff5b91,#ff5589,#ff4f83,#ff4a7c,#ff4576,#ff4070,#ff3c6b,#ff3866,#ff3461,#ff305c,#ff2c58,#ff2854,#ff2550,#ff224c,#ff1e49,#ff1b45,#ff1842,#ff153e,#ff123b,#ff0f38,#ff0c35,#ff0a33,#ff0630,#ff032d,#ff002b,#ff0028)"></i>
<i style="top:250px;left:848px;width:190px;background:linear-gradient(90deg,#00beff,#09bdff,#1fbcff,#32bbff,#44b9ff,#55b8ff,#66b7ff,#76b6ff,#87b4ff,#98b3ff,#a8b2ff,#b9b0ff,#cbafff,#dcadff,#eeacff,#ffa9fe,#ff9ced,#ff91de,#ff86d0,#ff7dc4,#ff74b9,#ff6caf,#ff65a5,#ff5e9c,#ff5894,#ff528d,#ff4c86,#ff477f,#ff4279,#ff3d73,#ff396e,#ff3569,#ff3164,#ff2d5f,#ff295b,#ff2656,#ff2252,#ff1f4f,#ff1c4b,#ff1947,#ff1644,#ff1341,#ff103e,#ff0d3b,#ff0a38,#ff0635,#ff0332,#ff002f,#ff002d)"></i>
<i style="top:252px;left:847px;width:186px;background:linear-gradient(90deg,#00b8ff,#07b7ff,#1db6ff,#30b4ff,#42b3ff,#53b2ff,#63b1ff,#74afff,#84aeff,#95acff,#a5abff,#b6a9ff,#c6a8ff,#d8a6ff,#e9a4ff,#faa3ff,#ff99f2,#ff8de3,#ff83d5,#ff79c8,#ff71bd,#ff69b2,#ff62a9,#ff5ba0,#ff5598,#ff4f90,#ff4989,#ff4482,#ff3f7c,#ff3b76,#ff3671,#ff326b,#ff2e66,#ff2a62,#ff275d,#ff2359,#ff2055,#ff1c51,#ff194d,#ff164a,#ff1346,#ff1043,#ff0d40,#ff0a3d,#ff063a,#ff0337,#ff0034,#ff0032)"></i>
<i style="top:254px;left:846px;width:181px;background:linear-gradient(90deg,#00b2ff,#05b1ff,#1cb0ff,#2eafff,#40adff,#50acff,#60abff,#71a9ff,#81a8ff,#91a6ff,#a1a4ff,#b1a3ff,#c1a1ff,#d29fff,#e39eff,#f49cff,#ff96f9,#ff8ae9,#ff80db,#ff77ce,#ff6ec2,#ff66b7,#ff5fae,#ff59a5,#ff529c,#ff4d94,#ff478d,#ff4286,#ff3d80,#ff397a,#ff3474,#ff306f,#ff2c6a,#ff2865,#ff2561,#ff215c,#ff1e58,#ff1a54,#ff1751,#ff144d,#ff1149,#ff0e46,#ff0b43,#ff0740,#ff043d,#ff003a,#ff0037)"></i>
<i style="top:256px;left:846px;width:176px;background:linear-gradient(90deg,#00acff,#0babff,#20aaff,#32a8ff,#43a7ff,#54a5ff,#64a4ff,#74a2ff,#84a1ff,#949fff,#a49dff,#b59cff,#c59aff,#d698ff,#e796ff,#f894ff,#ff8cf5,#ff81e6,#ff77d8,#ff6ecb,#ff66c0,#ff5fb5,#ff58ab,#ff51a3,#ff4b9a,#ff4693,#ff408c,#ff3c85,#ff377f,#ff3279,#ff2e73,#ff2a6e,#ff2669,#ff2364,#ff1f60,#ff1b5b,#ff1857,#ff1553,#ff1150,#ff0e4c,#ff0b49,#ff0845,#ff0442,#ff003f,#ff003c)"></i>
<i style="top:258px;left:845px;width:172px;background:linear-gradient(90deg,#00a7ff,#0aa5ff,#1ea4ff,#30a3ff,#41a1ff,#52a0ff,#629eff,#729cff,#819bff,#9199ff,#a197ff,#b195ff,#c193ff,#d291ff,#e28fff,#f38dff,#ff88fa,#ff7dea,#ff74dc,#ff6bcf,#ff63c3,#ff5bb9,#ff54af,#ff4ea6,#ff489e,#ff4396,#ff3d8f,#ff3888,#ff3481,#ff2f7b,#ff2b76,#ff2771,#ff236b,#ff2067,#ff1c62,#ff195e,#ff155a,#ff1256,#ff0e52,#ff0b4e,#ff084b,#ff0447,#f04,#ff0041)"></i>
<i style="top:260px;left:844px;width:168px;background:linear-gradient(90deg,#00a1ff,#08a0ff,#1d9fff,#2f9dff,#409cff,#509aff,#6098ff,#6f97ff,#7f95ff,#8e93ff,#9e91ff,#ae8fff,#be8dff,#ce8bff,#de89ff,#ef87ff,#ff84ff,#ff79ef,#ff70e0,#ff67d3,#ff5fc7,#ff58bd,#ff51b3,#ff4ba9,#ff45a1,#ff3f99,#ff3a92,#ff358b,#ff3184,#ff2c7e,#ff2879,#ff2473,#ff206e,#ff1d69,#ff1965,#ff1660,#ff125c,#ff0f58,#ff0b54,#ff0851,#ff044d,#ff004a,#ff0046)"></i>
<i style="top:262px;left:843px;width:164px;background:linear-gradient(90deg,#009cff,#079bff,#1c99ff,#2d98ff,#3e96ff,#4e94ff,#5e93ff,#6d91ff,#7c8fff,#8c8dff,#9b8bff,#ab89ff,#ba87ff,#ca85ff,#da83ff,#ea80ff,#fb7eff,#ff75f3,#ff6ce4,#ff63d7,#ff5ccb,#ff54c0,#ff4eb6,#ff47ad,#ff42a4,#ff3c9c,#ff3795,#ff328e,#ff2e87,#ff2981,#ff257b,#ff2176,#ff1d71,#ff1a6c,#ff1667,#ff1263,#ff0f5e,#ff0b5a,#ff0857,#ff0453,#ff004f,#ff004c)"></i>
<i style="top:264px;left:843px;width:159px;background:linear-gradient(90deg,#0097ff,#0b95ff,#1f94ff,#3092ff,#4090ff,#508fff,#5f8dff,#6e8bff,#7d89ff,#8c87ff,#9b85ff,#aa83ff,#b981ff,#c97eff,#d97cff,#e87aff,#f977ff,#ff70f5,#ff67e7,#ff5fda,#ff57ce,#ff50c3,#ff49b9,#ff43af,#ff3ea7,#ff389f,#ff3397,#ff2f90,#ff2a8a,#ff2684,#ff227e,#ff1e78,#ff1a73,#ff166e,#ff1369,#ff0f65,#ff0b61,#ff085d,#ff0459,#f05,#ff0051)"></i>
<i style="top:266px;left:842px;width:155px;background:linear-gradient(90deg,#0092ff,#0a90ff,#1d8eff,#2e8dff,#3e8bff,#4e89ff,#5d87ff,#6c85ff,#7b83ff,#8981ff,#987fff,#a77dff,#b67bff,#c579ff,#d576ff,#e474ff,#f471ff,#ff6cfa,#ff63eb,#ff5bde,#ff53d2,#ff4cc6,#ff46bc,#ff40b3,#ff3aaa,#ff35a2,#ff309a,#ff2b93,#ff278d,#ff2386,#ff1f80,#ff1b7b,#ff1776,#ff1371,#ff0f6c,#ff0c67,#ff0863,#ff045f,#ff005b,#ff0057)"></i>
<i style="top:268px;left:841px;width:151px;background:linear-gradient(90deg,#008dff,#088bff,#1c89ff,#2d88ff,#3d86ff,#4c84ff,#5b82ff,#6a80ff,#787eff,#877cff,#957aff,#a478ff,#b375ff,#c273ff,#d170ff,#e06eff,#f06bff,#ff68ff,#ff5fef,#ff57e2,#ff50d5,#ff49ca,#ff42c0,#ff3cb6,#ff37ad,#ff32a5,#ff2d9d,#ff2896,#ff2490,#ff1f89,#ff1b83,#ff177e,#ff1378,#ff1073,#ff0c6e,#ff086a,#ff0466,#ff0061,#ff005d)"></i>
<i style="top:270px;left:840px;width:146px;background:linear-gradient(90deg,#08f,#0786ff,#1b85ff,#2b83ff,#3b81ff,#4a7fff,#587dff,#677bff,#7579ff,#8377ff,#9275ff,#a072ff,#ae70ff,#bd6dff,#cc6bff,#db68ff,#ea65ff,#f963ff,#ff5cf6,#ff54e8,#ff4ddb,#ff46d0,#ff40c5,#ff3abb,#ff34b2,#ff2faa,#ff2aa2,#ff259b,#ff2194,#ff1d8d,#ff1987,#ff1581,#ff117c,#ff0d77,#ff0972,#ff056d,#ff0069,#ff0065)"></i>
<i style="top:272px;left:839px;width:142px;background:linear-gradient(90deg,#0083ff,#0582ff,#1980ff,#2a7eff,#397cff,#487aff,#5778ff,#6576ff,#7374ff,#8172ff,#8f6fff,#9d6dff,#ab6aff,#ba68ff,#c865ff,#d763ff,#e660ff,#f55dff,#ff58fa,#ff50ec,#ff49df,#ff42d3,#ff3cc9,#ff36bf,#ff31b5,#ff2bad,#ff27a5,#ff229e,#ff1e97,#ff1990,#ff158a,#ff1184,#ff0d7f,#ff097a,#ff0575,#ff0070,#ff006b)"></i>
<i style="top:274px;left:839px;width:137px;background:linear-gradient(90deg,#007eff,#0a7cff,#1c7bff,#2c79ff,#3b77ff,#4a75ff,#5873ff,#6671ff,#736eff,#816cff,#8f6aff,#9d67ff,#ab65ff,#b962ff,#c75fff,#d55dff,#e45aff,#f257ff,#ff53fd,#ff4bef,#ff44e2,#ff3ed6,#ff38cb,#ff32c1,#ff2db8,#ff27b0,#ff23a8,#ff1ea0,#ff1a99,#ff1593,#ff118d,#ff0d87,#ff0981,#ff047c,#f07,#ff0072)"></i>
<i style="top:276px;left:838px;width:133px;background:linear-gradient(90deg,#007aff,#0878ff,#1b76ff,#2b74ff,#3a72ff,#4870ff,#566eff,#646cff,#7169ff,#7f67ff,#8c65ff,#9a62ff,#a860ff,#b65dff,#c35aff,#d257ff,#e054ff,#ee51ff,#fd4eff,#ff47f3,#ff40e6,#ff3ada,#ff34cf,#ff2ec5,#ff29bc,#ff24b3,#ff1fab,#ff1aa3,#ff169c,#ff1296,#ff0d8f,#ff098a,#ff0484,#ff007f,#ff007a)"></i>
<i style="top:278px;left:837px;width:129px;background:linear-gradient(90deg,#0075ff,#0773ff,#1a71ff,#296fff,#386dff,#466bff,#5469ff,#6267ff,#6f65ff,#7d62ff,#8a60ff,#975dff,#a55bff,#b258ff,#c055ff,#ce52ff,#dc4fff,#ea4cff,#f949ff,#ff43f7,#ff3cea,#ff36de,#ff30d3,#ff2ac9,#ff25bf,#ff20b6,#ff1bae,#ff17a6,#ff129f,#ff0e99,#ff0992,#ff048c,#ff0087,#ff0081)"></i>
<i style="top:280px;left:836px;width:125px;background:linear-gradient(90deg,#0071ff,#066fff,#196dff,#286bff,#3769ff,#4567ff,#5264ff,#6062ff,#6d60ff,#7a5dff,#875bff,#9558ff,#a256ff,#af53ff,#bd50ff,#ca4dff,#d84aff,#e646ff,#f443ff,#ff3ffb,#ff38ee,#ff32e2,#ff2cd6,#ff26cc,#ff21c3,#ff1cba,#ff17b1,#ff13aa,#ff0ea2,#ff099c,#ff0495,#ff008f,#ff0089)"></i>
<i style="top:282px;left:835px;width:121px;background:linear-gradient(90deg,#006cff,#046bff,#1769ff,#2766ff,#3564ff,#4362ff,#5160ff,#5e5eff,#6b5bff,#7859ff,#8556ff,#9253ff,#9f51ff,#ac4eff,#ba4bff,#c748ff,#d545ff,#e241ff,#f03eff,#fe3aff,#ff34f2,#ff2de6,#ff28da,#ff22d0,#ff1dc6,#ff18bd,#ff13b5,#ff0ead,#ff09a5,#ff049e,#ff0098,#ff0092)"></i>
<i style="top:284px;left:835px;width:116px;background:linear-gradient(90deg,#0068ff,#0966ff,#1b64ff,#2b61ff,#395fff,#475dff,#545aff,#6258ff,#6f55ff,#7c53ff,#8950ff,#974dff,#a44aff,#b147ff,#bf44ff,#cc41ff,#da3dff,#e83aff,#f636ff,#ff31fa,#ff2aec,#ff24e0,#ff1fd5,#ff19cb,#ff14c2,#ff0fb9,#ff0ab0,#ff04a9,#ff00a2,#ff009b)"></i>
<i style="top:286px;left:834px;width:111px;background:linear-gradient(90deg,#0064ff,#0861ff,#1a5fff,#295dff,#375bff,#4558ff,#5256ff,#5f54ff,#6c51ff,#794eff,#864cff,#9349ff,#a046ff,#ad43ff,#ba3fff,#c73cff,#d539ff,#e235ff,#f031ff,#fe2dff,#ff27f3,#ff21e6,#ff1bdb,#ff16d0,#ff11c7,#ff0bbe,#ff06b5,#ff00ae,#ff00a6)"></i>
<i style="top:288px;left:833px;width:107px;background:linear-gradient(90deg,#005fff,#075dff,#195bff,#2859ff,#3657ff,#4354ff,#5052ff,#5d4fff,#6a4cff,#774aff,#8447ff,#9044ff,#9d41ff,#aa3eff,#b73bff,#c437ff,#d134ff,#df30ff,#ec2cff,#fa28ff,#ff22f6,#ff1cea,#ff17de,#ff11d4,#ff0cca,#ff06c1,#ff00b8,#ff00b1)"></i>
<i style="top:290px;left:832px;width:103px;background:linear-gradient(90deg,#005bff,#0559ff,#1757ff,#2655ff,#3452ff,#4250ff,#4f4dff,#5c4bff,#6848ff,#7545ff,#8242ff,#8e3fff,#9b3cff,#a739ff,#b436ff,#c132ff,#ce2fff,#db2bff,#e827ff,#f622ff,#ff1dfa,#ff17ee,#ff12e2,#ff0cd7,#ff06cd,#ff00c4,#ff00bc)"></i>
<i style="top:292px;left:832px;width:98px;background:linear-gradient(90deg,#0057ff,#0955ff,#1a52ff,#2850ff,#364eff,#434bff,#5049ff,#5c46ff,#6943ff,#7540ff,#813dff,#8e3aff,#9a37ff,#a634ff,#b331ff,#bf2dff,#cc29ff,#d925ff,#e621ff,#f31dff,#ff18fe,#ff12f1,#ff0ce5,#ff06db,#ff00d1,#ff00c7)"></i>
<i style="top:294px;left:831px;width:94px;background:linear-gradient(90deg,#0053ff,#0851ff,#194eff,#274cff,#354aff,#4247ff,#4e44ff,#5b42ff,#673fff,#733cff,#7f39ff,#8b36ff,#9733ff,#a42fff,#b02cff,#bc28ff,#c924ff,#d520ff,#e21cff,#ef17ff,#fc12ff,#ff0cf5,#ff06e9,#ff00de,#ff00d4)"></i>
<i style="top:296px;left:830px;width:90px;background:linear-gradient(90deg,#004fff,#074dff,#184aff,#2648ff,#3345ff,#4043ff,#4d40ff,#593eff,#653bff,#7138ff,#7d35ff,#8931ff,#952eff,#a12bff,#ad27ff,#b923ff,#c61fff,#d21bff,#df17ff,#eb12ff,#f80cff,#ff06f9,#ff00ed,#ff00e2)"></i>
<i style="top:298px;left:829px;width:86px;background:linear-gradient(90deg,#004bff,#0649ff,#1746ff,#2544ff,#3241ff,#3f3fff,#4b3cff,#5739ff,#6336ff,#6f33ff,#7b30ff,#872dff,#932aff,#9e26ff,#a2f,#b61eff,#c31aff,#cf16ff,#db11ff,#e80cff,#f405ff,#ff00fd,#ff00f1)"></i>
<i style="top:300px;left:828px;width:81px;background:linear-gradient(90deg,#0047ff,#0445ff,#1543ff,#2340ff,#303eff,#3d3bff,#4938ff,#5535ff,#6033ff,#6c30ff,#772cff,#8329ff,#8f26ff,#9a22ff,#a61eff,#b11aff,#bd16ff,#c911ff,#d50cff,#e107ff,#e0f,#fa00ff)"></i>
<i style="top:302px;left:828px;width:76px;background:linear-gradient(90deg,#0043ff,#0941ff,#193eff,#273bff,#3439ff,#4136ff,#4d33ff,#5930ff,#652dff,#7129ff,#7d26ff,#8922ff,#941fff,#a01aff,#ac16ff,#b812ff,#c40dff,#d107ff,#d0f,#ea00ff)"></i>
<i style="top:304px;left:827px;width:72px;background:linear-gradient(90deg,#003fff,#083dff,#183aff,#2637ff,#3335ff,#4032ff,#4c2fff,#582cff,#6428ff,#6f25ff,#7b21ff,#871eff,#921aff,#9e16ff,#a1f,#b60cff,#c206ff,#ce00ff,#da00ff)"></i>
<i style="top:306px;left:826px;width:68px;background:linear-gradient(90deg,#003cff,#0739ff,#1736ff,#2534ff,#3231ff,#3e2eff,#4a2bff,#5628ff,#6224ff,#6e21ff,#791dff,#8519ff,#9015ff,#9c11ff,#a70cff,#b306ff,#bf00ff,#cb00ff)"></i>
<i style="top:308px;left:825px;width:64px;background:linear-gradient(90deg,#0038ff,#0635ff,#1633ff,#2430ff,#312dff,#3d2aff,#4927ff,#5523ff,#6020ff,#6c1cff,#7719ff,#8314ff,#8e10ff,#9a0bff,#a506ff,#b100ff,#bc00ff)"></i>
<i style="top:310px;left:824px;width:60px;background:linear-gradient(90deg,#0034ff,#0432ff,#152fff,#232cff,#3029ff,#3c26ff,#4823ff,#531fff,#5f1cff,#6a18ff,#7614ff,#8110ff,#8c0bff,#9705ff,#a300ff,#ae00ff)"></i>
<i style="top:312px;left:824px;width:55px;background:linear-gradient(90deg,#0030ff,#082dff,#172aff,#2428ff,#3125ff,#3d21ff,#481eff,#531bff,#5f17ff,#6a13ff,#750fff,#800aff,#8b05ff,#9600ff,#a100ff)"></i>
<i style="top:314px;left:823px;width:51px;background:linear-gradient(90deg,#002cff,#072aff,#1627ff,#2324ff,#3021ff,#3b1dff,#471aff,#5216ff,#5d13ff,#680eff,#730aff,#7e05ff,#80f,#9300ff)"></i>
<i style="top:316px;left:822px;width:46px;background:linear-gradient(90deg,#0029ff,#0526ff,#1523ff,#2220ff,#2d1dff,#391aff,#4416ff,#4f13ff,#5a0fff,#640aff,#6f05ff,#7900ff,#8400ff)"></i>
<i style="top:318px;left:821px;width:42px;background:linear-gradient(90deg,#0025ff,#0422ff,#141fff,#201cff,#2c19ff,#3816ff,#4312ff,#4d0eff,#580aff,#6205ff,#6d00ff,#70f)"></i>
<i style="top:320px;left:821px;width:37px;background:linear-gradient(90deg,#0021ff,#071eff,#151bff,#2118ff,#2d15ff,#3811ff,#420dff,#4c09ff,#5705ff,#6100ff,#6b00ff)"></i>
<i style="top:322px;left:820px;width:33px;background:linear-gradient(90deg,#001dff,#061aff,#1417ff,#2014ff,#2b11ff,#360dff,#4009ff,#4b04ff,#50f,#5e00ff)"></i>
<i style="top:324px;left:819px;width:29px;background:linear-gradient(90deg,#0019ff,#0516ff,#1313ff,#1f10ff,#2a0cff,#3408ff,#3f04ff,#4900ff,#5200ff)"></i>
<i style="top:326px;left:818px;width:25px;background:linear-gradient(90deg,#0016ff,#0313ff,#120fff,#1d0cff,#2808ff,#3303ff,#3d00ff,#4600ff)"></i>
<i style="top:328px;left:817px;width:21px;background:linear-gradient(90deg,#0012ff,#020fff,#100bff,#1c07ff,#2703ff,#3100ff,#3a00ff)"></i>
<i style="top:330px;left:817px;width:15px;background:linear-gradient(90deg,#000dff,#0709ff,#1505ff,#2000ff,#2b00ff)"></i>
<i style="top:332px;left:816px;width:11px;background:linear-gradient(90deg,#0009ff,#0504ff,#1300ff,#1f00ff)"></i>
<i style="top:334px;left:816px;width:6px;background:linear-gradient(90deg,#0002ff,#0600ff,#10f)"></i>
</div>
<div class="ins" style="left:1055.3px;top:40.5px;width:132.2px;height:95.4px">
<i style="top:0px;background:linear-gradient(90deg,#7bffca,#84ffc9,#8dffc9,#96ffc8,#9fffc8,#a9ffc7,#b2ffc7,#bcffc6,#c6ffc6,#d0ffc6,#dbffc5,#e5ffc5,#f0ffc4,#fbffc4,#fff9be,#ffeeb6,#ffe5ae,#ffdca6)"></i>
<i style="top:3px;background:linear-gradient(90deg,#7dffcd,#86ffcc,#8fffcc,#99ffcb,#a2ffcb,#abffcb,#b5ffca,#bfffca,#c9ffc9,#d3ffc9,#deffc8,#e8ffc8,#f3ffc7,#feffc7,#fff5bf,#ffebb6,#ffe1ae,#ffd8a7)"></i>
<i style="top:6px;background:linear-gradient(90deg,#80ffd0,#89ffcf,#92ffcf,#9bffcf,#a5ffce,#aeffce,#b8ffcd,#c2ffcd,#ccffcd,#d7ffcc,#e1ffcc,#ecffcb,#f7ffcb,#fffcc8,#fff1bf,#ffe8b7,#ffdeaf,#ffd5a8)"></i>
<i style="top:9px;background:linear-gradient(90deg,#82ffd3,#8bffd3,#94ffd2,#9effd2,#a7ffd2,#b1ffd1,#bbffd1,#c5ffd0,#cfffd0,#daffd0,#e4ffcf,#efffcf,#faffce,#fff8c9,#ffeec0,#ffe4b7,#ffdbb0,#ffd2a8)"></i>
<i style="top:12px;background:linear-gradient(90deg,#84ffd6,#8dffd6,#97ffd6,#a0ffd5,#aaffd5,#b4ffd5,#beffd4,#c8ffd4,#d2ffd3,#ddffd3,#e8ffd3,#f3ffd2,#feffd2,#fff5c9,#ffebc0,#ffe1b8,#ffd8b0,#ffcfa9)"></i>
<i style="top:15px;background:linear-gradient(90deg,#86ffda,#90ffd9,#99ffd9,#a3ffd9,#adffd8,#b7ffd8,#c1ffd8,#cbffd7,#d6ffd7,#e0ffd7,#ebffd6,#f6ffd6,#fffcd3,#fff1ca,#ffe7c1,#ffdeb9,#ffd5b1,#fca)"></i>
<i style="top:18px;background:linear-gradient(90deg,#89ffdd,#92ffdd,#9cffdc,#a6ffdc,#afffdc,#baffdb,#c4ffdb,#ceffdb,#d9ffdb,#e4ffda,#efffda,#faffda,#fff8d4,#ffeeca,#ffe4c2,#ffdbb9,#ffd2b2,#ffcaaa)"></i>
<i style="top:21px;background:linear-gradient(90deg,#8bffe0,#95ffe0,#9effe0,#a8ffe0,#b2ffdf,#bdffdf,#c7ffdf,#d2ffdf,#dcffde,#e7ffde,#f3ffde,#feffdd,#fff5d4,#ffeacb,#ffe1c2,#ffd7ba,#ffcfb2,#ffc7ab)"></i>
<i style="top:24px;background:linear-gradient(90deg,#8effe4,#97ffe4,#a1ffe3,#abffe3,#b5ffe3,#c0ffe3,#caffe2,#d5ffe2,#e0ffe2,#ebffe2,#f6ffe1,#fffcdf,#fff1d5,#ffe7cb,#ffddc3,#ffd4ba,#ffccb3,#ffc4ac)"></i>
<i style="top:27px;background:linear-gradient(90deg,#90ffe7,#9affe7,#a4ffe7,#aeffe7,#b8ffe7,#c3ffe6,#cdffe6,#d8ffe6,#e3ffe6,#eeffe6,#faffe5,#fff8df,#ffeed5,#ffe4cc,#ffdac3,#ffd1bb,#ffc9b3,#ffc1ac)"></i>
<i style="top:30px;background:linear-gradient(90deg,#93ffeb,#9dffeb,#a7ffeb,#b1ffea,#bbffea,#c6ffea,#d1ffea,#dcffea,#e7ffea,#f2ffe9,#feffe9,#fff5e0,#ffead6,#ffe0cc,#ffd7c4,#ffcebc,#ffc6b4,#ffbead)"></i>
<i style="top:33px;background:linear-gradient(90deg,#95ffef,#9fffee,#a9ffee,#b4ffee,#beffee,#c9ffee,#d4ffee,#dfffee,#eaffee,#f6ffed,#fffceb,#fff1e0,#ffe7d6,#ffddcd,#ffd4c4,#ffcbbc,#ffc3b5,#ffbbad)"></i>
<i style="top:36px;background:linear-gradient(90deg,#98fff2,#a2fff2,#acfff2,#b7fff2,#c1fff2,#ccfff2,#d7fff2,#e3fff2,#eefff2,#fafff1,#fff8eb,#ffede1,#ffe3d7,#ffd9cd,#ffd0c5,#ffc8bd,#ffc0b5,#ffb8ae)"></i>
<i style="top:39px;background:linear-gradient(90deg,#9bfff6,#a5fff6,#affff6,#bafff6,#c5fff6,#d0fff6,#dbfff6,#e6fff6,#f2fff6,#fefff6,#fff5ec,#ffeae1,#ffe0d7,#ffd6ce,#ffcdc5,#ffc5bd,#ffbdb6,#ffb6af)"></i>
<i style="top:42px;background:linear-gradient(90deg,#9dfffa,#a8fffa,#b2fffa,#bdfffa,#c8fffa,#d3fffa,#defffa,#eafffa,#f6fffa,#fffcf7,#fff1ec,#ffe6e1,#ffdcd8,#ffd3cf,#ffcac6,#ffc2be,#ffbab6,#ffb3af)"></i>
<i style="top:45px;background:linear-gradient(90deg,#a0fffe,#abfffe,#b5fffe,#c0fffe,#cbfffe,#d6fffe,#e2fffe,#eefffe,#fafffe,#fff8f8,#ffedec,#ffe3e2,#ffd9d8,#ffd0cf,#ffc7c6,#ffbfbe,#ffb7b7,#ffb0b0)"></i>
<i style="top:48px;background:linear-gradient(90deg,#a1fcff,#acfcff,#b6fcff,#c1fcff,#ccfcff,#d7fcff,#e3fcff,#eefcff,#fafcff,#fff5f8,#ffeaed,#ffdfe2,#ffd6d9,#ffcdd0,#ffc4c7,#ffbcbf,#ffb5b7,#ffaeb0)"></i>
<i style="top:51px;background:linear-gradient(90deg,#a2f8ff,#acf8ff,#b6f8ff,#c1f8ff,#ccf8ff,#d7f8ff,#e3f8ff,#eef8ff,#faf7ff,#fff1f8,#ffe6ed,#ffdce3,#ffd2d9,#ffc9d0,#ffc1c7,#ffb9bf,#ffb2b8,#ffabb1)"></i>
<i style="top:54px;background:linear-gradient(90deg,#a2f4ff,#acf4ff,#b7f4ff,#c1f4ff,#ccf4ff,#d7f4ff,#e2f4ff,#eef3ff,#faf3ff,#ffedf9,#ffe2ee,#ffd8e3,#ffcfda,#ffc6d0,#ffbec8,#ffb6c0,#ffafb9,#ffa8b1)"></i>
<i style="top:57px;background:linear-gradient(90deg,#a2f0ff,#acf0ff,#b7f0ff,#c1f0ff,#ccf0ff,#d7f0ff,#e2efff,#eeefff,#f9efff,#ffe9f9,#ffdfee,#ffd5e4,#ffccda,#ffc3d1,#ffbbc9,#ffb4c1,#ffacb9,#ffa6b2)"></i>
<i style="top:60px;background:linear-gradient(90deg,#a2edff,#adecff,#b7ecff,#c1ecff,#ccecff,#d7ecff,#e2ebff,#eeebff,#f9ebff,#ffe6f9,#ffdbee,#ffd2e4,#ffc9da,#ffc0d1,#ffb8c9,#ffb1c1,#ffaaba,#ffa3b3)"></i>
<i style="top:63px;background:linear-gradient(90deg,#a3e9ff,#ade9ff,#b7e8ff,#c2e8ff,#cce8ff,#d7e8ff,#e2e8ff,#ede7ff,#f9e7ff,#ffe2fa,#ffd8ef,#ffcee4,#ffc5db,#ffbdd2,#ffb5ca,#ffaec2,#ffa7ba,#ffa0b3)"></i>
<i style="top:66px;background:linear-gradient(90deg,#a3e5ff,#ade5ff,#b7e5ff,#c2e4ff,#cce4ff,#d7e4ff,#e2e4ff,#ede3ff,#f9e3ff,#ffdefa,#ffd4ef,#ffcbe5,#ffc2db,#ffbad2,#ffb2ca,#ffabc2,#ffa4bb,#ff9eb4)"></i>
<i style="top:69px;background:linear-gradient(90deg,#a3e2ff,#ade1ff,#b7e1ff,#c2e1ff,#cce0ff,#d7e0ff,#e2e0ff,#eddfff,#f8dfff,#ffdbfa,#ffd1ef,#ffc8e5,#ffbfdc,#ffb7d3,#ffb0ca,#ffa8c3,#ffa2bb,#ff9bb4)"></i>
<i style="top:72px;background:linear-gradient(90deg,#a4deff,#aedeff,#b8ddff,#c2ddff,#cdf,#d7dcff,#e2dcff,#eddcff,#f8dbff,#ffd7fb,#ffcdf0,#ffc4e6,#ffbcdc,#ffb4d3,#ffadcb,#ffa6c3,#ff9fbc,#ff99b5)"></i>
<i style="top:75px;background:linear-gradient(90deg,#a4daff,#aedaff,#b8daff,#c2d9ff,#ccd9ff,#d7d9ff,#e2d8ff,#edd8ff,#f8d7ff,#ffd4fb,#ffcaf0,#ffc1e6,#ffb9dd,#ffb1d4,#ffaacb,#ffa3c4,#ff9dbc,#ff96b5)"></i>
<i style="top:78px;background:linear-gradient(90deg,#a4d7ff,#aed7ff,#b8d6ff,#c2d6ff,#ccd5ff,#d7d5ff,#e2d5ff,#edd4ff,#f8d4ff,#ffd0fb,#ffc7f0,#ffbee6,#ffb6dd,#ffaed4,#ffa7cc,#ffa0c4,#ff9abd,#ff94b6)"></i>
<i style="top:81px;background:linear-gradient(90deg,#a4d3ff,#aed3ff,#b8d3ff,#c2d2ff,#ccd2ff,#d7d1ff,#e2d1ff,#ecd0ff,#f7d0ff,#ffcdfb,#ffc4f1,#ffbbe7,#ffb3dd,#ffabd5,#ffa4cc,#ff9ec5,#ff97bd,#ff91b6)"></i>
<i style="top:84px;background:linear-gradient(90deg,#a5d0ff,#aed0ff,#b8cfff,#c2cfff,#ccceff,#d7ceff,#e1cdff,#eccdff,#f7ccff,#ffc9fc,#ffc0f1,#ffb8e7,#ffb0de,#ffa9d5,#ffa2cd,#ff9bc5,#ff95be,#ff8fb7)"></i>
<i style="top:87px;background:linear-gradient(90deg,#a5cdff,#afccff,#b8ccff,#c2cbff,#cccbff,#d7caff,#e1caff,#ecc9ff,#f7c9ff,#ffc6fc,#ffbdf1,#ffb5e8,#ffadde,#ffa6d6,#ff9fcd,#ff99c6,#ff92be,#ff8db7)"></i>
<i style="top:90px;background:linear-gradient(90deg,#a5c9ff,#afc9ff,#b9c8ff,#c2c8ff,#cdc7ff,#d7c7ff,#e1c6ff,#ecc6ff,#f7c5ff,#ffc3fc,#ffbaf2,#ffb2e8,#ffaadf,#ffa3d6,#ff9cce,#ff96c6,#ff90bf,#ff8ab8)"></i>
<i style="top:93px;background:linear-gradient(90deg,#a6c6ff,#afc5ff,#b9c5ff,#c3c4ff,#cdc4ff,#d7c3ff,#e1c3ff,#ecc2ff,#f6c2ff,#ffbffd,#ffb7f2,#ffafe8,#ffa7df,#ffa0d6,#ff9ace,#ff93c7,#ff8dbf,#ff88b8)"></i>
</div>
<svg width="1200" height="541" viewBox="0 0 1200 541">
<rect x="901.55" y="225.56" width="10" height="10" fill="#fff" stroke="#1a1a1a" stroke-width="1.4"/>
<rect x="948.99" y="214.13" width="10" height="10" fill="none" stroke="#fff" stroke-opacity=".88" stroke-width="1.3"/>
<rect x="936.94" y="216.54" width="10" height="10" fill="none" stroke="#fff" stroke-opacity=".88" stroke-width="1.3"/>
<rect x="867.68" y="250.9" width="10" height="10" fill="none" stroke="#fff" stroke-opacity=".88" stroke-width="1.3"/>
<rect x="916.3" y="189.74" width="10" height="10" fill="none" stroke="#fff" stroke-opacity=".88" stroke-width="1.3"/>
<rect x="877.78" y="255.9" width="10" height="10" fill="none" stroke="#fff" stroke-opacity=".88" stroke-width="1.3"/>
<rect x="874.16" y="215.12" width="10" height="10" fill="none" stroke="#fff" stroke-opacity=".88" stroke-width="1.3"/>
<rect x="1009.23" y="197.2" width="10" height="10" fill="none" stroke="#fff" stroke-opacity=".88" stroke-width="1.3"/>
<rect x="849.14" y="279.68" width="10" height="10" fill="none" stroke="#fff" stroke-opacity=".88" stroke-width="1.3"/>
<rect x="981.89" y="232.09" width="10" height="10" fill="none" stroke="#fff" stroke-opacity=".88" stroke-width="1.3"/>
<rect x="887.29" y="267.94" width="10" height="10" fill="none" stroke="#fff" stroke-opacity=".88" stroke-width="1.3"/>
<rect x="935.75" y="164.02" width="10" height="10" fill="none" stroke="#fff" stroke-opacity=".88" stroke-width="1.3"/>
<rect x="987.73" y="184.36" width="10" height="10" fill="none" stroke="#fff" stroke-opacity=".88" stroke-width="1.3"/>
<rect x="834.88" y="298.06" width="10" height="10" fill="none" stroke="#fff" stroke-opacity=".88" stroke-width="1.3"/>
<rect x="898.09" y="164.71" width="10" height="10" fill="none" stroke="#fff" stroke-opacity=".88" stroke-width="1.3"/>
<rect x="1024.52" y="229.68" width="10" height="10" fill="none" stroke="#fff" stroke-opacity=".88" stroke-width="1.3"/>
<rect x="974.44" y="171.21" width="10" height="10" fill="none" stroke="#fff" stroke-opacity=".88" stroke-width="1.3"/>
<rect x="934.13" y="258.39" width="10" height="10" fill="none" stroke="#fff" stroke-opacity=".88" stroke-width="1.3"/>
<rect x="843.36" y="248.91" width="10" height="10" fill="none" stroke="#fff" stroke-opacity=".88" stroke-width="1.3"/>
<circle cx="901.76" cy="230.07" r="3.1" fill="#9a9a9a" stroke="#1c1c1c" stroke-width="1"/>
<circle cx="901.49" cy="230.19" r="3.1" fill="#909090" stroke="#1c1c1c" stroke-width="1"/>
<circle cx="901.49" cy="230.38" r="3.1" fill="#888" stroke="#1c1c1c" stroke-width="1"/>
<circle cx="901.38" cy="230.49" r="3.1" fill="#808080" stroke="#1c1c1c" stroke-width="1"/>
<circle cx="901.44" cy="230.53" r="3.1" fill="#787878" stroke="#1c1c1c" stroke-width="1"/>
<circle cx="884.63" cy="265.99" r="3.1" fill="#050505" stroke="#1c1c1c" stroke-width="1"/>
<circle cx="949.52" cy="216.72" r="3.1" fill="#6a5040" stroke="#1c1c1c" stroke-width="1"/>
<circle cx="934.39" cy="220.01" r="3.1" fill="#a8887a" stroke="#1c1c1c" stroke-width="1"/>
<circle cx="868.91" cy="255.29" r="3.1" fill="#6a7f9c" stroke="#1c1c1c" stroke-width="1"/>
<circle cx="916.67" cy="190.54" r="3.1" fill="#56684a" stroke="#1c1c1c" stroke-width="1"/>
<circle cx="879.23" cy="259.34" r="3.1" fill="#807ca8" stroke="#1c1c1c" stroke-width="1"/>
<circle cx="876.74" cy="219.05" r="3.1" fill="#5f9f90" stroke="#1c1c1c" stroke-width="1"/>
<circle cx="1009.39" cy="197.11" r="3.1" fill="#b8803c" stroke="#1c1c1c" stroke-width="1"/>
<circle cx="849.62" cy="284.68" r="3.1" fill="#4c5a94" stroke="#1c1c1c" stroke-width="1"/>
<circle cx="979.78" cy="237.09" r="3.1" fill="#a85a68" stroke="#1c1c1c" stroke-width="1"/>
<circle cx="885.28" cy="274.47" r="3.1" fill="#604070" stroke="#1c1c1c" stroke-width="1"/>
<circle cx="936.66" cy="164.93" r="3.1" fill="#8c9c4c" stroke="#1c1c1c" stroke-width="1"/>
<circle cx="986.59" cy="184.85" r="3.1" fill="#b8923c" stroke="#1c1c1c" stroke-width="1"/>
<circle cx="835.95" cy="304.86" r="3.1" fill="#3c4488" stroke="#1c1c1c" stroke-width="1"/>
<circle cx="899.6" cy="166.92" r="3.1" fill="#4a8450" stroke="#1c1c1c" stroke-width="1"/>
<circle cx="1027.7" cy="233.77" r="3.1" fill="#a03c44" stroke="#1c1c1c" stroke-width="1"/>
<circle cx="972.92" cy="171.12" r="3.1" fill="#c0a83c" stroke="#1c1c1c" stroke-width="1"/>
<circle cx="930.23" cy="263.96" r="3.1" fill="#a0608c" stroke="#1c1c1c" stroke-width="1"/>
<circle cx="846.32" cy="253.91" r="3.1" fill="#3c8498" stroke="#1c1c1c" stroke-width="1"/>
<rect x="1055.3" y="40.5" width="132.2" height="95.4" fill="none" stroke="#8c8c8c" stroke-width="1"/>
<rect x="1115.4" y="83.4" width="10" height="8.6" fill="#fff" stroke="#1a1a1a" stroke-width="1.3"/>
<ellipse cx="1097.44" cy="82.38" rx="3.6" ry="3.1" fill="#9a9a9a" stroke="#1c1c1c" stroke-width="1"/>
<ellipse cx="1096.09" cy="82.95" rx="3.6" ry="3.1" fill="#909090" stroke="#1c1c1c" stroke-width="1"/>
<ellipse cx="1096.09" cy="83.9" rx="3.6" ry="3.1" fill="#888" stroke="#1c1c1c" stroke-width="1"/>
<ellipse cx="1095.55" cy="84.48" rx="3.6" ry="3.1" fill="#808080" stroke="#1c1c1c" stroke-width="1"/>
<ellipse cx="1095.82" cy="84.67" rx="3.6" ry="3.1" fill="#787878" stroke="#1c1c1c" stroke-width="1"/>
<rect x="994.4" y="332.4" width="195.4" height="17.5" fill="#333"/>
<text x="1008.1" y="345.3" font-size="13" fill="#f0f0f0" textLength="168" lengthAdjust="spacingAndGlyphs">RGB Triplet: 235, 235, 235</text>
<rect x="1011.6" y="497.5" width="23.9" height="23.2" rx="3.2" fill="#fa870e"/>
<path d="M1032.2 499.9L1020.4 500.2" fill="none" stroke="#c9a27a" stroke-width="1.3"/>
<path d="M1018.8 500.2Q1020.4 503 1023.2 505.8Q1028.4 509.4 1028.4 511Q1028 513.4 1024.2 520.6" fill="none" stroke="url(#lg)" stroke-width="2.5"/>
<text x="1042.5" y="518.4" font-size="24.6" fill="#1c1c1c" textLength="136.5" lengthAdjust="spacingAndGlyphs" fill-opacity=".62">Soomal.com</text>
</svg>
</body></html>
